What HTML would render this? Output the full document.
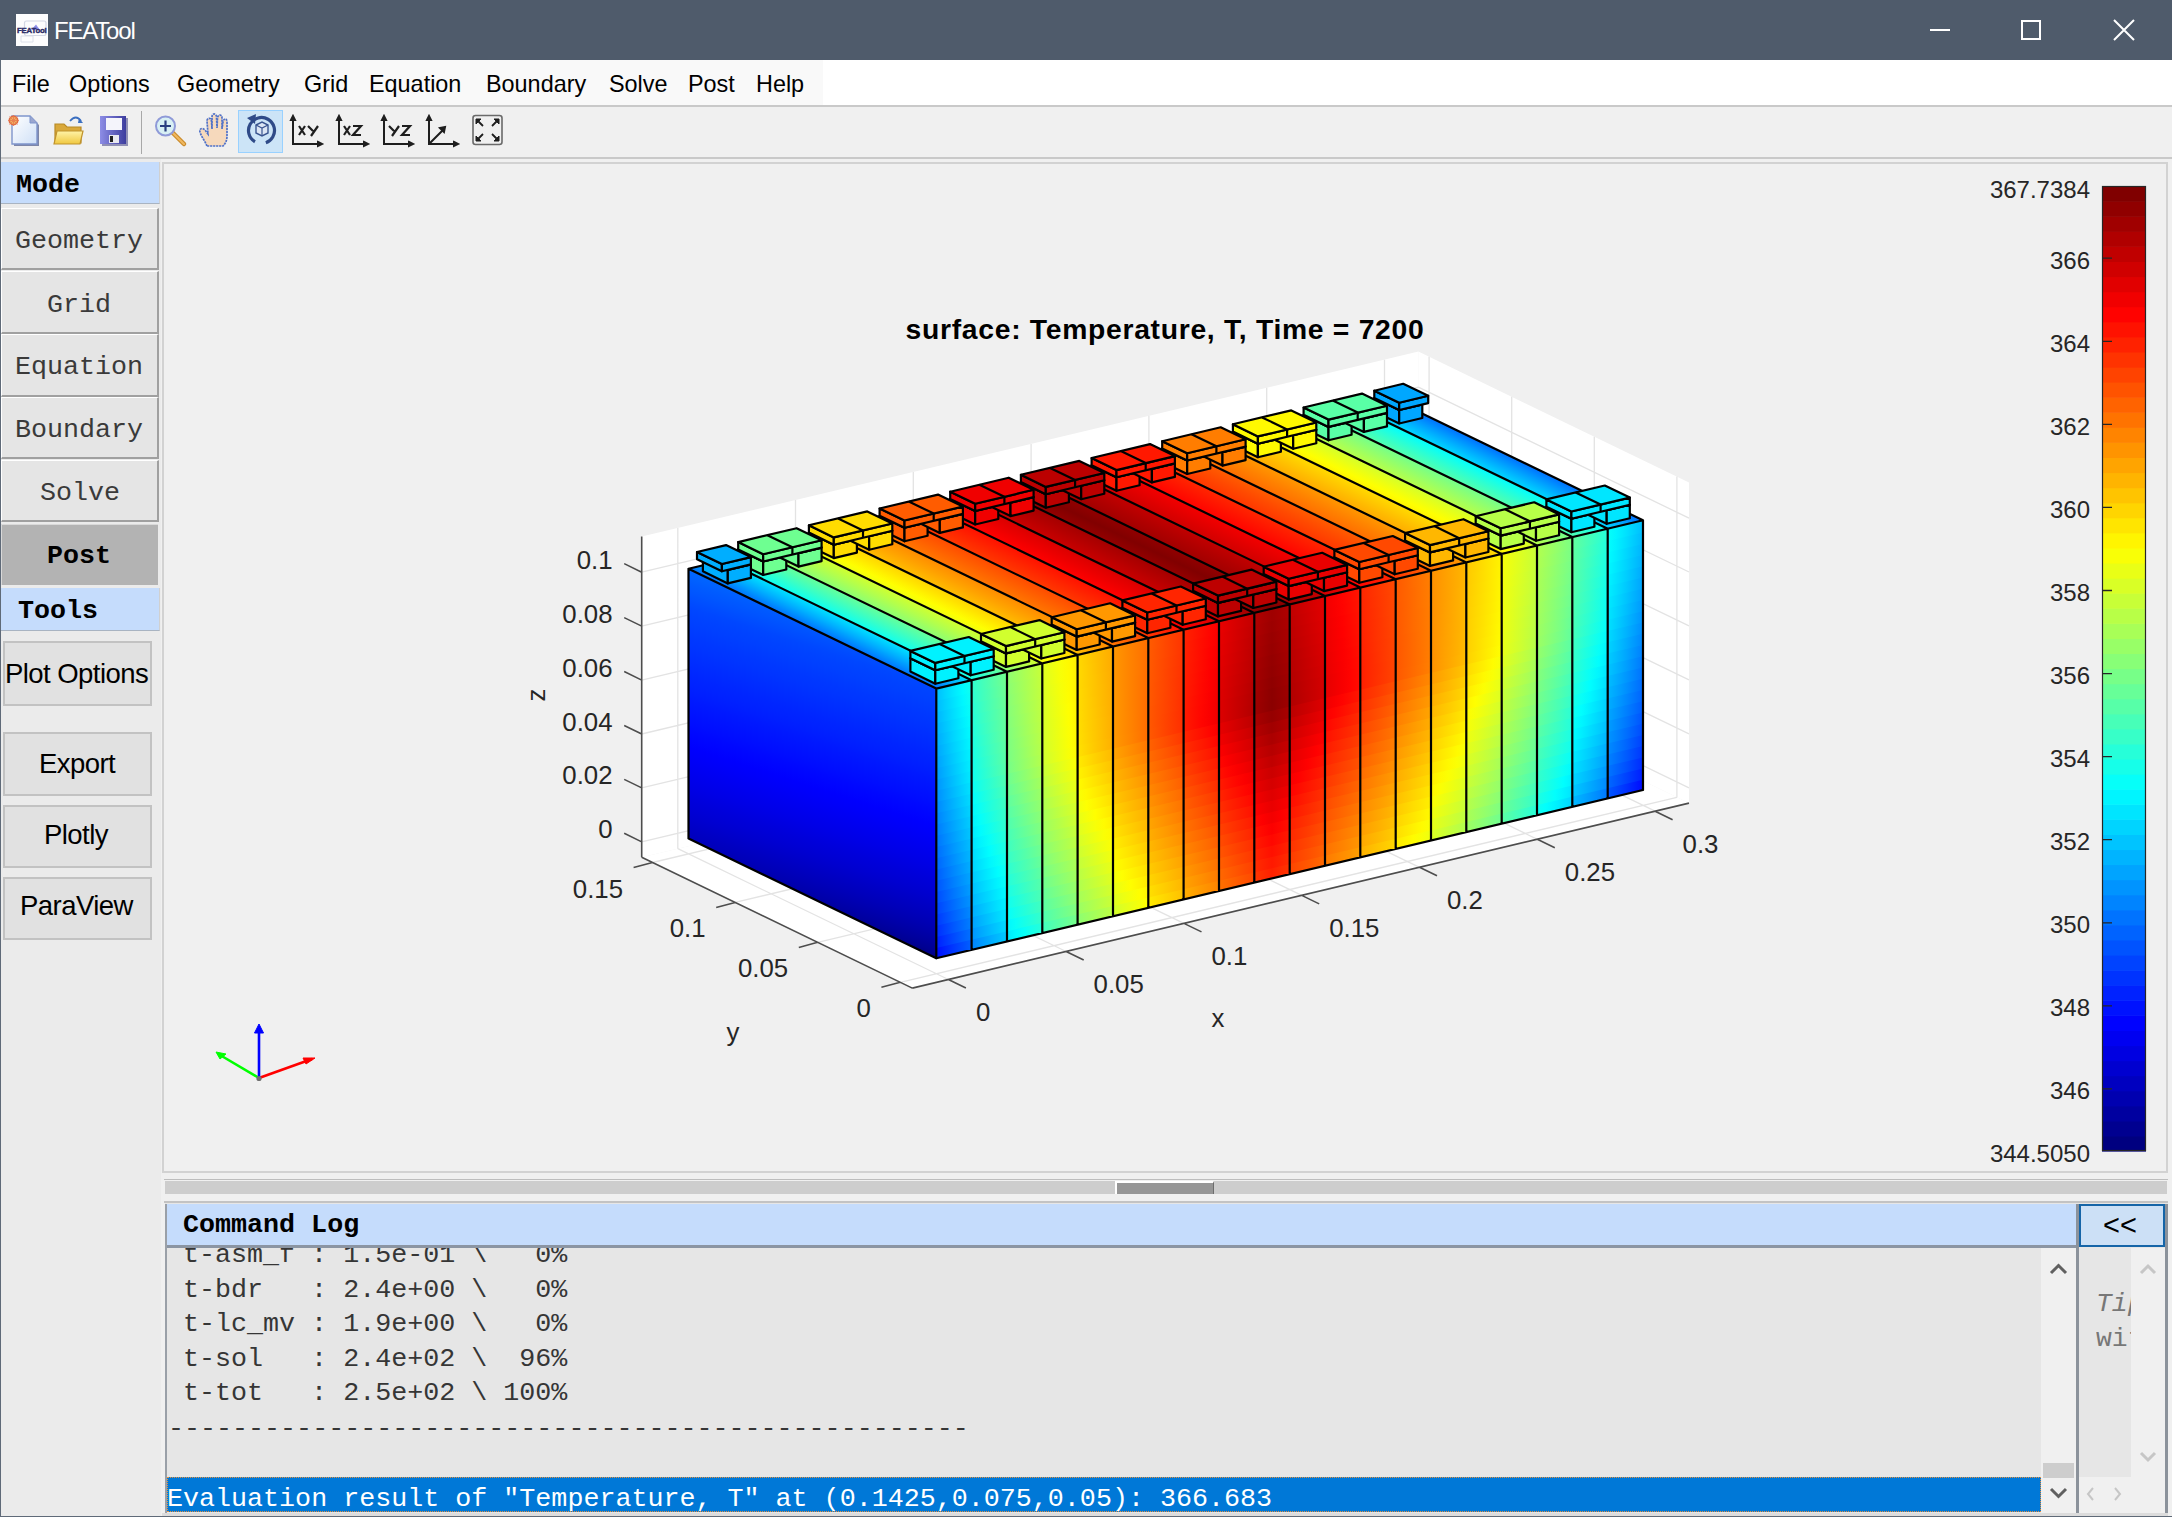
<!DOCTYPE html>
<html><head><meta charset="utf-8">
<style>
html,body{margin:0;padding:0;}
body{width:2172px;height:1517px;overflow:hidden;position:relative;background:#f0f0f0;font-family:"Liberation Sans",sans-serif;}
.a{position:absolute;}
.mono{font-family:"Liberation Mono",monospace;}
.plot{position:absolute;left:0;top:0;}
.tb{left:0;top:0;width:2172px;height:60px;background:#4f5b6b;}
.ttl{left:54px;top:16px;color:#fff;font-size:24px;line-height:30px;letter-spacing:-1.2px;}
.mb{left:0;top:60px;width:2172px;height:45px;background:#fff;}
.mbi{left:0;top:60px;width:823px;height:45px;background:#f9f9f9;}
.mi{top:70px;font-size:23.4px;line-height:28px;color:#000;}
.ln{background:#c9c9c9;}
.lbtn{left:1px;width:158px;background:#e5e5e5;border-top:1px solid #fff;border-left:1px solid #fff;border-right:2px solid #a0a0a0;border-bottom:2px solid #a0a0a0;box-sizing:border-box;}
.ltxt{font-size:26.7px;color:#3a3a3a;line-height:30px;}
.hdr{background:#c5dcfc;}
.fbtn{left:3px;width:149px;background:#e1e1e1;border:2px solid #c2c2c2;box-sizing:border-box;}
.ftxt{font-size:27.5px;letter-spacing:-0.55px;color:#000;line-height:30px;}
.log{font-size:26.7px;line-height:30px;color:#363636;white-space:pre;}
</style></head><body>
<!-- title bar -->
<div class="a tb"></div>
<svg class="a" style="left:16px;top:14px" width="32" height="32" viewBox="16 14 32 32"><rect x="16" y="14" width="32" height="32" fill="#fdfdfd"/>
<rect x="24.5" y="21" width="21.5" height="14.5" rx="2" fill="none" stroke="#d4d8e4" stroke-width="1.2"/>
<path d="M21 36H33V42H21Z" fill="none" stroke="#dde0ea" stroke-width="1"/>
<path d="M31 30L36 24.5L40 30Z" fill="#8f8fe8"/>
<text x="31.8" y="33" text-anchor="middle" font-family="Liberation Sans, sans-serif" font-weight="bold" font-size="7.8" fill="#2c2c66" stroke="#2c2c66" stroke-width="0.4" letter-spacing="-0.2">FEATool</text></svg>
<div class="a ttl">FEATool</div>
<div class="a" style="left:1930px;top:29px;width:20px;height:2px;background:#fff;"></div>
<div class="a" style="left:2021px;top:20px;width:16px;height:16px;border:2px solid #fff;"></div>
<svg class="a" style="left:2110px;top:16px" width="28" height="28"><path d="M4 4L24 24M24 4L4 24" stroke="#fff" stroke-width="2"/></svg>
<!-- menu -->
<div class="a mb"></div>
<div class="a mbi"></div>
<div class="a mi" style="left:12px">File</div>
<div class="a mi" style="left:69px">Options</div>
<div class="a mi" style="left:177px">Geometry</div>
<div class="a mi" style="left:304px">Grid</div>
<div class="a mi" style="left:369px">Equation</div>
<div class="a mi" style="left:486px">Boundary</div>
<div class="a mi" style="left:609px">Solve</div>
<div class="a mi" style="left:688px">Post</div>
<div class="a mi" style="left:756px">Help</div>
<div class="a ln" style="left:0;top:105px;width:2172px;height:2px;"></div>
<!-- toolbar -->
<div class="a ln" style="left:0;top:157px;width:2172px;height:2px;"></div>
<div class="a" style="left:141px;top:111px;width:1px;height:43px;background:#a8a8a8;"></div>
<div class="a" style="left:238px;top:110px;width:45px;height:43px;background:#cce4f7;border:1px solid #99d1ff;box-sizing:border-box;"></div>
<svg class="a" style="left:0;top:0" width="520" height="160" viewBox="0 0 520 160">
<defs>
<linearGradient id="tpg" x1="0" y1="0" x2="1" y2="1"><stop offset="0" stop-color="#ffffff"/><stop offset="1" stop-color="#cfe0f7"/></linearGradient>
<linearGradient id="tfg" x1="0" y1="0" x2="0" y2="1"><stop offset="0" stop-color="#fff3a8"/><stop offset="1" stop-color="#f0c840"/></linearGradient>
<linearGradient id="tsg" x1="0" y1="0" x2="1" y2="0"><stop offset="0" stop-color="#8d8de6"/><stop offset="1" stop-color="#3d3d9e"/></linearGradient>
</defs>
<!-- new doc -->
<path d="M14 118H32L39 125V146H14Z" fill="#7d86a8"/>
<path d="M12 116H30L37 123V144H12Z" fill="url(#tpg)" stroke="#7f95cc" stroke-width="1.4"/>
<path d="M30 116V123H37" fill="#9aa6cf" stroke="#7f95cc" stroke-width="1"/>
<circle cx="13.5" cy="120.5" r="4.2" fill="#f0b060" stroke="#e06a40" stroke-width="1.6"/>
<path d="M8 120.5H19M13.5 115V126M9.5 116.5L17.5 124.5M17.5 116.5L9.5 124.5" stroke="#e87850" stroke-width="1" opacity="0.8"/>
<!-- open folder -->
<path d="M55 124H64L67 127H81V143H55Z" fill="#d9a83a" stroke="#b88a25" stroke-width="1.2"/>
<path d="M57 131H83L80 144H54Z" fill="url(#tfg)" stroke="#c0932c" stroke-width="1.2"/>
<path d="M70 121Q76 114 81 121" stroke="#3b6fc0" stroke-width="1.8" fill="none"/>
<path d="M79 118L83 123L78 123Z" fill="#3b6fc0"/>
<!-- save -->
<path d="M102 118H128V146H102Z" fill="#30307a" opacity="0.5"/>
<path d="M100 116H126V144H100Z" fill="url(#tsg)"/>
<path d="M106 118H122V130H106Z" fill="#f4f4fb"/>
<path d="M109 135H119V143H109Z" fill="#e8e8f0"/>
<path d="M110 136H113V142H110Z" fill="#202020"/>
<!-- separator -->
<!-- zoom -->
<path d="M173 133L184 144" stroke="#c98a2a" stroke-width="4.5" stroke-linecap="round"/>
<path d="M173 133L184 144" stroke="#f0b860" stroke-width="2.2" stroke-linecap="round"/>
<circle cx="165.5" cy="126" r="9.5" fill="#d8f0f4" stroke="#8f9ad8" stroke-width="2"/>
<path d="M160 126H171M165.5 120.5V131.5" stroke="#2a3f80" stroke-width="2.2"/>
<!-- hand -->
<path d="M207 146C205 141 201 136 200 132C199 129 202 127 205 130L208 134L207 121C207 118 211 117 211.5 121L212 129L212 117C212 113 216.5 113 216.5 117L217 128L217.5 118C218 114 222 114 222 118L222 129L223 122C223.5 118 227 118 227 122L227 136C227 141 225 144 223 146Z" fill="#f6d9bc" stroke="#4e70c8" stroke-width="1.7" stroke-dasharray="2.2 0.8"/>
<!-- rotate -->
<circle cx="261.5" cy="130.5" r="13" fill="none" stroke="#2f4a88" stroke-width="3.2" stroke-dasharray="70 12" transform="rotate(120 261.5 130.5)"/>
<path d="M247 118L256 114L255 124Z" fill="#2f4a88"/>
<path d="M256 125L262 122L268 125L268 133L262 136L256 133Z" fill="#dce6f4" stroke="#3a5590" stroke-width="1.4"/>
<path d="M256 125L262 128L268 125M262 128V136" stroke="#3a5590" stroke-width="1.2" fill="none"/>
<g stroke="#1e1e1e" stroke-width="2" fill="none">
<!-- xy -->
<path d="M293 117V144H321"/><path d="M291 120L293 116L295 120Z M318 142L322 144L318 146Z" fill="#1e1e1e"/>
<path d="M299 126L305 135M305 126L299 135M308 126L313 131M318 126L311 136" stroke-width="2.2"/>
<!-- xz -->
<path d="M339 117V144H367"/><path d="M337 120L339 116L341 120Z M364 142L368 144L364 146Z" fill="#1e1e1e"/>
<path d="M344 126L350 135M350 126L344 135M353 126H361L353 135H361" stroke-width="2.2"/>
<!-- yz -->
<path d="M384 117V144H412"/><path d="M382 120L384 116L386 120Z M409 142L413 144L409 146Z" fill="#1e1e1e"/>
<path d="M389 126L394 131M399 126L392 136M402 126H410L402 135H410" stroke-width="2.2"/>
<!-- 3d -->
<path d="M429 117V144H457M429 144L443 130"/><path d="M427 120L429 116L431 120Z M454 142L458 144L454 146Z M440 128L445 127L444 132Z" fill="#1e1e1e"/>
<!-- fit -->
<rect x="473" y="115.5" width="29" height="29" rx="2.5" stroke="#6a6a6a" stroke-width="1.6"/>
<path d="M477 120L483 126M498 120L492 126M477 140L483 134M498 140L492 134" stroke-width="1.8"/>
<path d="M476 119H481L476 124Z M499 119H494L499 124Z M476 141H481L476 136Z M499 141H494L499 136Z" fill="#1e1e1e" stroke-width="1"/>
</g>
</svg>

<!-- left panel -->
<div class="a" style="left:0;top:159px;width:161px;height:1358px;background:#ebebeb;"></div>
<div class="a" style="left:0;top:60px;width:1px;height:1457px;background:#5f6a78;"></div>
<div class="a hdr" style="left:1px;top:162px;width:159px;height:42px;border-bottom:1px solid #a9b4c2;border-right:1px solid #d0d0d0;box-sizing:border-box;"></div>
<div class="a mono ltxt" style="left:16px;top:170px;font-weight:bold;color:#000;">Mode</div>
<div class="a lbtn" style="top:208px;height:62px;"></div>
<div class="a mono ltxt" style="left:15px;top:226px;">Geometry</div>
<div class="a lbtn" style="top:271px;height:63px;"></div>
<div class="a mono ltxt" style="left:47px;top:289.5px;">Grid</div>
<div class="a lbtn" style="top:334px;height:63px;"></div>
<div class="a mono ltxt" style="left:15px;top:351.5px;">Equation</div>
<div class="a lbtn" style="top:397px;height:62px;"></div>
<div class="a mono ltxt" style="left:15px;top:415px;">Boundary</div>
<div class="a lbtn" style="top:460px;height:62px;"></div>
<div class="a mono ltxt" style="left:40px;top:478px;">Solve</div>
<div class="a" style="left:1px;top:524px;width:157px;height:61px;background:#b3b3b3;border-top:1px solid #d9d9d9;border-left:1px solid #d9d9d9;box-sizing:border-box;"></div>
<div class="a mono ltxt" style="left:47px;top:541px;font-weight:bold;color:#000;">Post</div>
<div class="a hdr" style="left:1px;top:588px;width:159px;height:43px;border-bottom:1px solid #a9b4c2;border-right:1px solid #d0d0d0;box-sizing:border-box;"></div>
<div class="a mono ltxt" style="left:18px;top:595.5px;font-weight:bold;color:#000;">Tools</div>
<div class="a fbtn" style="top:641px;height:65px;"></div>
<div class="a ftxt" style="left:5px;top:659px;">Plot Options</div>
<div class="a fbtn" style="top:732px;height:64px;"></div>
<div class="a ftxt" style="left:39px;top:749px;">Export</div>
<div class="a fbtn" style="top:805px;height:63px;"></div>
<div class="a ftxt" style="left:44px;top:820px;">Plotly</div>
<div class="a fbtn" style="top:877px;height:63px;"></div>
<div class="a ftxt" style="left:20px;top:891px;">ParaView</div>
<!-- plot panel -->
<div class="a" style="left:162px;top:162px;width:2006px;height:1011px;background:#f0f0f0;border:2px solid #d2d2d2;box-sizing:border-box;"></div>
<svg class="plot" width="2172" height="1517" viewBox="0 0 2172 1517"><defs><linearGradient id="gL" gradientUnits="userSpaceOnUse" x1="936.3" y1="958.3" x2="1026.4" y2="677"><stop offset="0.000" stop-color="#000080"/><stop offset="0.025" stop-color="#000093"/><stop offset="0.050" stop-color="#00009f"/><stop offset="0.075" stop-color="#0000a9"/><stop offset="0.100" stop-color="#0000b2"/><stop offset="0.125" stop-color="#0000ba"/><stop offset="0.150" stop-color="#0000c1"/><stop offset="0.175" stop-color="#0000c8"/><stop offset="0.200" stop-color="#0000cf"/><stop offset="0.225" stop-color="#0000d5"/><stop offset="0.250" stop-color="#0000da"/><stop offset="0.275" stop-color="#0000e0"/><stop offset="0.300" stop-color="#0000e6"/><stop offset="0.325" stop-color="#0000eb"/><stop offset="0.350" stop-color="#0000f0"/><stop offset="0.375" stop-color="#0000f5"/><stop offset="0.400" stop-color="#0000fa"/><stop offset="0.425" stop-color="#0000fe"/><stop offset="0.450" stop-color="#0004ff"/><stop offset="0.475" stop-color="#0008ff"/><stop offset="0.500" stop-color="#000dff"/><stop offset="0.525" stop-color="#0011ff"/><stop offset="0.550" stop-color="#0015ff"/><stop offset="0.575" stop-color="#0019ff"/><stop offset="0.600" stop-color="#001eff"/><stop offset="0.625" stop-color="#0022ff"/><stop offset="0.650" stop-color="#0025ff"/><stop offset="0.675" stop-color="#0029ff"/><stop offset="0.700" stop-color="#002dff"/><stop offset="0.725" stop-color="#0031ff"/><stop offset="0.750" stop-color="#0035ff"/><stop offset="0.775" stop-color="#0038ff"/><stop offset="0.800" stop-color="#003cff"/><stop offset="0.825" stop-color="#0040ff"/><stop offset="0.850" stop-color="#0043ff"/><stop offset="0.875" stop-color="#0047ff"/><stop offset="0.900" stop-color="#004eff"/><stop offset="0.925" stop-color="#0055ff"/><stop offset="0.950" stop-color="#005bff"/><stop offset="0.975" stop-color="#0062ff"/><stop offset="1.000" stop-color="#0069ff"/></linearGradient><linearGradient id="gF0" gradientUnits="userSpaceOnUse" x1="936.3" y1="0" x2="1643" y2="0"><stop offset="0.0000" stop-color="#000cff"/><stop offset="0.0125" stop-color="#0023ff"/><stop offset="0.0250" stop-color="#0039ff"/><stop offset="0.0375" stop-color="#004dff"/><stop offset="0.0500" stop-color="#0061ff"/><stop offset="0.0500" stop-color="#0083ff"/><stop offset="0.0625" stop-color="#0096ff"/><stop offset="0.0750" stop-color="#00a9ff"/><stop offset="0.0875" stop-color="#00baff"/><stop offset="0.1000" stop-color="#00cbff"/><stop offset="0.1000" stop-color="#00e8ff"/><stop offset="0.1125" stop-color="#00f9ff"/><stop offset="0.1250" stop-color="#09fff6"/><stop offset="0.1375" stop-color="#19ffe6"/><stop offset="0.1500" stop-color="#27ffd8"/><stop offset="0.1500" stop-color="#40ffbf"/><stop offset="0.1625" stop-color="#4fffb0"/><stop offset="0.1750" stop-color="#5cffa3"/><stop offset="0.1875" stop-color="#6aff95"/><stop offset="0.2000" stop-color="#77ff88"/><stop offset="0.2000" stop-color="#8dff72"/><stop offset="0.2125" stop-color="#9aff65"/><stop offset="0.2250" stop-color="#a6ff59"/><stop offset="0.2375" stop-color="#b2ff4d"/><stop offset="0.2500" stop-color="#beff41"/><stop offset="0.2500" stop-color="#d2ff2d"/><stop offset="0.2625" stop-color="#deff21"/><stop offset="0.2750" stop-color="#eaff15"/><stop offset="0.2875" stop-color="#f5ff0a"/><stop offset="0.3000" stop-color="#fffe00"/><stop offset="0.3000" stop-color="#ffeb00"/><stop offset="0.3125" stop-color="#ffe000"/><stop offset="0.3250" stop-color="#ffd500"/><stop offset="0.3375" stop-color="#ffca00"/><stop offset="0.3500" stop-color="#ffc000"/><stop offset="0.3500" stop-color="#ffae00"/><stop offset="0.3625" stop-color="#ffa300"/><stop offset="0.3750" stop-color="#ff9800"/><stop offset="0.3875" stop-color="#ff8e00"/><stop offset="0.4000" stop-color="#ff8300"/><stop offset="0.4000" stop-color="#ff7100"/><stop offset="0.4125" stop-color="#ff6700"/><stop offset="0.4250" stop-color="#ff5d00"/><stop offset="0.4375" stop-color="#ff5200"/><stop offset="0.4500" stop-color="#ff4800"/><stop offset="0.4500" stop-color="#ff3600"/><stop offset="0.4625" stop-color="#ff2c00"/><stop offset="0.4750" stop-color="#ff2100"/><stop offset="0.4875" stop-color="#ff2b00"/><stop offset="0.5000" stop-color="#ff3400"/><stop offset="0.5000" stop-color="#ff4400"/><stop offset="0.5125" stop-color="#ff4e00"/><stop offset="0.5250" stop-color="#ff5700"/><stop offset="0.5375" stop-color="#ff6000"/><stop offset="0.5500" stop-color="#ff6a00"/><stop offset="0.5500" stop-color="#ff7a00"/><stop offset="0.5625" stop-color="#ff8300"/><stop offset="0.5750" stop-color="#ff8d00"/><stop offset="0.5875" stop-color="#ff9600"/><stop offset="0.6000" stop-color="#ffa000"/><stop offset="0.6000" stop-color="#ffb000"/><stop offset="0.6125" stop-color="#ffba00"/><stop offset="0.6250" stop-color="#ffc400"/><stop offset="0.6375" stop-color="#ffcd00"/><stop offset="0.6500" stop-color="#ffd700"/><stop offset="0.6500" stop-color="#ffe800"/><stop offset="0.6625" stop-color="#fff200"/><stop offset="0.6750" stop-color="#fffc00"/><stop offset="0.6875" stop-color="#f8ff07"/><stop offset="0.7000" stop-color="#eeff11"/><stop offset="0.7000" stop-color="#dcff23"/><stop offset="0.7125" stop-color="#d2ff2d"/><stop offset="0.7250" stop-color="#c7ff38"/><stop offset="0.7375" stop-color="#bcff43"/><stop offset="0.7500" stop-color="#b1ff4e"/><stop offset="0.7500" stop-color="#9eff61"/><stop offset="0.7625" stop-color="#93ff6c"/><stop offset="0.7750" stop-color="#88ff77"/><stop offset="0.7875" stop-color="#7cff83"/><stop offset="0.8000" stop-color="#70ff8f"/><stop offset="0.8000" stop-color="#5bffa4"/><stop offset="0.8125" stop-color="#4fffb0"/><stop offset="0.8250" stop-color="#42ffbd"/><stop offset="0.8375" stop-color="#35ffca"/><stop offset="0.8500" stop-color="#27ffd8"/><stop offset="0.8500" stop-color="#10ffef"/><stop offset="0.8625" stop-color="#02fffd"/><stop offset="0.8750" stop-color="#00f3ff"/><stop offset="0.8875" stop-color="#00e4ff"/><stop offset="0.9000" stop-color="#00d5ff"/><stop offset="0.9000" stop-color="#00baff"/><stop offset="0.9125" stop-color="#00aaff"/><stop offset="0.9250" stop-color="#009aff"/><stop offset="0.9375" stop-color="#0089ff"/><stop offset="0.9500" stop-color="#0077ff"/><stop offset="0.9500" stop-color="#0058ff"/><stop offset="0.9625" stop-color="#0046ff"/><stop offset="0.9750" stop-color="#0033ff"/><stop offset="0.9875" stop-color="#001fff"/><stop offset="1.0000" stop-color="#000aff"/></linearGradient><linearGradient id="gF1" gradientUnits="userSpaceOnUse" x1="936.3" y1="0" x2="1643" y2="0"><stop offset="0.0000" stop-color="#001eff"/><stop offset="0.0125" stop-color="#0035ff"/><stop offset="0.0250" stop-color="#004aff"/><stop offset="0.0375" stop-color="#005fff"/><stop offset="0.0500" stop-color="#0072ff"/><stop offset="0.0500" stop-color="#0094ff"/><stop offset="0.0625" stop-color="#00a7ff"/><stop offset="0.0750" stop-color="#00b9ff"/><stop offset="0.0875" stop-color="#00caff"/><stop offset="0.1000" stop-color="#00dbff"/><stop offset="0.1000" stop-color="#00f7ff"/><stop offset="0.1125" stop-color="#08fff7"/><stop offset="0.1250" stop-color="#18ffe7"/><stop offset="0.1375" stop-color="#27ffd8"/><stop offset="0.1500" stop-color="#36ffc9"/><stop offset="0.1500" stop-color="#4effb1"/><stop offset="0.1625" stop-color="#5cffa3"/><stop offset="0.1750" stop-color="#6aff95"/><stop offset="0.1875" stop-color="#77ff88"/><stop offset="0.2000" stop-color="#84ff7b"/><stop offset="0.2000" stop-color="#9aff65"/><stop offset="0.2125" stop-color="#a7ff58"/><stop offset="0.2250" stop-color="#b3ff4c"/><stop offset="0.2375" stop-color="#bfff40"/><stop offset="0.2500" stop-color="#caff35"/><stop offset="0.2500" stop-color="#deff21"/><stop offset="0.2625" stop-color="#eaff15"/><stop offset="0.2750" stop-color="#f5ff0a"/><stop offset="0.2875" stop-color="#fffe00"/><stop offset="0.3000" stop-color="#fff300"/><stop offset="0.3000" stop-color="#ffe000"/><stop offset="0.3125" stop-color="#ffd500"/><stop offset="0.3250" stop-color="#ffcb00"/><stop offset="0.3375" stop-color="#ffc000"/><stop offset="0.3500" stop-color="#ffb500"/><stop offset="0.3500" stop-color="#ffa300"/><stop offset="0.3625" stop-color="#ff9900"/><stop offset="0.3750" stop-color="#ff8f00"/><stop offset="0.3875" stop-color="#ff8400"/><stop offset="0.4000" stop-color="#ff7a00"/><stop offset="0.4000" stop-color="#ff6800"/><stop offset="0.4125" stop-color="#ff5e00"/><stop offset="0.4250" stop-color="#ff5400"/><stop offset="0.4375" stop-color="#ff4900"/><stop offset="0.4500" stop-color="#ff3f00"/><stop offset="0.4500" stop-color="#ff2d00"/><stop offset="0.4625" stop-color="#ff2300"/><stop offset="0.4750" stop-color="#ff1900"/><stop offset="0.4875" stop-color="#ff2200"/><stop offset="0.5000" stop-color="#ff2c00"/><stop offset="0.5000" stop-color="#ff3b00"/><stop offset="0.5125" stop-color="#ff4500"/><stop offset="0.5250" stop-color="#ff4e00"/><stop offset="0.5375" stop-color="#ff5700"/><stop offset="0.5500" stop-color="#ff6100"/><stop offset="0.5500" stop-color="#ff7100"/><stop offset="0.5625" stop-color="#ff7a00"/><stop offset="0.5750" stop-color="#ff8300"/><stop offset="0.5875" stop-color="#ff8d00"/><stop offset="0.6000" stop-color="#ff9600"/><stop offset="0.6000" stop-color="#ffa600"/><stop offset="0.6125" stop-color="#ffb000"/><stop offset="0.6250" stop-color="#ffb900"/><stop offset="0.6375" stop-color="#ffc300"/><stop offset="0.6500" stop-color="#ffcc00"/><stop offset="0.6500" stop-color="#ffdd00"/><stop offset="0.6625" stop-color="#ffe700"/><stop offset="0.6750" stop-color="#fff100"/><stop offset="0.6875" stop-color="#fffb00"/><stop offset="0.7000" stop-color="#f9ff06"/><stop offset="0.7000" stop-color="#e8ff17"/><stop offset="0.7125" stop-color="#ddff22"/><stop offset="0.7250" stop-color="#d3ff2c"/><stop offset="0.7375" stop-color="#c8ff37"/><stop offset="0.7500" stop-color="#beff41"/><stop offset="0.7500" stop-color="#abff54"/><stop offset="0.7625" stop-color="#a0ff5f"/><stop offset="0.7750" stop-color="#95ff6a"/><stop offset="0.7875" stop-color="#89ff76"/><stop offset="0.8000" stop-color="#7dff82"/><stop offset="0.8000" stop-color="#69ff96"/><stop offset="0.8125" stop-color="#5cffa3"/><stop offset="0.8250" stop-color="#50ffaf"/><stop offset="0.8375" stop-color="#43ffbc"/><stop offset="0.8500" stop-color="#36ffc9"/><stop offset="0.8500" stop-color="#1fffe0"/><stop offset="0.8625" stop-color="#11ffee"/><stop offset="0.8750" stop-color="#03fffc"/><stop offset="0.8875" stop-color="#00f3ff"/><stop offset="0.9000" stop-color="#00e4ff"/><stop offset="0.9000" stop-color="#00caff"/><stop offset="0.9125" stop-color="#00baff"/><stop offset="0.9250" stop-color="#00aaff"/><stop offset="0.9375" stop-color="#0099ff"/><stop offset="0.9500" stop-color="#0088ff"/><stop offset="0.9500" stop-color="#0069ff"/><stop offset="0.9625" stop-color="#0057ff"/><stop offset="0.9750" stop-color="#0044ff"/><stop offset="0.9875" stop-color="#0031ff"/><stop offset="1.0000" stop-color="#001dff"/></linearGradient><linearGradient id="gF2" gradientUnits="userSpaceOnUse" x1="936.3" y1="0" x2="1643" y2="0"><stop offset="0.0000" stop-color="#002cff"/><stop offset="0.0125" stop-color="#0042ff"/><stop offset="0.0250" stop-color="#0058ff"/><stop offset="0.0375" stop-color="#006cff"/><stop offset="0.0500" stop-color="#0080ff"/><stop offset="0.0500" stop-color="#00a0ff"/><stop offset="0.0625" stop-color="#00b3ff"/><stop offset="0.0750" stop-color="#00c5ff"/><stop offset="0.0875" stop-color="#00d7ff"/><stop offset="0.1000" stop-color="#00e7ff"/><stop offset="0.1000" stop-color="#04fffb"/><stop offset="0.1125" stop-color="#15ffea"/><stop offset="0.1250" stop-color="#24ffdb"/><stop offset="0.1375" stop-color="#33ffcc"/><stop offset="0.1500" stop-color="#41ffbe"/><stop offset="0.1500" stop-color="#5affa5"/><stop offset="0.1625" stop-color="#68ff97"/><stop offset="0.1750" stop-color="#75ff8a"/><stop offset="0.1875" stop-color="#83ff7c"/><stop offset="0.2000" stop-color="#8fff70"/><stop offset="0.2000" stop-color="#a5ff5a"/><stop offset="0.2125" stop-color="#b1ff4e"/><stop offset="0.2250" stop-color="#beff41"/><stop offset="0.2375" stop-color="#caff35"/><stop offset="0.2500" stop-color="#d5ff2a"/><stop offset="0.2500" stop-color="#e9ff16"/><stop offset="0.2625" stop-color="#f4ff0b"/><stop offset="0.2750" stop-color="#fffe00"/><stop offset="0.2875" stop-color="#fff300"/><stop offset="0.3000" stop-color="#ffe800"/><stop offset="0.3000" stop-color="#ffd600"/><stop offset="0.3125" stop-color="#ffcb00"/><stop offset="0.3250" stop-color="#ffc100"/><stop offset="0.3375" stop-color="#ffb600"/><stop offset="0.3500" stop-color="#ffac00"/><stop offset="0.3500" stop-color="#ff9a00"/><stop offset="0.3625" stop-color="#ff8f00"/><stop offset="0.3750" stop-color="#ff8500"/><stop offset="0.3875" stop-color="#ff7b00"/><stop offset="0.4000" stop-color="#ff7000"/><stop offset="0.4000" stop-color="#ff5f00"/><stop offset="0.4125" stop-color="#ff5500"/><stop offset="0.4250" stop-color="#ff4a00"/><stop offset="0.4375" stop-color="#ff4000"/><stop offset="0.4500" stop-color="#ff3600"/><stop offset="0.4500" stop-color="#ff2500"/><stop offset="0.4625" stop-color="#ff1a00"/><stop offset="0.4750" stop-color="#ff1000"/><stop offset="0.4875" stop-color="#ff1900"/><stop offset="0.5000" stop-color="#ff2300"/><stop offset="0.5000" stop-color="#ff3200"/><stop offset="0.5125" stop-color="#ff3c00"/><stop offset="0.5250" stop-color="#ff4500"/><stop offset="0.5375" stop-color="#ff4e00"/><stop offset="0.5500" stop-color="#ff5700"/><stop offset="0.5500" stop-color="#ff6700"/><stop offset="0.5625" stop-color="#ff7000"/><stop offset="0.5750" stop-color="#ff7a00"/><stop offset="0.5875" stop-color="#ff8300"/><stop offset="0.6000" stop-color="#ff8c00"/><stop offset="0.6000" stop-color="#ff9c00"/><stop offset="0.6125" stop-color="#ffa600"/><stop offset="0.6250" stop-color="#ffaf00"/><stop offset="0.6375" stop-color="#ffb900"/><stop offset="0.6500" stop-color="#ffc200"/><stop offset="0.6500" stop-color="#ffd300"/><stop offset="0.6625" stop-color="#ffdd00"/><stop offset="0.6750" stop-color="#ffe600"/><stop offset="0.6875" stop-color="#fff000"/><stop offset="0.7000" stop-color="#fffa00"/><stop offset="0.7000" stop-color="#f2ff0d"/><stop offset="0.7125" stop-color="#e8ff17"/><stop offset="0.7250" stop-color="#deff21"/><stop offset="0.7375" stop-color="#d3ff2c"/><stop offset="0.7500" stop-color="#c8ff37"/><stop offset="0.7500" stop-color="#b6ff49"/><stop offset="0.7625" stop-color="#abff54"/><stop offset="0.7750" stop-color="#a0ff5f"/><stop offset="0.7875" stop-color="#94ff6b"/><stop offset="0.8000" stop-color="#88ff77"/><stop offset="0.8000" stop-color="#74ff8b"/><stop offset="0.8125" stop-color="#68ff97"/><stop offset="0.8250" stop-color="#5bffa4"/><stop offset="0.8375" stop-color="#4fffb0"/><stop offset="0.8500" stop-color="#41ffbe"/><stop offset="0.8500" stop-color="#2bffd4"/><stop offset="0.8625" stop-color="#1dffe2"/><stop offset="0.8750" stop-color="#0ffff0"/><stop offset="0.8875" stop-color="#00ffff"/><stop offset="0.9000" stop-color="#00f0ff"/><stop offset="0.9000" stop-color="#00d6ff"/><stop offset="0.9125" stop-color="#00c7ff"/><stop offset="0.9250" stop-color="#00b7ff"/><stop offset="0.9375" stop-color="#00a6ff"/><stop offset="0.9500" stop-color="#0095ff"/><stop offset="0.9500" stop-color="#0076ff"/><stop offset="0.9625" stop-color="#0064ff"/><stop offset="0.9750" stop-color="#0052ff"/><stop offset="0.9875" stop-color="#003eff"/><stop offset="1.0000" stop-color="#002aff"/></linearGradient><linearGradient id="gF3" gradientUnits="userSpaceOnUse" x1="936.3" y1="0" x2="1643" y2="0"><stop offset="0.0000" stop-color="#0037ff"/><stop offset="0.0125" stop-color="#004eff"/><stop offset="0.0250" stop-color="#0063ff"/><stop offset="0.0375" stop-color="#0077ff"/><stop offset="0.0500" stop-color="#008bff"/><stop offset="0.0500" stop-color="#00acff"/><stop offset="0.0625" stop-color="#00beff"/><stop offset="0.0750" stop-color="#00d0ff"/><stop offset="0.0875" stop-color="#00e2ff"/><stop offset="0.1000" stop-color="#00f2ff"/><stop offset="0.1000" stop-color="#0ffff0"/><stop offset="0.1125" stop-color="#1fffe0"/><stop offset="0.1250" stop-color="#2fffd0"/><stop offset="0.1375" stop-color="#3effc1"/><stop offset="0.1500" stop-color="#4cffb3"/><stop offset="0.1500" stop-color="#64ff9b"/><stop offset="0.1625" stop-color="#72ff8d"/><stop offset="0.1750" stop-color="#80ff7f"/><stop offset="0.1875" stop-color="#8dff72"/><stop offset="0.2000" stop-color="#9aff65"/><stop offset="0.2000" stop-color="#afff50"/><stop offset="0.2125" stop-color="#bcff43"/><stop offset="0.2250" stop-color="#c8ff37"/><stop offset="0.2375" stop-color="#d4ff2b"/><stop offset="0.2500" stop-color="#dfff20"/><stop offset="0.2500" stop-color="#f3ff0c"/><stop offset="0.2625" stop-color="#feff01"/><stop offset="0.2750" stop-color="#fff400"/><stop offset="0.2875" stop-color="#ffe900"/><stop offset="0.3000" stop-color="#ffdf00"/><stop offset="0.3000" stop-color="#ffcc00"/><stop offset="0.3125" stop-color="#ffc100"/><stop offset="0.3250" stop-color="#ffb700"/><stop offset="0.3375" stop-color="#ffac00"/><stop offset="0.3500" stop-color="#ffa200"/><stop offset="0.3500" stop-color="#ff9000"/><stop offset="0.3625" stop-color="#ff8600"/><stop offset="0.3750" stop-color="#ff7b00"/><stop offset="0.3875" stop-color="#ff7100"/><stop offset="0.4000" stop-color="#ff6700"/><stop offset="0.4000" stop-color="#ff5500"/><stop offset="0.4125" stop-color="#ff4b00"/><stop offset="0.4250" stop-color="#ff4100"/><stop offset="0.4375" stop-color="#ff3700"/><stop offset="0.4500" stop-color="#ff2d00"/><stop offset="0.4500" stop-color="#ff1b00"/><stop offset="0.4625" stop-color="#ff1100"/><stop offset="0.4750" stop-color="#ff0700"/><stop offset="0.4875" stop-color="#ff1000"/><stop offset="0.5000" stop-color="#ff1900"/><stop offset="0.5000" stop-color="#ff2900"/><stop offset="0.5125" stop-color="#ff3200"/><stop offset="0.5250" stop-color="#ff3b00"/><stop offset="0.5375" stop-color="#ff4500"/><stop offset="0.5500" stop-color="#ff4e00"/><stop offset="0.5500" stop-color="#ff5e00"/><stop offset="0.5625" stop-color="#ff6700"/><stop offset="0.5750" stop-color="#ff7000"/><stop offset="0.5875" stop-color="#ff7900"/><stop offset="0.6000" stop-color="#ff8300"/><stop offset="0.6000" stop-color="#ff9300"/><stop offset="0.6125" stop-color="#ff9c00"/><stop offset="0.6250" stop-color="#ffa600"/><stop offset="0.6375" stop-color="#ffaf00"/><stop offset="0.6500" stop-color="#ffb900"/><stop offset="0.6500" stop-color="#ffc900"/><stop offset="0.6625" stop-color="#ffd300"/><stop offset="0.6750" stop-color="#ffdd00"/><stop offset="0.6875" stop-color="#ffe600"/><stop offset="0.7000" stop-color="#fff000"/><stop offset="0.7000" stop-color="#fcff03"/><stop offset="0.7125" stop-color="#f2ff0d"/><stop offset="0.7250" stop-color="#e8ff17"/><stop offset="0.7375" stop-color="#ddff22"/><stop offset="0.7500" stop-color="#d3ff2c"/><stop offset="0.7500" stop-color="#c0ff3f"/><stop offset="0.7625" stop-color="#b5ff4a"/><stop offset="0.7750" stop-color="#aaff55"/><stop offset="0.7875" stop-color="#9eff61"/><stop offset="0.8000" stop-color="#93ff6c"/><stop offset="0.8000" stop-color="#7eff81"/><stop offset="0.8125" stop-color="#72ff8d"/><stop offset="0.8250" stop-color="#66ff99"/><stop offset="0.8375" stop-color="#59ffa6"/><stop offset="0.8500" stop-color="#4cffb3"/><stop offset="0.8500" stop-color="#35ffca"/><stop offset="0.8625" stop-color="#28ffd7"/><stop offset="0.8750" stop-color="#1affe5"/><stop offset="0.8875" stop-color="#0bfff4"/><stop offset="0.9000" stop-color="#00fbff"/><stop offset="0.9000" stop-color="#00e1ff"/><stop offset="0.9125" stop-color="#00d2ff"/><stop offset="0.9250" stop-color="#00c2ff"/><stop offset="0.9375" stop-color="#00b1ff"/><stop offset="0.9500" stop-color="#00a0ff"/><stop offset="0.9500" stop-color="#0082ff"/><stop offset="0.9625" stop-color="#0070ff"/><stop offset="0.9750" stop-color="#005dff"/><stop offset="0.9875" stop-color="#004aff"/><stop offset="1.0000" stop-color="#0036ff"/></linearGradient><linearGradient id="gF4" gradientUnits="userSpaceOnUse" x1="936.3" y1="0" x2="1643" y2="0"><stop offset="0.0000" stop-color="#0042ff"/><stop offset="0.0125" stop-color="#0058ff"/><stop offset="0.0250" stop-color="#006dff"/><stop offset="0.0375" stop-color="#0082ff"/><stop offset="0.0500" stop-color="#0095ff"/><stop offset="0.0500" stop-color="#00b6ff"/><stop offset="0.0625" stop-color="#00c9ff"/><stop offset="0.0750" stop-color="#00daff"/><stop offset="0.0875" stop-color="#00ecff"/><stop offset="0.1000" stop-color="#00fcff"/><stop offset="0.1000" stop-color="#19ffe6"/><stop offset="0.1125" stop-color="#29ffd6"/><stop offset="0.1250" stop-color="#39ffc6"/><stop offset="0.1375" stop-color="#48ffb7"/><stop offset="0.1500" stop-color="#56ffa9"/><stop offset="0.1500" stop-color="#6eff91"/><stop offset="0.1625" stop-color="#7cff83"/><stop offset="0.1750" stop-color="#8aff75"/><stop offset="0.1875" stop-color="#97ff68"/><stop offset="0.2000" stop-color="#a4ff5b"/><stop offset="0.2000" stop-color="#b9ff46"/><stop offset="0.2125" stop-color="#c6ff39"/><stop offset="0.2250" stop-color="#d2ff2d"/><stop offset="0.2375" stop-color="#deff21"/><stop offset="0.2500" stop-color="#e9ff16"/><stop offset="0.2500" stop-color="#fdff02"/><stop offset="0.2625" stop-color="#fff600"/><stop offset="0.2750" stop-color="#ffeb00"/><stop offset="0.2875" stop-color="#ffe000"/><stop offset="0.3000" stop-color="#ffd500"/><stop offset="0.3000" stop-color="#ffc200"/><stop offset="0.3125" stop-color="#ffb800"/><stop offset="0.3250" stop-color="#ffad00"/><stop offset="0.3375" stop-color="#ffa300"/><stop offset="0.3500" stop-color="#ff9800"/><stop offset="0.3500" stop-color="#ff8600"/><stop offset="0.3625" stop-color="#ff7c00"/><stop offset="0.3750" stop-color="#ff7200"/><stop offset="0.3875" stop-color="#ff6800"/><stop offset="0.4000" stop-color="#ff5d00"/><stop offset="0.4000" stop-color="#ff4c00"/><stop offset="0.4125" stop-color="#ff4200"/><stop offset="0.4250" stop-color="#ff3700"/><stop offset="0.4375" stop-color="#ff2d00"/><stop offset="0.4500" stop-color="#ff2300"/><stop offset="0.4500" stop-color="#ff1200"/><stop offset="0.4625" stop-color="#ff0800"/><stop offset="0.4750" stop-color="#fc0000"/><stop offset="0.4875" stop-color="#ff0700"/><stop offset="0.5000" stop-color="#ff1000"/><stop offset="0.5000" stop-color="#ff2000"/><stop offset="0.5125" stop-color="#ff2900"/><stop offset="0.5250" stop-color="#ff3200"/><stop offset="0.5375" stop-color="#ff3b00"/><stop offset="0.5500" stop-color="#ff4400"/><stop offset="0.5500" stop-color="#ff5400"/><stop offset="0.5625" stop-color="#ff5d00"/><stop offset="0.5750" stop-color="#ff6700"/><stop offset="0.5875" stop-color="#ff7000"/><stop offset="0.6000" stop-color="#ff7900"/><stop offset="0.6000" stop-color="#ff8900"/><stop offset="0.6125" stop-color="#ff9300"/><stop offset="0.6250" stop-color="#ff9c00"/><stop offset="0.6375" stop-color="#ffa500"/><stop offset="0.6500" stop-color="#ffaf00"/><stop offset="0.6500" stop-color="#ffbf00"/><stop offset="0.6625" stop-color="#ffc900"/><stop offset="0.6750" stop-color="#ffd300"/><stop offset="0.6875" stop-color="#ffdd00"/><stop offset="0.7000" stop-color="#ffe700"/><stop offset="0.7000" stop-color="#fff800"/><stop offset="0.7125" stop-color="#fcff03"/><stop offset="0.7250" stop-color="#f2ff0d"/><stop offset="0.7375" stop-color="#e7ff18"/><stop offset="0.7500" stop-color="#dcff23"/><stop offset="0.7500" stop-color="#caff35"/><stop offset="0.7625" stop-color="#bfff40"/><stop offset="0.7750" stop-color="#b4ff4b"/><stop offset="0.7875" stop-color="#a8ff57"/><stop offset="0.8000" stop-color="#9dff62"/><stop offset="0.8000" stop-color="#88ff77"/><stop offset="0.8125" stop-color="#7cff83"/><stop offset="0.8250" stop-color="#70ff8f"/><stop offset="0.8375" stop-color="#63ff9c"/><stop offset="0.8500" stop-color="#56ffa9"/><stop offset="0.8500" stop-color="#3fffc0"/><stop offset="0.8625" stop-color="#32ffcd"/><stop offset="0.8750" stop-color="#24ffdb"/><stop offset="0.8875" stop-color="#15ffea"/><stop offset="0.9000" stop-color="#06fff9"/><stop offset="0.9000" stop-color="#00ebff"/><stop offset="0.9125" stop-color="#00dcff"/><stop offset="0.9250" stop-color="#00ccff"/><stop offset="0.9375" stop-color="#00bbff"/><stop offset="0.9500" stop-color="#00aaff"/><stop offset="0.9500" stop-color="#008cff"/><stop offset="0.9625" stop-color="#007aff"/><stop offset="0.9750" stop-color="#0068ff"/><stop offset="0.9875" stop-color="#0054ff"/><stop offset="1.0000" stop-color="#0040ff"/></linearGradient><linearGradient id="gF5" gradientUnits="userSpaceOnUse" x1="936.3" y1="0" x2="1643" y2="0"><stop offset="0.0000" stop-color="#004bff"/><stop offset="0.0125" stop-color="#0061ff"/><stop offset="0.0250" stop-color="#0077ff"/><stop offset="0.0375" stop-color="#008bff"/><stop offset="0.0500" stop-color="#009fff"/><stop offset="0.0500" stop-color="#00bfff"/><stop offset="0.0625" stop-color="#00d2ff"/><stop offset="0.0750" stop-color="#00e4ff"/><stop offset="0.0875" stop-color="#00f5ff"/><stop offset="0.1000" stop-color="#07fff8"/><stop offset="0.1000" stop-color="#23ffdc"/><stop offset="0.1125" stop-color="#33ffcc"/><stop offset="0.1250" stop-color="#42ffbd"/><stop offset="0.1375" stop-color="#51ffae"/><stop offset="0.1500" stop-color="#60ff9f"/><stop offset="0.1500" stop-color="#78ff87"/><stop offset="0.1625" stop-color="#86ff79"/><stop offset="0.1750" stop-color="#93ff6c"/><stop offset="0.1875" stop-color="#a0ff5f"/><stop offset="0.2000" stop-color="#adff52"/><stop offset="0.2000" stop-color="#c3ff3c"/><stop offset="0.2125" stop-color="#cfff30"/><stop offset="0.2250" stop-color="#dbff24"/><stop offset="0.2375" stop-color="#e7ff18"/><stop offset="0.2500" stop-color="#f3ff0c"/><stop offset="0.2500" stop-color="#fff800"/><stop offset="0.2625" stop-color="#ffec00"/><stop offset="0.2750" stop-color="#ffe100"/><stop offset="0.2875" stop-color="#ffd600"/><stop offset="0.3000" stop-color="#ffcb00"/><stop offset="0.3000" stop-color="#ffb900"/><stop offset="0.3125" stop-color="#ffae00"/><stop offset="0.3250" stop-color="#ffa300"/><stop offset="0.3375" stop-color="#ff9900"/><stop offset="0.3500" stop-color="#ff8f00"/><stop offset="0.3500" stop-color="#ff7d00"/><stop offset="0.3625" stop-color="#ff7200"/><stop offset="0.3750" stop-color="#ff6800"/><stop offset="0.3875" stop-color="#ff5e00"/><stop offset="0.4000" stop-color="#ff5400"/><stop offset="0.4000" stop-color="#ff4200"/><stop offset="0.4125" stop-color="#ff3800"/><stop offset="0.4250" stop-color="#ff2e00"/><stop offset="0.4375" stop-color="#ff2400"/><stop offset="0.4500" stop-color="#ff1a00"/><stop offset="0.4500" stop-color="#ff0800"/><stop offset="0.4625" stop-color="#fd0000"/><stop offset="0.4750" stop-color="#f30000"/><stop offset="0.4875" stop-color="#fc0000"/><stop offset="0.5000" stop-color="#ff0600"/><stop offset="0.5000" stop-color="#ff1600"/><stop offset="0.5125" stop-color="#ff1f00"/><stop offset="0.5250" stop-color="#ff2800"/><stop offset="0.5375" stop-color="#ff3100"/><stop offset="0.5500" stop-color="#ff3b00"/><stop offset="0.5500" stop-color="#ff4a00"/><stop offset="0.5625" stop-color="#ff5400"/><stop offset="0.5750" stop-color="#ff5d00"/><stop offset="0.5875" stop-color="#ff6600"/><stop offset="0.6000" stop-color="#ff7000"/><stop offset="0.6000" stop-color="#ff8000"/><stop offset="0.6125" stop-color="#ff8900"/><stop offset="0.6250" stop-color="#ff9200"/><stop offset="0.6375" stop-color="#ff9c00"/><stop offset="0.6500" stop-color="#ffa500"/><stop offset="0.6500" stop-color="#ffb600"/><stop offset="0.6625" stop-color="#ffbf00"/><stop offset="0.6750" stop-color="#ffc900"/><stop offset="0.6875" stop-color="#ffd300"/><stop offset="0.7000" stop-color="#ffdd00"/><stop offset="0.7000" stop-color="#ffee00"/><stop offset="0.7125" stop-color="#fff900"/><stop offset="0.7250" stop-color="#fbff04"/><stop offset="0.7375" stop-color="#f1ff0e"/><stop offset="0.7500" stop-color="#e6ff19"/><stop offset="0.7500" stop-color="#d3ff2c"/><stop offset="0.7625" stop-color="#c9ff36"/><stop offset="0.7750" stop-color="#bdff42"/><stop offset="0.7875" stop-color="#b2ff4d"/><stop offset="0.8000" stop-color="#a6ff59"/><stop offset="0.8000" stop-color="#92ff6d"/><stop offset="0.8125" stop-color="#86ff79"/><stop offset="0.8250" stop-color="#79ff86"/><stop offset="0.8375" stop-color="#6dff92"/><stop offset="0.8500" stop-color="#60ff9f"/><stop offset="0.8500" stop-color="#49ffb6"/><stop offset="0.8625" stop-color="#3bffc4"/><stop offset="0.8750" stop-color="#2dffd2"/><stop offset="0.8875" stop-color="#1fffe0"/><stop offset="0.9000" stop-color="#10ffef"/><stop offset="0.9000" stop-color="#00f5ff"/><stop offset="0.9125" stop-color="#00e5ff"/><stop offset="0.9250" stop-color="#00d5ff"/><stop offset="0.9375" stop-color="#00c5ff"/><stop offset="0.9500" stop-color="#00b4ff"/><stop offset="0.9500" stop-color="#0095ff"/><stop offset="0.9625" stop-color="#0084ff"/><stop offset="0.9750" stop-color="#0071ff"/><stop offset="0.9875" stop-color="#005eff"/><stop offset="1.0000" stop-color="#004aff"/></linearGradient><linearGradient id="gF6" gradientUnits="userSpaceOnUse" x1="936.3" y1="0" x2="1643" y2="0"><stop offset="0.0000" stop-color="#0054ff"/><stop offset="0.0125" stop-color="#006aff"/><stop offset="0.0250" stop-color="#0080ff"/><stop offset="0.0375" stop-color="#0094ff"/><stop offset="0.0500" stop-color="#00a7ff"/><stop offset="0.0500" stop-color="#00c8ff"/><stop offset="0.0625" stop-color="#00dbff"/><stop offset="0.0750" stop-color="#00edff"/><stop offset="0.0875" stop-color="#00feff"/><stop offset="0.1000" stop-color="#10ffef"/><stop offset="0.1000" stop-color="#2cffd3"/><stop offset="0.1125" stop-color="#3cffc3"/><stop offset="0.1250" stop-color="#4bffb4"/><stop offset="0.1375" stop-color="#5affa5"/><stop offset="0.1500" stop-color="#69ff96"/><stop offset="0.1500" stop-color="#81ff7e"/><stop offset="0.1625" stop-color="#8fff70"/><stop offset="0.1750" stop-color="#9dff62"/><stop offset="0.1875" stop-color="#aaff55"/><stop offset="0.2000" stop-color="#b6ff49"/><stop offset="0.2000" stop-color="#ccff33"/><stop offset="0.2125" stop-color="#d9ff26"/><stop offset="0.2250" stop-color="#e5ff1a"/><stop offset="0.2375" stop-color="#f1ff0e"/><stop offset="0.2500" stop-color="#fcff03"/><stop offset="0.2500" stop-color="#ffee00"/><stop offset="0.2625" stop-color="#ffe300"/><stop offset="0.2750" stop-color="#ffd800"/><stop offset="0.2875" stop-color="#ffcd00"/><stop offset="0.3000" stop-color="#ffc200"/><stop offset="0.3000" stop-color="#ffaf00"/><stop offset="0.3125" stop-color="#ffa400"/><stop offset="0.3250" stop-color="#ff9a00"/><stop offset="0.3375" stop-color="#ff8f00"/><stop offset="0.3500" stop-color="#ff8500"/><stop offset="0.3500" stop-color="#ff7300"/><stop offset="0.3625" stop-color="#ff6900"/><stop offset="0.3750" stop-color="#ff5e00"/><stop offset="0.3875" stop-color="#ff5400"/><stop offset="0.4000" stop-color="#ff4a00"/><stop offset="0.4000" stop-color="#ff3800"/><stop offset="0.4125" stop-color="#ff2e00"/><stop offset="0.4250" stop-color="#ff2400"/><stop offset="0.4375" stop-color="#ff1a00"/><stop offset="0.4500" stop-color="#ff1000"/><stop offset="0.4500" stop-color="#fd0000"/><stop offset="0.4625" stop-color="#f30000"/><stop offset="0.4750" stop-color="#e90000"/><stop offset="0.4875" stop-color="#f20000"/><stop offset="0.5000" stop-color="#fb0000"/><stop offset="0.5000" stop-color="#ff0c00"/><stop offset="0.5125" stop-color="#ff1500"/><stop offset="0.5250" stop-color="#ff1f00"/><stop offset="0.5375" stop-color="#ff2800"/><stop offset="0.5500" stop-color="#ff3100"/><stop offset="0.5500" stop-color="#ff4100"/><stop offset="0.5625" stop-color="#ff4a00"/><stop offset="0.5750" stop-color="#ff5300"/><stop offset="0.5875" stop-color="#ff5d00"/><stop offset="0.6000" stop-color="#ff6600"/><stop offset="0.6000" stop-color="#ff7600"/><stop offset="0.6125" stop-color="#ff7f00"/><stop offset="0.6250" stop-color="#ff8900"/><stop offset="0.6375" stop-color="#ff9200"/><stop offset="0.6500" stop-color="#ff9c00"/><stop offset="0.6500" stop-color="#ffac00"/><stop offset="0.6625" stop-color="#ffb600"/><stop offset="0.6750" stop-color="#ffc000"/><stop offset="0.6875" stop-color="#ffca00"/><stop offset="0.7000" stop-color="#ffd400"/><stop offset="0.7000" stop-color="#ffe500"/><stop offset="0.7125" stop-color="#ffef00"/><stop offset="0.7250" stop-color="#fff900"/><stop offset="0.7375" stop-color="#faff05"/><stop offset="0.7500" stop-color="#efff10"/><stop offset="0.7500" stop-color="#ddff22"/><stop offset="0.7625" stop-color="#d2ff2d"/><stop offset="0.7750" stop-color="#c7ff38"/><stop offset="0.7875" stop-color="#bbff44"/><stop offset="0.8000" stop-color="#b0ff4f"/><stop offset="0.8000" stop-color="#9bff64"/><stop offset="0.8125" stop-color="#8fff70"/><stop offset="0.8250" stop-color="#83ff7c"/><stop offset="0.8375" stop-color="#76ff89"/><stop offset="0.8500" stop-color="#69ff96"/><stop offset="0.8500" stop-color="#52ffad"/><stop offset="0.8625" stop-color="#44ffbb"/><stop offset="0.8750" stop-color="#36ffc9"/><stop offset="0.8875" stop-color="#28ffd7"/><stop offset="0.9000" stop-color="#19ffe6"/><stop offset="0.9000" stop-color="#00feff"/><stop offset="0.9125" stop-color="#00efff"/><stop offset="0.9250" stop-color="#00deff"/><stop offset="0.9375" stop-color="#00ceff"/><stop offset="0.9500" stop-color="#00bdff"/><stop offset="0.9500" stop-color="#009eff"/><stop offset="0.9625" stop-color="#008cff"/><stop offset="0.9750" stop-color="#007aff"/><stop offset="0.9875" stop-color="#0067ff"/><stop offset="1.0000" stop-color="#0052ff"/></linearGradient><linearGradient id="gF7" gradientUnits="userSpaceOnUse" x1="936.3" y1="0" x2="1643" y2="0"><stop offset="0.0000" stop-color="#005cff"/><stop offset="0.0125" stop-color="#0073ff"/><stop offset="0.0250" stop-color="#0088ff"/><stop offset="0.0375" stop-color="#009cff"/><stop offset="0.0500" stop-color="#00b0ff"/><stop offset="0.0500" stop-color="#00d1ff"/><stop offset="0.0625" stop-color="#00e4ff"/><stop offset="0.0750" stop-color="#00f6ff"/><stop offset="0.0875" stop-color="#08fff7"/><stop offset="0.1000" stop-color="#19ffe6"/><stop offset="0.1000" stop-color="#35ffca"/><stop offset="0.1125" stop-color="#45ffba"/><stop offset="0.1250" stop-color="#54ffab"/><stop offset="0.1375" stop-color="#63ff9c"/><stop offset="0.1500" stop-color="#72ff8d"/><stop offset="0.1500" stop-color="#8aff75"/><stop offset="0.1625" stop-color="#98ff67"/><stop offset="0.1750" stop-color="#a6ff59"/><stop offset="0.1875" stop-color="#b3ff4c"/><stop offset="0.2000" stop-color="#c0ff3f"/><stop offset="0.2000" stop-color="#d5ff2a"/><stop offset="0.2125" stop-color="#e2ff1d"/><stop offset="0.2250" stop-color="#eeff11"/><stop offset="0.2375" stop-color="#faff05"/><stop offset="0.2500" stop-color="#fff900"/><stop offset="0.2500" stop-color="#ffe500"/><stop offset="0.2625" stop-color="#ffd900"/><stop offset="0.2750" stop-color="#ffce00"/><stop offset="0.2875" stop-color="#ffc300"/><stop offset="0.3000" stop-color="#ffb800"/><stop offset="0.3000" stop-color="#ffa600"/><stop offset="0.3125" stop-color="#ff9b00"/><stop offset="0.3250" stop-color="#ff9000"/><stop offset="0.3375" stop-color="#ff8600"/><stop offset="0.3500" stop-color="#ff7b00"/><stop offset="0.3500" stop-color="#ff6900"/><stop offset="0.3625" stop-color="#ff5f00"/><stop offset="0.3750" stop-color="#ff5500"/><stop offset="0.3875" stop-color="#ff4a00"/><stop offset="0.4000" stop-color="#ff4000"/><stop offset="0.4000" stop-color="#ff2f00"/><stop offset="0.4125" stop-color="#ff2400"/><stop offset="0.4250" stop-color="#ff1a00"/><stop offset="0.4375" stop-color="#ff1000"/><stop offset="0.4500" stop-color="#ff0600"/><stop offset="0.4500" stop-color="#f30000"/><stop offset="0.4625" stop-color="#e90000"/><stop offset="0.4750" stop-color="#df0000"/><stop offset="0.4875" stop-color="#e80000"/><stop offset="0.5000" stop-color="#f10000"/><stop offset="0.5000" stop-color="#ff0200"/><stop offset="0.5125" stop-color="#ff0b00"/><stop offset="0.5250" stop-color="#ff1500"/><stop offset="0.5375" stop-color="#ff1e00"/><stop offset="0.5500" stop-color="#ff2700"/><stop offset="0.5500" stop-color="#ff3700"/><stop offset="0.5625" stop-color="#ff4000"/><stop offset="0.5750" stop-color="#ff4a00"/><stop offset="0.5875" stop-color="#ff5300"/><stop offset="0.6000" stop-color="#ff5c00"/><stop offset="0.6000" stop-color="#ff6c00"/><stop offset="0.6125" stop-color="#ff7600"/><stop offset="0.6250" stop-color="#ff7f00"/><stop offset="0.6375" stop-color="#ff8900"/><stop offset="0.6500" stop-color="#ff9200"/><stop offset="0.6500" stop-color="#ffa300"/><stop offset="0.6625" stop-color="#ffac00"/><stop offset="0.6750" stop-color="#ffb600"/><stop offset="0.6875" stop-color="#ffc000"/><stop offset="0.7000" stop-color="#ffca00"/><stop offset="0.7000" stop-color="#ffdb00"/><stop offset="0.7125" stop-color="#ffe600"/><stop offset="0.7250" stop-color="#fff000"/><stop offset="0.7375" stop-color="#fffb00"/><stop offset="0.7500" stop-color="#f9ff06"/><stop offset="0.7500" stop-color="#e6ff19"/><stop offset="0.7625" stop-color="#dbff24"/><stop offset="0.7750" stop-color="#d0ff2f"/><stop offset="0.7875" stop-color="#c4ff3b"/><stop offset="0.8000" stop-color="#b9ff46"/><stop offset="0.8000" stop-color="#a4ff5b"/><stop offset="0.8125" stop-color="#98ff67"/><stop offset="0.8250" stop-color="#8cff73"/><stop offset="0.8375" stop-color="#7fff80"/><stop offset="0.8500" stop-color="#72ff8d"/><stop offset="0.8500" stop-color="#5bffa4"/><stop offset="0.8625" stop-color="#4dffb2"/><stop offset="0.8750" stop-color="#3fffc0"/><stop offset="0.8875" stop-color="#31ffce"/><stop offset="0.9000" stop-color="#22ffdd"/><stop offset="0.9000" stop-color="#08fff7"/><stop offset="0.9125" stop-color="#00f7ff"/><stop offset="0.9250" stop-color="#00e7ff"/><stop offset="0.9375" stop-color="#00d6ff"/><stop offset="0.9500" stop-color="#00c5ff"/><stop offset="0.9500" stop-color="#00a7ff"/><stop offset="0.9625" stop-color="#0095ff"/><stop offset="0.9750" stop-color="#0082ff"/><stop offset="0.9875" stop-color="#006fff"/><stop offset="1.0000" stop-color="#005bff"/></linearGradient><linearGradient id="gF8" gradientUnits="userSpaceOnUse" x1="936.3" y1="0" x2="1643" y2="0"><stop offset="0.0000" stop-color="#0064ff"/><stop offset="0.0125" stop-color="#007bff"/><stop offset="0.0250" stop-color="#0090ff"/><stop offset="0.0375" stop-color="#00a5ff"/><stop offset="0.0500" stop-color="#00b8ff"/><stop offset="0.0500" stop-color="#00d9ff"/><stop offset="0.0625" stop-color="#00ecff"/><stop offset="0.0750" stop-color="#00feff"/><stop offset="0.0875" stop-color="#11ffee"/><stop offset="0.1000" stop-color="#21ffde"/><stop offset="0.1000" stop-color="#3dffc2"/><stop offset="0.1125" stop-color="#4effb1"/><stop offset="0.1250" stop-color="#5dffa2"/><stop offset="0.1375" stop-color="#6cff93"/><stop offset="0.1500" stop-color="#7bff84"/><stop offset="0.1500" stop-color="#93ff6c"/><stop offset="0.1625" stop-color="#a1ff5e"/><stop offset="0.1750" stop-color="#afff50"/><stop offset="0.1875" stop-color="#bcff43"/><stop offset="0.2000" stop-color="#c9ff36"/><stop offset="0.2000" stop-color="#deff21"/><stop offset="0.2125" stop-color="#ebff14"/><stop offset="0.2250" stop-color="#f7ff08"/><stop offset="0.2375" stop-color="#fffb00"/><stop offset="0.2500" stop-color="#ffef00"/><stop offset="0.2500" stop-color="#ffdb00"/><stop offset="0.2625" stop-color="#ffd000"/><stop offset="0.2750" stop-color="#ffc500"/><stop offset="0.2875" stop-color="#ffba00"/><stop offset="0.3000" stop-color="#ffaf00"/><stop offset="0.3000" stop-color="#ff9c00"/><stop offset="0.3125" stop-color="#ff9100"/><stop offset="0.3250" stop-color="#ff8700"/><stop offset="0.3375" stop-color="#ff7c00"/><stop offset="0.3500" stop-color="#ff7200"/><stop offset="0.3500" stop-color="#ff6000"/><stop offset="0.3625" stop-color="#ff5500"/><stop offset="0.3750" stop-color="#ff4b00"/><stop offset="0.3875" stop-color="#ff4100"/><stop offset="0.4000" stop-color="#ff3600"/><stop offset="0.4000" stop-color="#ff2500"/><stop offset="0.4125" stop-color="#ff1a00"/><stop offset="0.4250" stop-color="#ff1000"/><stop offset="0.4375" stop-color="#ff0600"/><stop offset="0.4500" stop-color="#fb0000"/><stop offset="0.4500" stop-color="#e90000"/><stop offset="0.4625" stop-color="#df0000"/><stop offset="0.4750" stop-color="#d50000"/><stop offset="0.4875" stop-color="#de0000"/><stop offset="0.5000" stop-color="#e70000"/><stop offset="0.5000" stop-color="#f70000"/><stop offset="0.5125" stop-color="#ff0100"/><stop offset="0.5250" stop-color="#ff0b00"/><stop offset="0.5375" stop-color="#ff1400"/><stop offset="0.5500" stop-color="#ff1d00"/><stop offset="0.5500" stop-color="#ff2d00"/><stop offset="0.5625" stop-color="#ff3600"/><stop offset="0.5750" stop-color="#ff4000"/><stop offset="0.5875" stop-color="#ff4900"/><stop offset="0.6000" stop-color="#ff5200"/><stop offset="0.6000" stop-color="#ff6300"/><stop offset="0.6125" stop-color="#ff6c00"/><stop offset="0.6250" stop-color="#ff7500"/><stop offset="0.6375" stop-color="#ff7f00"/><stop offset="0.6500" stop-color="#ff8900"/><stop offset="0.6500" stop-color="#ff9900"/><stop offset="0.6625" stop-color="#ffa300"/><stop offset="0.6750" stop-color="#ffad00"/><stop offset="0.6875" stop-color="#ffb700"/><stop offset="0.7000" stop-color="#ffc100"/><stop offset="0.7000" stop-color="#ffd200"/><stop offset="0.7125" stop-color="#ffdc00"/><stop offset="0.7250" stop-color="#ffe700"/><stop offset="0.7375" stop-color="#fff100"/><stop offset="0.7500" stop-color="#fffc00"/><stop offset="0.7500" stop-color="#efff10"/><stop offset="0.7625" stop-color="#e4ff1b"/><stop offset="0.7750" stop-color="#d9ff26"/><stop offset="0.7875" stop-color="#cdff32"/><stop offset="0.8000" stop-color="#c2ff3d"/><stop offset="0.8000" stop-color="#adff52"/><stop offset="0.8125" stop-color="#a1ff5e"/><stop offset="0.8250" stop-color="#95ff6a"/><stop offset="0.8375" stop-color="#88ff77"/><stop offset="0.8500" stop-color="#7bff84"/><stop offset="0.8500" stop-color="#64ff9b"/><stop offset="0.8625" stop-color="#56ffa9"/><stop offset="0.8750" stop-color="#48ffb7"/><stop offset="0.8875" stop-color="#39ffc6"/><stop offset="0.9000" stop-color="#2affd5"/><stop offset="0.9000" stop-color="#10ffef"/><stop offset="0.9125" stop-color="#01fffe"/><stop offset="0.9250" stop-color="#00efff"/><stop offset="0.9375" stop-color="#00dfff"/><stop offset="0.9500" stop-color="#00cdff"/><stop offset="0.9500" stop-color="#00afff"/><stop offset="0.9625" stop-color="#009dff"/><stop offset="0.9750" stop-color="#008aff"/><stop offset="0.9875" stop-color="#0077ff"/><stop offset="1.0000" stop-color="#0063ff"/></linearGradient><linearGradient id="gF9" gradientUnits="userSpaceOnUse" x1="936.3" y1="0" x2="1643" y2="0"><stop offset="0.0000" stop-color="#006cff"/><stop offset="0.0125" stop-color="#0082ff"/><stop offset="0.0250" stop-color="#0098ff"/><stop offset="0.0375" stop-color="#00acff"/><stop offset="0.0500" stop-color="#00c0ff"/><stop offset="0.0500" stop-color="#00e1ff"/><stop offset="0.0625" stop-color="#00f4ff"/><stop offset="0.0750" stop-color="#07fff8"/><stop offset="0.0875" stop-color="#19ffe6"/><stop offset="0.1000" stop-color="#2affd5"/><stop offset="0.1000" stop-color="#46ffb9"/><stop offset="0.1125" stop-color="#56ffa9"/><stop offset="0.1250" stop-color="#66ff99"/><stop offset="0.1375" stop-color="#75ff8a"/><stop offset="0.1500" stop-color="#83ff7c"/><stop offset="0.1500" stop-color="#9cff63"/><stop offset="0.1625" stop-color="#aaff55"/><stop offset="0.1750" stop-color="#b7ff48"/><stop offset="0.1875" stop-color="#c5ff3a"/><stop offset="0.2000" stop-color="#d2ff2d"/><stop offset="0.2000" stop-color="#e7ff18"/><stop offset="0.2125" stop-color="#f4ff0b"/><stop offset="0.2250" stop-color="#fffe00"/><stop offset="0.2375" stop-color="#fff200"/><stop offset="0.2500" stop-color="#ffe600"/><stop offset="0.2500" stop-color="#ffd200"/><stop offset="0.2625" stop-color="#ffc700"/><stop offset="0.2750" stop-color="#ffbb00"/><stop offset="0.2875" stop-color="#ffb000"/><stop offset="0.3000" stop-color="#ffa500"/><stop offset="0.3000" stop-color="#ff9300"/><stop offset="0.3125" stop-color="#ff8800"/><stop offset="0.3250" stop-color="#ff7d00"/><stop offset="0.3375" stop-color="#ff7300"/><stop offset="0.3500" stop-color="#ff6800"/><stop offset="0.3500" stop-color="#ff5600"/><stop offset="0.3625" stop-color="#ff4c00"/><stop offset="0.3750" stop-color="#ff4100"/><stop offset="0.3875" stop-color="#ff3700"/><stop offset="0.4000" stop-color="#ff2c00"/><stop offset="0.4000" stop-color="#ff1b00"/><stop offset="0.4125" stop-color="#ff1000"/><stop offset="0.4250" stop-color="#ff0600"/><stop offset="0.4375" stop-color="#fb0000"/><stop offset="0.4500" stop-color="#f10000"/><stop offset="0.4500" stop-color="#df0000"/><stop offset="0.4625" stop-color="#d50000"/><stop offset="0.4750" stop-color="#cb0000"/><stop offset="0.4875" stop-color="#d40000"/><stop offset="0.5000" stop-color="#dd0000"/><stop offset="0.5000" stop-color="#ed0000"/><stop offset="0.5125" stop-color="#f60000"/><stop offset="0.5250" stop-color="#ff0100"/><stop offset="0.5375" stop-color="#ff0a00"/><stop offset="0.5500" stop-color="#ff1300"/><stop offset="0.5500" stop-color="#ff2300"/><stop offset="0.5625" stop-color="#ff2d00"/><stop offset="0.5750" stop-color="#ff3600"/><stop offset="0.5875" stop-color="#ff3f00"/><stop offset="0.6000" stop-color="#ff4900"/><stop offset="0.6000" stop-color="#ff5900"/><stop offset="0.6125" stop-color="#ff6200"/><stop offset="0.6250" stop-color="#ff6c00"/><stop offset="0.6375" stop-color="#ff7500"/><stop offset="0.6500" stop-color="#ff7f00"/><stop offset="0.6500" stop-color="#ff9000"/><stop offset="0.6625" stop-color="#ff9900"/><stop offset="0.6750" stop-color="#ffa300"/><stop offset="0.6875" stop-color="#ffad00"/><stop offset="0.7000" stop-color="#ffb700"/><stop offset="0.7000" stop-color="#ffc900"/><stop offset="0.7125" stop-color="#ffd300"/><stop offset="0.7250" stop-color="#ffde00"/><stop offset="0.7375" stop-color="#ffe800"/><stop offset="0.7500" stop-color="#fff300"/><stop offset="0.7500" stop-color="#f8ff07"/><stop offset="0.7625" stop-color="#edff12"/><stop offset="0.7750" stop-color="#e2ff1d"/><stop offset="0.7875" stop-color="#d6ff29"/><stop offset="0.8000" stop-color="#cbff34"/><stop offset="0.8000" stop-color="#b6ff49"/><stop offset="0.8125" stop-color="#aaff55"/><stop offset="0.8250" stop-color="#9dff62"/><stop offset="0.8375" stop-color="#90ff6f"/><stop offset="0.8500" stop-color="#83ff7c"/><stop offset="0.8500" stop-color="#6cff93"/><stop offset="0.8625" stop-color="#5effa1"/><stop offset="0.8750" stop-color="#50ffaf"/><stop offset="0.8875" stop-color="#42ffbd"/><stop offset="0.9000" stop-color="#33ffcc"/><stop offset="0.9000" stop-color="#18ffe7"/><stop offset="0.9125" stop-color="#09fff6"/><stop offset="0.9250" stop-color="#00f8ff"/><stop offset="0.9375" stop-color="#00e7ff"/><stop offset="0.9500" stop-color="#00d5ff"/><stop offset="0.9500" stop-color="#00b7ff"/><stop offset="0.9625" stop-color="#00a5ff"/><stop offset="0.9750" stop-color="#0092ff"/><stop offset="0.9875" stop-color="#007eff"/><stop offset="1.0000" stop-color="#006aff"/></linearGradient><linearGradient id="gF10" gradientUnits="userSpaceOnUse" x1="936.3" y1="0" x2="1643" y2="0"><stop offset="0.0000" stop-color="#0073ff"/><stop offset="0.0125" stop-color="#008aff"/><stop offset="0.0250" stop-color="#009fff"/><stop offset="0.0375" stop-color="#00b4ff"/><stop offset="0.0500" stop-color="#00c8ff"/><stop offset="0.0500" stop-color="#00e9ff"/><stop offset="0.0625" stop-color="#00fcff"/><stop offset="0.0750" stop-color="#0ffff0"/><stop offset="0.0875" stop-color="#21ffde"/><stop offset="0.1000" stop-color="#32ffcd"/><stop offset="0.1000" stop-color="#4effb1"/><stop offset="0.1125" stop-color="#5effa1"/><stop offset="0.1250" stop-color="#6eff91"/><stop offset="0.1375" stop-color="#7dff82"/><stop offset="0.1500" stop-color="#8cff73"/><stop offset="0.1500" stop-color="#a4ff5b"/><stop offset="0.1625" stop-color="#b2ff4d"/><stop offset="0.1750" stop-color="#c0ff3f"/><stop offset="0.1875" stop-color="#cdff32"/><stop offset="0.2000" stop-color="#daff25"/><stop offset="0.2000" stop-color="#f0ff0f"/><stop offset="0.2125" stop-color="#fdff02"/><stop offset="0.2250" stop-color="#fff500"/><stop offset="0.2375" stop-color="#ffe900"/><stop offset="0.2500" stop-color="#ffdd00"/><stop offset="0.2500" stop-color="#ffc900"/><stop offset="0.2625" stop-color="#ffbd00"/><stop offset="0.2750" stop-color="#ffb200"/><stop offset="0.2875" stop-color="#ffa700"/><stop offset="0.3000" stop-color="#ff9c00"/><stop offset="0.3000" stop-color="#ff8900"/><stop offset="0.3125" stop-color="#ff7e00"/><stop offset="0.3250" stop-color="#ff7400"/><stop offset="0.3375" stop-color="#ff6900"/><stop offset="0.3500" stop-color="#ff5e00"/><stop offset="0.3500" stop-color="#ff4c00"/><stop offset="0.3625" stop-color="#ff4200"/><stop offset="0.3750" stop-color="#ff3700"/><stop offset="0.3875" stop-color="#ff2d00"/><stop offset="0.4000" stop-color="#ff2300"/><stop offset="0.4000" stop-color="#ff1100"/><stop offset="0.4125" stop-color="#ff0600"/><stop offset="0.4250" stop-color="#fb0000"/><stop offset="0.4375" stop-color="#f10000"/><stop offset="0.4500" stop-color="#e60000"/><stop offset="0.4500" stop-color="#d50000"/><stop offset="0.4625" stop-color="#cb0000"/><stop offset="0.4750" stop-color="#c00000"/><stop offset="0.4875" stop-color="#ca0000"/><stop offset="0.5000" stop-color="#d30000"/><stop offset="0.5000" stop-color="#e30000"/><stop offset="0.5125" stop-color="#ec0000"/><stop offset="0.5250" stop-color="#f50000"/><stop offset="0.5375" stop-color="#ff0000"/><stop offset="0.5500" stop-color="#ff0900"/><stop offset="0.5500" stop-color="#ff1900"/><stop offset="0.5625" stop-color="#ff2300"/><stop offset="0.5750" stop-color="#ff2c00"/><stop offset="0.5875" stop-color="#ff3500"/><stop offset="0.6000" stop-color="#ff3f00"/><stop offset="0.6000" stop-color="#ff4f00"/><stop offset="0.6125" stop-color="#ff5900"/><stop offset="0.6250" stop-color="#ff6200"/><stop offset="0.6375" stop-color="#ff6c00"/><stop offset="0.6500" stop-color="#ff7500"/><stop offset="0.6500" stop-color="#ff8600"/><stop offset="0.6625" stop-color="#ff9000"/><stop offset="0.6750" stop-color="#ff9a00"/><stop offset="0.6875" stop-color="#ffa400"/><stop offset="0.7000" stop-color="#ffae00"/><stop offset="0.7000" stop-color="#ffc000"/><stop offset="0.7125" stop-color="#ffca00"/><stop offset="0.7250" stop-color="#ffd400"/><stop offset="0.7375" stop-color="#ffdf00"/><stop offset="0.7500" stop-color="#ffea00"/><stop offset="0.7500" stop-color="#fffd00"/><stop offset="0.7625" stop-color="#f6ff09"/><stop offset="0.7750" stop-color="#ebff14"/><stop offset="0.7875" stop-color="#dfff20"/><stop offset="0.8000" stop-color="#d3ff2c"/><stop offset="0.8000" stop-color="#bfff40"/><stop offset="0.8125" stop-color="#b2ff4d"/><stop offset="0.8250" stop-color="#a6ff59"/><stop offset="0.8375" stop-color="#99ff66"/><stop offset="0.8500" stop-color="#8cff73"/><stop offset="0.8500" stop-color="#75ff8a"/><stop offset="0.8625" stop-color="#67ff98"/><stop offset="0.8750" stop-color="#59ffa6"/><stop offset="0.8875" stop-color="#4affb5"/><stop offset="0.9000" stop-color="#3bffc4"/><stop offset="0.9000" stop-color="#20ffdf"/><stop offset="0.9125" stop-color="#11ffee"/><stop offset="0.9250" stop-color="#00ffff"/><stop offset="0.9375" stop-color="#00efff"/><stop offset="0.9500" stop-color="#00ddff"/><stop offset="0.9500" stop-color="#00beff"/><stop offset="0.9625" stop-color="#00acff"/><stop offset="0.9750" stop-color="#0099ff"/><stop offset="0.9875" stop-color="#0086ff"/><stop offset="1.0000" stop-color="#0071ff"/></linearGradient><linearGradient id="gF11" gradientUnits="userSpaceOnUse" x1="936.3" y1="0" x2="1643" y2="0"><stop offset="0.0000" stop-color="#007aff"/><stop offset="0.0125" stop-color="#0091ff"/><stop offset="0.0250" stop-color="#00a6ff"/><stop offset="0.0375" stop-color="#00bbff"/><stop offset="0.0500" stop-color="#00cfff"/><stop offset="0.0500" stop-color="#00f1ff"/><stop offset="0.0625" stop-color="#05fffa"/><stop offset="0.0750" stop-color="#17ffe8"/><stop offset="0.0875" stop-color="#29ffd6"/><stop offset="0.1000" stop-color="#3affc5"/><stop offset="0.1000" stop-color="#56ffa9"/><stop offset="0.1125" stop-color="#66ff99"/><stop offset="0.1250" stop-color="#76ff89"/><stop offset="0.1375" stop-color="#85ff7a"/><stop offset="0.1500" stop-color="#94ff6b"/><stop offset="0.1500" stop-color="#adff52"/><stop offset="0.1625" stop-color="#bbff44"/><stop offset="0.1750" stop-color="#c9ff36"/><stop offset="0.1875" stop-color="#d6ff29"/><stop offset="0.2000" stop-color="#e3ff1c"/><stop offset="0.2000" stop-color="#f9ff06"/><stop offset="0.2125" stop-color="#fff800"/><stop offset="0.2250" stop-color="#ffec00"/><stop offset="0.2375" stop-color="#ffe000"/><stop offset="0.2500" stop-color="#ffd400"/><stop offset="0.2500" stop-color="#ffc000"/><stop offset="0.2625" stop-color="#ffb400"/><stop offset="0.2750" stop-color="#ffa900"/><stop offset="0.2875" stop-color="#ff9e00"/><stop offset="0.3000" stop-color="#ff9300"/><stop offset="0.3000" stop-color="#ff8000"/><stop offset="0.3125" stop-color="#ff7500"/><stop offset="0.3250" stop-color="#ff6a00"/><stop offset="0.3375" stop-color="#ff5f00"/><stop offset="0.3500" stop-color="#ff5500"/><stop offset="0.3500" stop-color="#ff4200"/><stop offset="0.3625" stop-color="#ff3800"/><stop offset="0.3750" stop-color="#ff2d00"/><stop offset="0.3875" stop-color="#ff2300"/><stop offset="0.4000" stop-color="#ff1900"/><stop offset="0.4000" stop-color="#ff0700"/><stop offset="0.4125" stop-color="#fb0000"/><stop offset="0.4250" stop-color="#f10000"/><stop offset="0.4375" stop-color="#e70000"/><stop offset="0.4500" stop-color="#dc0000"/><stop offset="0.4500" stop-color="#ca0000"/><stop offset="0.4625" stop-color="#c00000"/><stop offset="0.4750" stop-color="#b60000"/><stop offset="0.4875" stop-color="#bf0000"/><stop offset="0.5000" stop-color="#c80000"/><stop offset="0.5000" stop-color="#d90000"/><stop offset="0.5125" stop-color="#e20000"/><stop offset="0.5250" stop-color="#eb0000"/><stop offset="0.5375" stop-color="#f50000"/><stop offset="0.5500" stop-color="#fe0000"/><stop offset="0.5500" stop-color="#ff0f00"/><stop offset="0.5625" stop-color="#ff1900"/><stop offset="0.5750" stop-color="#ff2200"/><stop offset="0.5875" stop-color="#ff2b00"/><stop offset="0.6000" stop-color="#ff3500"/><stop offset="0.6000" stop-color="#ff4500"/><stop offset="0.6125" stop-color="#ff4f00"/><stop offset="0.6250" stop-color="#ff5800"/><stop offset="0.6375" stop-color="#ff6200"/><stop offset="0.6500" stop-color="#ff6c00"/><stop offset="0.6500" stop-color="#ff7d00"/><stop offset="0.6625" stop-color="#ff8700"/><stop offset="0.6750" stop-color="#ff9000"/><stop offset="0.6875" stop-color="#ff9b00"/><stop offset="0.7000" stop-color="#ffa500"/><stop offset="0.7000" stop-color="#ffb600"/><stop offset="0.7125" stop-color="#ffc100"/><stop offset="0.7250" stop-color="#ffcb00"/><stop offset="0.7375" stop-color="#ffd600"/><stop offset="0.7500" stop-color="#ffe100"/><stop offset="0.7500" stop-color="#fff400"/><stop offset="0.7625" stop-color="#ffff00"/><stop offset="0.7750" stop-color="#f4ff0b"/><stop offset="0.7875" stop-color="#e8ff17"/><stop offset="0.8000" stop-color="#dcff23"/><stop offset="0.8000" stop-color="#c7ff38"/><stop offset="0.8125" stop-color="#bbff44"/><stop offset="0.8250" stop-color="#aeff51"/><stop offset="0.8375" stop-color="#a1ff5e"/><stop offset="0.8500" stop-color="#94ff6b"/><stop offset="0.8500" stop-color="#7dff82"/><stop offset="0.8625" stop-color="#6fff90"/><stop offset="0.8750" stop-color="#61ff9e"/><stop offset="0.8875" stop-color="#52ffad"/><stop offset="0.9000" stop-color="#43ffbc"/><stop offset="0.9000" stop-color="#28ffd7"/><stop offset="0.9125" stop-color="#18ffe7"/><stop offset="0.9250" stop-color="#08fff7"/><stop offset="0.9375" stop-color="#00f6ff"/><stop offset="0.9500" stop-color="#00e5ff"/><stop offset="0.9500" stop-color="#00c6ff"/><stop offset="0.9625" stop-color="#00b4ff"/><stop offset="0.9750" stop-color="#00a1ff"/><stop offset="0.9875" stop-color="#008dff"/><stop offset="1.0000" stop-color="#0078ff"/></linearGradient><linearGradient id="gF12" gradientUnits="userSpaceOnUse" x1="936.3" y1="0" x2="1643" y2="0"><stop offset="0.0000" stop-color="#0081ff"/><stop offset="0.0125" stop-color="#0098ff"/><stop offset="0.0250" stop-color="#00adff"/><stop offset="0.0375" stop-color="#00c2ff"/><stop offset="0.0500" stop-color="#00d6ff"/><stop offset="0.0500" stop-color="#00f8ff"/><stop offset="0.0625" stop-color="#0cfff3"/><stop offset="0.0750" stop-color="#1fffe0"/><stop offset="0.0875" stop-color="#30ffcf"/><stop offset="0.1000" stop-color="#41ffbe"/><stop offset="0.1000" stop-color="#5effa1"/><stop offset="0.1125" stop-color="#6eff91"/><stop offset="0.1250" stop-color="#7eff81"/><stop offset="0.1375" stop-color="#8dff72"/><stop offset="0.1500" stop-color="#9cff63"/><stop offset="0.1500" stop-color="#b5ff4a"/><stop offset="0.1625" stop-color="#c3ff3c"/><stop offset="0.1750" stop-color="#d1ff2e"/><stop offset="0.1875" stop-color="#dfff20"/><stop offset="0.2000" stop-color="#ecff13"/><stop offset="0.2000" stop-color="#fffc00"/><stop offset="0.2125" stop-color="#ffef00"/><stop offset="0.2250" stop-color="#ffe300"/><stop offset="0.2375" stop-color="#ffd700"/><stop offset="0.2500" stop-color="#ffcb00"/><stop offset="0.2500" stop-color="#ffb700"/><stop offset="0.2625" stop-color="#ffab00"/><stop offset="0.2750" stop-color="#ffa000"/><stop offset="0.2875" stop-color="#ff9400"/><stop offset="0.3000" stop-color="#ff8900"/><stop offset="0.3000" stop-color="#ff7600"/><stop offset="0.3125" stop-color="#ff6b00"/><stop offset="0.3250" stop-color="#ff6000"/><stop offset="0.3375" stop-color="#ff5600"/><stop offset="0.3500" stop-color="#ff4b00"/><stop offset="0.3500" stop-color="#ff3900"/><stop offset="0.3625" stop-color="#ff2e00"/><stop offset="0.3750" stop-color="#ff2300"/><stop offset="0.3875" stop-color="#ff1900"/><stop offset="0.4000" stop-color="#ff0f00"/><stop offset="0.4000" stop-color="#fc0000"/><stop offset="0.4125" stop-color="#f10000"/><stop offset="0.4250" stop-color="#e70000"/><stop offset="0.4375" stop-color="#dc0000"/><stop offset="0.4500" stop-color="#d20000"/><stop offset="0.4500" stop-color="#c00000"/><stop offset="0.4625" stop-color="#b60000"/><stop offset="0.4750" stop-color="#ab0000"/><stop offset="0.4875" stop-color="#b50000"/><stop offset="0.5000" stop-color="#be0000"/><stop offset="0.5000" stop-color="#ce0000"/><stop offset="0.5125" stop-color="#d80000"/><stop offset="0.5250" stop-color="#e10000"/><stop offset="0.5375" stop-color="#ea0000"/><stop offset="0.5500" stop-color="#f40000"/><stop offset="0.5500" stop-color="#ff0500"/><stop offset="0.5625" stop-color="#ff0f00"/><stop offset="0.5750" stop-color="#ff1800"/><stop offset="0.5875" stop-color="#ff2200"/><stop offset="0.6000" stop-color="#ff2b00"/><stop offset="0.6000" stop-color="#ff3c00"/><stop offset="0.6125" stop-color="#ff4500"/><stop offset="0.6250" stop-color="#ff4f00"/><stop offset="0.6375" stop-color="#ff5900"/><stop offset="0.6500" stop-color="#ff6200"/><stop offset="0.6500" stop-color="#ff7300"/><stop offset="0.6625" stop-color="#ff7d00"/><stop offset="0.6750" stop-color="#ff8700"/><stop offset="0.6875" stop-color="#ff9100"/><stop offset="0.7000" stop-color="#ff9b00"/><stop offset="0.7000" stop-color="#ffad00"/><stop offset="0.7125" stop-color="#ffb800"/><stop offset="0.7250" stop-color="#ffc200"/><stop offset="0.7375" stop-color="#ffcd00"/><stop offset="0.7500" stop-color="#ffd800"/><stop offset="0.7500" stop-color="#ffeb00"/><stop offset="0.7625" stop-color="#fff600"/><stop offset="0.7750" stop-color="#fcff03"/><stop offset="0.7875" stop-color="#f1ff0e"/><stop offset="0.8000" stop-color="#e5ff1a"/><stop offset="0.8000" stop-color="#d0ff2f"/><stop offset="0.8125" stop-color="#c3ff3c"/><stop offset="0.8250" stop-color="#b7ff48"/><stop offset="0.8375" stop-color="#aaff55"/><stop offset="0.8500" stop-color="#9cff63"/><stop offset="0.8500" stop-color="#85ff7a"/><stop offset="0.8625" stop-color="#77ff88"/><stop offset="0.8750" stop-color="#69ff96"/><stop offset="0.8875" stop-color="#5affa5"/><stop offset="0.9000" stop-color="#4bffb4"/><stop offset="0.9000" stop-color="#30ffcf"/><stop offset="0.9125" stop-color="#20ffdf"/><stop offset="0.9250" stop-color="#10ffef"/><stop offset="0.9375" stop-color="#00feff"/><stop offset="0.9500" stop-color="#00ecff"/><stop offset="0.9500" stop-color="#00cdff"/><stop offset="0.9625" stop-color="#00bbff"/><stop offset="0.9750" stop-color="#00a8ff"/><stop offset="0.9875" stop-color="#0094ff"/><stop offset="1.0000" stop-color="#007fff"/></linearGradient><linearGradient id="gF13" gradientUnits="userSpaceOnUse" x1="936.3" y1="0" x2="1643" y2="0"><stop offset="0.0000" stop-color="#0087ff"/><stop offset="0.0125" stop-color="#009eff"/><stop offset="0.0250" stop-color="#00b4ff"/><stop offset="0.0375" stop-color="#00c9ff"/><stop offset="0.0500" stop-color="#00ddff"/><stop offset="0.0500" stop-color="#00ffff"/><stop offset="0.0625" stop-color="#13ffec"/><stop offset="0.0750" stop-color="#26ffd9"/><stop offset="0.0875" stop-color="#38ffc7"/><stop offset="0.1000" stop-color="#49ffb6"/><stop offset="0.1000" stop-color="#66ff99"/><stop offset="0.1125" stop-color="#76ff89"/><stop offset="0.1250" stop-color="#86ff79"/><stop offset="0.1375" stop-color="#96ff69"/><stop offset="0.1500" stop-color="#a4ff5b"/><stop offset="0.1500" stop-color="#bdff42"/><stop offset="0.1625" stop-color="#ccff33"/><stop offset="0.1750" stop-color="#daff25"/><stop offset="0.1875" stop-color="#e7ff18"/><stop offset="0.2000" stop-color="#f4ff0b"/><stop offset="0.2000" stop-color="#fff300"/><stop offset="0.2125" stop-color="#ffe700"/><stop offset="0.2250" stop-color="#ffda00"/><stop offset="0.2375" stop-color="#ffce00"/><stop offset="0.2500" stop-color="#ffc200"/><stop offset="0.2500" stop-color="#ffae00"/><stop offset="0.2625" stop-color="#ffa200"/><stop offset="0.2750" stop-color="#ff9600"/><stop offset="0.2875" stop-color="#ff8b00"/><stop offset="0.3000" stop-color="#ff8000"/><stop offset="0.3000" stop-color="#ff6d00"/><stop offset="0.3125" stop-color="#ff6200"/><stop offset="0.3250" stop-color="#ff5700"/><stop offset="0.3375" stop-color="#ff4c00"/><stop offset="0.3500" stop-color="#ff4100"/><stop offset="0.3500" stop-color="#ff2f00"/><stop offset="0.3625" stop-color="#ff2400"/><stop offset="0.3750" stop-color="#ff1a00"/><stop offset="0.3875" stop-color="#ff0f00"/><stop offset="0.4000" stop-color="#ff0400"/><stop offset="0.4000" stop-color="#f10000"/><stop offset="0.4125" stop-color="#e70000"/><stop offset="0.4250" stop-color="#dc0000"/><stop offset="0.4375" stop-color="#d20000"/><stop offset="0.4500" stop-color="#c70000"/><stop offset="0.4500" stop-color="#b50000"/><stop offset="0.4625" stop-color="#ab0000"/><stop offset="0.4750" stop-color="#a10000"/><stop offset="0.4875" stop-color="#aa0000"/><stop offset="0.5000" stop-color="#b30000"/><stop offset="0.5000" stop-color="#c40000"/><stop offset="0.5125" stop-color="#cd0000"/><stop offset="0.5250" stop-color="#d70000"/><stop offset="0.5375" stop-color="#e00000"/><stop offset="0.5500" stop-color="#ea0000"/><stop offset="0.5500" stop-color="#fa0000"/><stop offset="0.5625" stop-color="#ff0400"/><stop offset="0.5750" stop-color="#ff0e00"/><stop offset="0.5875" stop-color="#ff1800"/><stop offset="0.6000" stop-color="#ff2100"/><stop offset="0.6000" stop-color="#ff3200"/><stop offset="0.6125" stop-color="#ff3b00"/><stop offset="0.6250" stop-color="#ff4500"/><stop offset="0.6375" stop-color="#ff4f00"/><stop offset="0.6500" stop-color="#ff5900"/><stop offset="0.6500" stop-color="#ff6a00"/><stop offset="0.6625" stop-color="#ff7400"/><stop offset="0.6750" stop-color="#ff7e00"/><stop offset="0.6875" stop-color="#ff8800"/><stop offset="0.7000" stop-color="#ff9200"/><stop offset="0.7000" stop-color="#ffa400"/><stop offset="0.7125" stop-color="#ffae00"/><stop offset="0.7250" stop-color="#ffb900"/><stop offset="0.7375" stop-color="#ffc400"/><stop offset="0.7500" stop-color="#ffcf00"/><stop offset="0.7500" stop-color="#ffe200"/><stop offset="0.7625" stop-color="#ffed00"/><stop offset="0.7750" stop-color="#fff900"/><stop offset="0.7875" stop-color="#f9ff06"/><stop offset="0.8000" stop-color="#edff12"/><stop offset="0.8000" stop-color="#d8ff27"/><stop offset="0.8125" stop-color="#ccff33"/><stop offset="0.8250" stop-color="#bfff40"/><stop offset="0.8375" stop-color="#b2ff4d"/><stop offset="0.8500" stop-color="#a4ff5b"/><stop offset="0.8500" stop-color="#8dff72"/><stop offset="0.8625" stop-color="#7fff80"/><stop offset="0.8750" stop-color="#71ff8e"/><stop offset="0.8875" stop-color="#62ff9d"/><stop offset="0.9000" stop-color="#52ffad"/><stop offset="0.9000" stop-color="#37ffc8"/><stop offset="0.9125" stop-color="#27ffd8"/><stop offset="0.9250" stop-color="#17ffe8"/><stop offset="0.9375" stop-color="#06fff9"/><stop offset="0.9500" stop-color="#00f3ff"/><stop offset="0.9500" stop-color="#00d4ff"/><stop offset="0.9625" stop-color="#00c2ff"/><stop offset="0.9750" stop-color="#00aeff"/><stop offset="0.9875" stop-color="#009aff"/><stop offset="1.0000" stop-color="#0086ff"/></linearGradient><linearGradient id="gF14" gradientUnits="userSpaceOnUse" x1="936.3" y1="0" x2="1643" y2="0"><stop offset="0.0000" stop-color="#008eff"/><stop offset="0.0125" stop-color="#00a5ff"/><stop offset="0.0250" stop-color="#00bbff"/><stop offset="0.0375" stop-color="#00d0ff"/><stop offset="0.0500" stop-color="#00e4ff"/><stop offset="0.0500" stop-color="#07fff8"/><stop offset="0.0625" stop-color="#1bffe4"/><stop offset="0.0750" stop-color="#2dffd2"/><stop offset="0.0875" stop-color="#3fffc0"/><stop offset="0.1000" stop-color="#50ffaf"/><stop offset="0.1000" stop-color="#6dff92"/><stop offset="0.1125" stop-color="#7eff81"/><stop offset="0.1250" stop-color="#8eff71"/><stop offset="0.1375" stop-color="#9eff61"/><stop offset="0.1500" stop-color="#acff53"/><stop offset="0.1500" stop-color="#c6ff39"/><stop offset="0.1625" stop-color="#d4ff2b"/><stop offset="0.1750" stop-color="#e2ff1d"/><stop offset="0.1875" stop-color="#f0ff0f"/><stop offset="0.2000" stop-color="#fdff02"/><stop offset="0.2000" stop-color="#ffeb00"/><stop offset="0.2125" stop-color="#ffde00"/><stop offset="0.2250" stop-color="#ffd100"/><stop offset="0.2375" stop-color="#ffc500"/><stop offset="0.2500" stop-color="#ffb900"/><stop offset="0.2500" stop-color="#ffa400"/><stop offset="0.2625" stop-color="#ff9900"/><stop offset="0.2750" stop-color="#ff8d00"/><stop offset="0.2875" stop-color="#ff8200"/><stop offset="0.3000" stop-color="#ff7600"/><stop offset="0.3000" stop-color="#ff6300"/><stop offset="0.3125" stop-color="#ff5800"/><stop offset="0.3250" stop-color="#ff4d00"/><stop offset="0.3375" stop-color="#ff4200"/><stop offset="0.3500" stop-color="#ff3700"/><stop offset="0.3500" stop-color="#ff2500"/><stop offset="0.3625" stop-color="#ff1a00"/><stop offset="0.3750" stop-color="#ff1000"/><stop offset="0.3875" stop-color="#ff0500"/><stop offset="0.4000" stop-color="#f90000"/><stop offset="0.4000" stop-color="#e70000"/><stop offset="0.4125" stop-color="#dd0000"/><stop offset="0.4250" stop-color="#d20000"/><stop offset="0.4375" stop-color="#c70000"/><stop offset="0.4500" stop-color="#bd0000"/><stop offset="0.4500" stop-color="#ab0000"/><stop offset="0.4625" stop-color="#a00000"/><stop offset="0.4750" stop-color="#960000"/><stop offset="0.4875" stop-color="#9f0000"/><stop offset="0.5000" stop-color="#a90000"/><stop offset="0.5000" stop-color="#b90000"/><stop offset="0.5125" stop-color="#c30000"/><stop offset="0.5250" stop-color="#cc0000"/><stop offset="0.5375" stop-color="#d60000"/><stop offset="0.5500" stop-color="#df0000"/><stop offset="0.5500" stop-color="#f00000"/><stop offset="0.5625" stop-color="#f90000"/><stop offset="0.5750" stop-color="#ff0400"/><stop offset="0.5875" stop-color="#ff0e00"/><stop offset="0.6000" stop-color="#ff1700"/><stop offset="0.6000" stop-color="#ff2800"/><stop offset="0.6125" stop-color="#ff3200"/><stop offset="0.6250" stop-color="#ff3b00"/><stop offset="0.6375" stop-color="#ff4500"/><stop offset="0.6500" stop-color="#ff4f00"/><stop offset="0.6500" stop-color="#ff6000"/><stop offset="0.6625" stop-color="#ff6a00"/><stop offset="0.6750" stop-color="#ff7400"/><stop offset="0.6875" stop-color="#ff7f00"/><stop offset="0.7000" stop-color="#ff8900"/><stop offset="0.7000" stop-color="#ff9b00"/><stop offset="0.7125" stop-color="#ffa500"/><stop offset="0.7250" stop-color="#ffb000"/><stop offset="0.7375" stop-color="#ffbb00"/><stop offset="0.7500" stop-color="#ffc600"/><stop offset="0.7500" stop-color="#ffd900"/><stop offset="0.7625" stop-color="#ffe500"/><stop offset="0.7750" stop-color="#fff000"/><stop offset="0.7875" stop-color="#fffc00"/><stop offset="0.8000" stop-color="#f6ff09"/><stop offset="0.8000" stop-color="#e1ff1e"/><stop offset="0.8125" stop-color="#d4ff2b"/><stop offset="0.8250" stop-color="#c7ff38"/><stop offset="0.8375" stop-color="#baff45"/><stop offset="0.8500" stop-color="#adff52"/><stop offset="0.8500" stop-color="#95ff6a"/><stop offset="0.8625" stop-color="#87ff78"/><stop offset="0.8750" stop-color="#78ff87"/><stop offset="0.8875" stop-color="#69ff96"/><stop offset="0.9000" stop-color="#5affa5"/><stop offset="0.9000" stop-color="#3fffc0"/><stop offset="0.9125" stop-color="#2fffd0"/><stop offset="0.9250" stop-color="#1effe1"/><stop offset="0.9375" stop-color="#0dfff2"/><stop offset="0.9500" stop-color="#00faff"/><stop offset="0.9500" stop-color="#00dbff"/><stop offset="0.9625" stop-color="#00c8ff"/><stop offset="0.9750" stop-color="#00b5ff"/><stop offset="0.9875" stop-color="#00a1ff"/><stop offset="1.0000" stop-color="#008cff"/></linearGradient><linearGradient id="gF15" gradientUnits="userSpaceOnUse" x1="936.3" y1="0" x2="1643" y2="0"><stop offset="0.0000" stop-color="#0094ff"/><stop offset="0.0125" stop-color="#00abff"/><stop offset="0.0250" stop-color="#00c1ff"/><stop offset="0.0375" stop-color="#00d7ff"/><stop offset="0.0500" stop-color="#00ebff"/><stop offset="0.0500" stop-color="#0efff1"/><stop offset="0.0625" stop-color="#22ffdd"/><stop offset="0.0750" stop-color="#35ffca"/><stop offset="0.0875" stop-color="#47ffb8"/><stop offset="0.1000" stop-color="#58ffa7"/><stop offset="0.1000" stop-color="#75ff8a"/><stop offset="0.1125" stop-color="#86ff79"/><stop offset="0.1250" stop-color="#96ff69"/><stop offset="0.1375" stop-color="#a5ff5a"/><stop offset="0.1500" stop-color="#b4ff4b"/><stop offset="0.1500" stop-color="#ceff31"/><stop offset="0.1625" stop-color="#dcff23"/><stop offset="0.1750" stop-color="#eaff15"/><stop offset="0.1875" stop-color="#f8ff07"/><stop offset="0.2000" stop-color="#fff900"/><stop offset="0.2000" stop-color="#ffe200"/><stop offset="0.2125" stop-color="#ffd500"/><stop offset="0.2250" stop-color="#ffc800"/><stop offset="0.2375" stop-color="#ffbc00"/><stop offset="0.2500" stop-color="#ffb000"/><stop offset="0.2500" stop-color="#ff9b00"/><stop offset="0.2625" stop-color="#ff8f00"/><stop offset="0.2750" stop-color="#ff8400"/><stop offset="0.2875" stop-color="#ff7800"/><stop offset="0.3000" stop-color="#ff6d00"/><stop offset="0.3000" stop-color="#ff5a00"/><stop offset="0.3125" stop-color="#ff4f00"/><stop offset="0.3250" stop-color="#ff4300"/><stop offset="0.3375" stop-color="#ff3800"/><stop offset="0.3500" stop-color="#ff2e00"/><stop offset="0.3500" stop-color="#ff1b00"/><stop offset="0.3625" stop-color="#ff1000"/><stop offset="0.3750" stop-color="#ff0500"/><stop offset="0.3875" stop-color="#fa0000"/><stop offset="0.4000" stop-color="#ef0000"/><stop offset="0.4000" stop-color="#dd0000"/><stop offset="0.4125" stop-color="#d20000"/><stop offset="0.4250" stop-color="#c80000"/><stop offset="0.4375" stop-color="#bd0000"/><stop offset="0.4500" stop-color="#b20000"/><stop offset="0.4500" stop-color="#a00000"/><stop offset="0.4625" stop-color="#960000"/><stop offset="0.4750" stop-color="#8b0000"/><stop offset="0.4875" stop-color="#950000"/><stop offset="0.5000" stop-color="#9e0000"/><stop offset="0.5000" stop-color="#af0000"/><stop offset="0.5125" stop-color="#b80000"/><stop offset="0.5250" stop-color="#c20000"/><stop offset="0.5375" stop-color="#cb0000"/><stop offset="0.5500" stop-color="#d50000"/><stop offset="0.5500" stop-color="#e60000"/><stop offset="0.5625" stop-color="#ef0000"/><stop offset="0.5750" stop-color="#f90000"/><stop offset="0.5875" stop-color="#ff0400"/><stop offset="0.6000" stop-color="#ff0d00"/><stop offset="0.6000" stop-color="#ff1e00"/><stop offset="0.6125" stop-color="#ff2800"/><stop offset="0.6250" stop-color="#ff3200"/><stop offset="0.6375" stop-color="#ff3b00"/><stop offset="0.6500" stop-color="#ff4500"/><stop offset="0.6500" stop-color="#ff5700"/><stop offset="0.6625" stop-color="#ff6100"/><stop offset="0.6750" stop-color="#ff6b00"/><stop offset="0.6875" stop-color="#ff7500"/><stop offset="0.7000" stop-color="#ff8000"/><stop offset="0.7000" stop-color="#ff9200"/><stop offset="0.7125" stop-color="#ff9c00"/><stop offset="0.7250" stop-color="#ffa700"/><stop offset="0.7375" stop-color="#ffb200"/><stop offset="0.7500" stop-color="#ffbd00"/><stop offset="0.7500" stop-color="#ffd100"/><stop offset="0.7625" stop-color="#ffdc00"/><stop offset="0.7750" stop-color="#ffe800"/><stop offset="0.7875" stop-color="#fff400"/><stop offset="0.8000" stop-color="#feff01"/><stop offset="0.8000" stop-color="#e9ff16"/><stop offset="0.8125" stop-color="#dcff23"/><stop offset="0.8250" stop-color="#d0ff2f"/><stop offset="0.8375" stop-color="#c2ff3d"/><stop offset="0.8500" stop-color="#b5ff4a"/><stop offset="0.8500" stop-color="#9dff62"/><stop offset="0.8625" stop-color="#8fff70"/><stop offset="0.8750" stop-color="#80ff7f"/><stop offset="0.8875" stop-color="#71ff8e"/><stop offset="0.9000" stop-color="#61ff9e"/><stop offset="0.9000" stop-color="#46ffb9"/><stop offset="0.9125" stop-color="#36ffc9"/><stop offset="0.9250" stop-color="#25ffda"/><stop offset="0.9375" stop-color="#14ffeb"/><stop offset="0.9500" stop-color="#02fffd"/><stop offset="0.9500" stop-color="#00e2ff"/><stop offset="0.9625" stop-color="#00cfff"/><stop offset="0.9750" stop-color="#00bbff"/><stop offset="0.9875" stop-color="#00a7ff"/><stop offset="1.0000" stop-color="#0092ff"/></linearGradient><linearGradient id="gF16" gradientUnits="userSpaceOnUse" x1="936.3" y1="0" x2="1643" y2="0"><stop offset="0.0000" stop-color="#009aff"/><stop offset="0.0125" stop-color="#00b1ff"/><stop offset="0.0250" stop-color="#00c7ff"/><stop offset="0.0375" stop-color="#00dcff"/><stop offset="0.0500" stop-color="#00f0ff"/><stop offset="0.0500" stop-color="#13ffec"/><stop offset="0.0625" stop-color="#26ffd9"/><stop offset="0.0750" stop-color="#39ffc6"/><stop offset="0.0875" stop-color="#4bffb4"/><stop offset="0.1000" stop-color="#5cffa3"/><stop offset="0.1000" stop-color="#79ff86"/><stop offset="0.1125" stop-color="#89ff76"/><stop offset="0.1250" stop-color="#99ff66"/><stop offset="0.1375" stop-color="#a9ff56"/><stop offset="0.1500" stop-color="#b7ff48"/><stop offset="0.1500" stop-color="#d1ff2e"/><stop offset="0.1625" stop-color="#dfff20"/><stop offset="0.1750" stop-color="#edff12"/><stop offset="0.1875" stop-color="#fbff04"/><stop offset="0.2000" stop-color="#fff600"/><stop offset="0.2000" stop-color="#ffe000"/><stop offset="0.2125" stop-color="#ffd300"/><stop offset="0.2250" stop-color="#ffc700"/><stop offset="0.2375" stop-color="#ffba00"/><stop offset="0.2500" stop-color="#ffae00"/><stop offset="0.2500" stop-color="#ff9a00"/><stop offset="0.2625" stop-color="#ff8e00"/><stop offset="0.2750" stop-color="#ff8300"/><stop offset="0.2875" stop-color="#ff7700"/><stop offset="0.3000" stop-color="#ff6c00"/><stop offset="0.3000" stop-color="#ff5900"/><stop offset="0.3125" stop-color="#ff4e00"/><stop offset="0.3250" stop-color="#ff4300"/><stop offset="0.3375" stop-color="#ff3800"/><stop offset="0.3500" stop-color="#ff2d00"/><stop offset="0.3500" stop-color="#ff1b00"/><stop offset="0.3625" stop-color="#ff1000"/><stop offset="0.3750" stop-color="#ff0600"/><stop offset="0.3875" stop-color="#fa0000"/><stop offset="0.4000" stop-color="#ef0000"/><stop offset="0.4000" stop-color="#dd0000"/><stop offset="0.4125" stop-color="#d30000"/><stop offset="0.4250" stop-color="#c80000"/><stop offset="0.4375" stop-color="#be0000"/><stop offset="0.4500" stop-color="#b30000"/><stop offset="0.4500" stop-color="#a10000"/><stop offset="0.4625" stop-color="#970000"/><stop offset="0.4750" stop-color="#8c0000"/><stop offset="0.4875" stop-color="#960000"/><stop offset="0.5000" stop-color="#9f0000"/><stop offset="0.5000" stop-color="#b00000"/><stop offset="0.5125" stop-color="#b90000"/><stop offset="0.5250" stop-color="#c30000"/><stop offset="0.5375" stop-color="#cc0000"/><stop offset="0.5500" stop-color="#d60000"/><stop offset="0.5500" stop-color="#e60000"/><stop offset="0.5625" stop-color="#ef0000"/><stop offset="0.5750" stop-color="#f90000"/><stop offset="0.5875" stop-color="#ff0400"/><stop offset="0.6000" stop-color="#ff0d00"/><stop offset="0.6000" stop-color="#ff1e00"/><stop offset="0.6125" stop-color="#ff2800"/><stop offset="0.6250" stop-color="#ff3100"/><stop offset="0.6375" stop-color="#ff3b00"/><stop offset="0.6500" stop-color="#ff4500"/><stop offset="0.6500" stop-color="#ff5600"/><stop offset="0.6625" stop-color="#ff6000"/><stop offset="0.6750" stop-color="#ff6a00"/><stop offset="0.6875" stop-color="#ff7400"/><stop offset="0.7000" stop-color="#ff7f00"/><stop offset="0.7000" stop-color="#ff9000"/><stop offset="0.7125" stop-color="#ff9b00"/><stop offset="0.7250" stop-color="#ffa600"/><stop offset="0.7375" stop-color="#ffb000"/><stop offset="0.7500" stop-color="#ffbc00"/><stop offset="0.7500" stop-color="#ffcf00"/><stop offset="0.7625" stop-color="#ffda00"/><stop offset="0.7750" stop-color="#ffe600"/><stop offset="0.7875" stop-color="#fff100"/><stop offset="0.8000" stop-color="#fffd00"/><stop offset="0.8000" stop-color="#ebff14"/><stop offset="0.8125" stop-color="#dfff20"/><stop offset="0.8250" stop-color="#d2ff2d"/><stop offset="0.8375" stop-color="#c5ff3a"/><stop offset="0.8500" stop-color="#b8ff47"/><stop offset="0.8500" stop-color="#a0ff5f"/><stop offset="0.8625" stop-color="#92ff6d"/><stop offset="0.8750" stop-color="#84ff7b"/><stop offset="0.8875" stop-color="#75ff8a"/><stop offset="0.9000" stop-color="#65ff9a"/><stop offset="0.9000" stop-color="#4affb5"/><stop offset="0.9125" stop-color="#3affc5"/><stop offset="0.9250" stop-color="#2affd5"/><stop offset="0.9375" stop-color="#19ffe6"/><stop offset="0.9500" stop-color="#07fff8"/><stop offset="0.9500" stop-color="#00e7ff"/><stop offset="0.9625" stop-color="#00d4ff"/><stop offset="0.9750" stop-color="#00c1ff"/><stop offset="0.9875" stop-color="#00adff"/><stop offset="1.0000" stop-color="#0098ff"/></linearGradient><linearGradient id="gF17" gradientUnits="userSpaceOnUse" x1="936.3" y1="0" x2="1643" y2="0"><stop offset="0.0000" stop-color="#009fff"/><stop offset="0.0125" stop-color="#00b6ff"/><stop offset="0.0250" stop-color="#00ccff"/><stop offset="0.0375" stop-color="#00e1ff"/><stop offset="0.0500" stop-color="#00f4ff"/><stop offset="0.0500" stop-color="#17ffe8"/><stop offset="0.0625" stop-color="#2affd5"/><stop offset="0.0750" stop-color="#3dffc2"/><stop offset="0.0875" stop-color="#4effb1"/><stop offset="0.1000" stop-color="#5fffa0"/><stop offset="0.1000" stop-color="#7cff83"/><stop offset="0.1125" stop-color="#8cff73"/><stop offset="0.1250" stop-color="#9cff63"/><stop offset="0.1375" stop-color="#abff54"/><stop offset="0.1500" stop-color="#baff45"/><stop offset="0.1500" stop-color="#d3ff2c"/><stop offset="0.1625" stop-color="#e1ff1e"/><stop offset="0.1750" stop-color="#efff10"/><stop offset="0.1875" stop-color="#fcff03"/><stop offset="0.2000" stop-color="#fff500"/><stop offset="0.2000" stop-color="#ffdf00"/><stop offset="0.2125" stop-color="#ffd200"/><stop offset="0.2250" stop-color="#ffc600"/><stop offset="0.2375" stop-color="#ffba00"/><stop offset="0.2500" stop-color="#ffae00"/><stop offset="0.2500" stop-color="#ff9a00"/><stop offset="0.2625" stop-color="#ff8e00"/><stop offset="0.2750" stop-color="#ff8300"/><stop offset="0.2875" stop-color="#ff7700"/><stop offset="0.3000" stop-color="#ff6c00"/><stop offset="0.3000" stop-color="#ff5900"/><stop offset="0.3125" stop-color="#ff4e00"/><stop offset="0.3250" stop-color="#ff4400"/><stop offset="0.3375" stop-color="#ff3900"/><stop offset="0.3500" stop-color="#ff2e00"/><stop offset="0.3500" stop-color="#ff1c00"/><stop offset="0.3625" stop-color="#ff1100"/><stop offset="0.3750" stop-color="#ff0700"/><stop offset="0.3875" stop-color="#fb0000"/><stop offset="0.4000" stop-color="#f10000"/><stop offset="0.4000" stop-color="#df0000"/><stop offset="0.4125" stop-color="#d50000"/><stop offset="0.4250" stop-color="#ca0000"/><stop offset="0.4375" stop-color="#c00000"/><stop offset="0.4500" stop-color="#b50000"/><stop offset="0.4500" stop-color="#a40000"/><stop offset="0.4625" stop-color="#990000"/><stop offset="0.4750" stop-color="#8f0000"/><stop offset="0.4875" stop-color="#980000"/><stop offset="0.5000" stop-color="#a20000"/><stop offset="0.5000" stop-color="#b20000"/><stop offset="0.5125" stop-color="#bb0000"/><stop offset="0.5250" stop-color="#c50000"/><stop offset="0.5375" stop-color="#ce0000"/><stop offset="0.5500" stop-color="#d70000"/><stop offset="0.5500" stop-color="#e80000"/><stop offset="0.5625" stop-color="#f10000"/><stop offset="0.5750" stop-color="#fa0000"/><stop offset="0.5875" stop-color="#ff0500"/><stop offset="0.6000" stop-color="#ff0e00"/><stop offset="0.6000" stop-color="#ff1f00"/><stop offset="0.6125" stop-color="#ff2800"/><stop offset="0.6250" stop-color="#ff3200"/><stop offset="0.6375" stop-color="#ff3c00"/><stop offset="0.6500" stop-color="#ff4500"/><stop offset="0.6500" stop-color="#ff5600"/><stop offset="0.6625" stop-color="#ff6000"/><stop offset="0.6750" stop-color="#ff6a00"/><stop offset="0.6875" stop-color="#ff7400"/><stop offset="0.7000" stop-color="#ff7e00"/><stop offset="0.7000" stop-color="#ff9000"/><stop offset="0.7125" stop-color="#ff9b00"/><stop offset="0.7250" stop-color="#ffa500"/><stop offset="0.7375" stop-color="#ffb000"/><stop offset="0.7500" stop-color="#ffbb00"/><stop offset="0.7500" stop-color="#ffce00"/><stop offset="0.7625" stop-color="#ffd900"/><stop offset="0.7750" stop-color="#ffe400"/><stop offset="0.7875" stop-color="#fff000"/><stop offset="0.8000" stop-color="#fffc00"/><stop offset="0.8000" stop-color="#edff12"/><stop offset="0.8125" stop-color="#e1ff1e"/><stop offset="0.8250" stop-color="#d4ff2b"/><stop offset="0.8375" stop-color="#c7ff38"/><stop offset="0.8500" stop-color="#baff45"/><stop offset="0.8500" stop-color="#a3ff5c"/><stop offset="0.8625" stop-color="#95ff6a"/><stop offset="0.8750" stop-color="#86ff79"/><stop offset="0.8875" stop-color="#78ff87"/><stop offset="0.9000" stop-color="#68ff97"/><stop offset="0.9000" stop-color="#4effb1"/><stop offset="0.9125" stop-color="#3effc1"/><stop offset="0.9250" stop-color="#2effd1"/><stop offset="0.9375" stop-color="#1dffe2"/><stop offset="0.9500" stop-color="#0bfff4"/><stop offset="0.9500" stop-color="#00ebff"/><stop offset="0.9625" stop-color="#00d9ff"/><stop offset="0.9750" stop-color="#00c6ff"/><stop offset="0.9875" stop-color="#00b2ff"/><stop offset="1.0000" stop-color="#009eff"/></linearGradient><linearGradient id="gF18" gradientUnits="userSpaceOnUse" x1="936.3" y1="0" x2="1643" y2="0"><stop offset="0.0000" stop-color="#00a5ff"/><stop offset="0.0125" stop-color="#00bbff"/><stop offset="0.0250" stop-color="#00d1ff"/><stop offset="0.0375" stop-color="#00e5ff"/><stop offset="0.0500" stop-color="#00f9ff"/><stop offset="0.0500" stop-color="#1bffe4"/><stop offset="0.0625" stop-color="#2effd1"/><stop offset="0.0750" stop-color="#40ffbf"/><stop offset="0.0875" stop-color="#52ffad"/><stop offset="0.1000" stop-color="#62ff9d"/><stop offset="0.1000" stop-color="#7fff80"/><stop offset="0.1125" stop-color="#8fff70"/><stop offset="0.1250" stop-color="#9fff60"/><stop offset="0.1375" stop-color="#aeff51"/><stop offset="0.1500" stop-color="#bcff43"/><stop offset="0.1500" stop-color="#d5ff2a"/><stop offset="0.1625" stop-color="#e3ff1c"/><stop offset="0.1750" stop-color="#f0ff0f"/><stop offset="0.1875" stop-color="#feff01"/><stop offset="0.2000" stop-color="#fff300"/><stop offset="0.2000" stop-color="#ffde00"/><stop offset="0.2125" stop-color="#ffd100"/><stop offset="0.2250" stop-color="#ffc500"/><stop offset="0.2375" stop-color="#ffb900"/><stop offset="0.2500" stop-color="#ffad00"/><stop offset="0.2500" stop-color="#ff9900"/><stop offset="0.2625" stop-color="#ff8e00"/><stop offset="0.2750" stop-color="#ff8200"/><stop offset="0.2875" stop-color="#ff7700"/><stop offset="0.3000" stop-color="#ff6c00"/><stop offset="0.3000" stop-color="#ff5a00"/><stop offset="0.3125" stop-color="#ff4f00"/><stop offset="0.3250" stop-color="#ff4400"/><stop offset="0.3375" stop-color="#ff3a00"/><stop offset="0.3500" stop-color="#ff2f00"/><stop offset="0.3500" stop-color="#ff1d00"/><stop offset="0.3625" stop-color="#ff1300"/><stop offset="0.3750" stop-color="#ff0800"/><stop offset="0.3875" stop-color="#fd0000"/><stop offset="0.4000" stop-color="#f20000"/><stop offset="0.4000" stop-color="#e10000"/><stop offset="0.4125" stop-color="#d60000"/><stop offset="0.4250" stop-color="#cc0000"/><stop offset="0.4375" stop-color="#c20000"/><stop offset="0.4500" stop-color="#b80000"/><stop offset="0.4500" stop-color="#a60000"/><stop offset="0.4625" stop-color="#9c0000"/><stop offset="0.4750" stop-color="#920000"/><stop offset="0.4875" stop-color="#9b0000"/><stop offset="0.5000" stop-color="#a40000"/><stop offset="0.5000" stop-color="#b40000"/><stop offset="0.5125" stop-color="#bd0000"/><stop offset="0.5250" stop-color="#c70000"/><stop offset="0.5375" stop-color="#d00000"/><stop offset="0.5500" stop-color="#d90000"/><stop offset="0.5500" stop-color="#e90000"/><stop offset="0.5625" stop-color="#f20000"/><stop offset="0.5750" stop-color="#fc0000"/><stop offset="0.5875" stop-color="#ff0600"/><stop offset="0.6000" stop-color="#ff1000"/><stop offset="0.6000" stop-color="#ff2000"/><stop offset="0.6125" stop-color="#ff2900"/><stop offset="0.6250" stop-color="#ff3300"/><stop offset="0.6375" stop-color="#ff3c00"/><stop offset="0.6500" stop-color="#ff4600"/><stop offset="0.6500" stop-color="#ff5700"/><stop offset="0.6625" stop-color="#ff6000"/><stop offset="0.6750" stop-color="#ff6a00"/><stop offset="0.6875" stop-color="#ff7400"/><stop offset="0.7000" stop-color="#ff7e00"/><stop offset="0.7000" stop-color="#ff9000"/><stop offset="0.7125" stop-color="#ff9a00"/><stop offset="0.7250" stop-color="#ffa500"/><stop offset="0.7375" stop-color="#ffaf00"/><stop offset="0.7500" stop-color="#ffba00"/><stop offset="0.7500" stop-color="#ffcd00"/><stop offset="0.7625" stop-color="#ffd800"/><stop offset="0.7750" stop-color="#ffe300"/><stop offset="0.7875" stop-color="#ffef00"/><stop offset="0.8000" stop-color="#fffa00"/><stop offset="0.8000" stop-color="#efff10"/><stop offset="0.8125" stop-color="#e3ff1c"/><stop offset="0.8250" stop-color="#d6ff29"/><stop offset="0.8375" stop-color="#c9ff36"/><stop offset="0.8500" stop-color="#bcff43"/><stop offset="0.8500" stop-color="#a5ff5a"/><stop offset="0.8625" stop-color="#97ff68"/><stop offset="0.8750" stop-color="#89ff76"/><stop offset="0.8875" stop-color="#7bff84"/><stop offset="0.9000" stop-color="#6cff93"/><stop offset="0.9000" stop-color="#51ffae"/><stop offset="0.9125" stop-color="#42ffbd"/><stop offset="0.9250" stop-color="#32ffcd"/><stop offset="0.9375" stop-color="#21ffde"/><stop offset="0.9500" stop-color="#0ffff0"/><stop offset="0.9500" stop-color="#00f0ff"/><stop offset="0.9625" stop-color="#00deff"/><stop offset="0.9750" stop-color="#00cbff"/><stop offset="0.9875" stop-color="#00b7ff"/><stop offset="1.0000" stop-color="#00a3ff"/></linearGradient><linearGradient id="gF19" gradientUnits="userSpaceOnUse" x1="936.3" y1="0" x2="1643" y2="0"><stop offset="0.0000" stop-color="#00aaff"/><stop offset="0.0125" stop-color="#00c0ff"/><stop offset="0.0250" stop-color="#00d6ff"/><stop offset="0.0375" stop-color="#00eaff"/><stop offset="0.0500" stop-color="#00fdff"/><stop offset="0.0500" stop-color="#1fffe0"/><stop offset="0.0625" stop-color="#32ffcd"/><stop offset="0.0750" stop-color="#44ffbb"/><stop offset="0.0875" stop-color="#55ffaa"/><stop offset="0.1000" stop-color="#66ff99"/><stop offset="0.1000" stop-color="#82ff7d"/><stop offset="0.1125" stop-color="#92ff6d"/><stop offset="0.1250" stop-color="#a1ff5e"/><stop offset="0.1375" stop-color="#b0ff4f"/><stop offset="0.1500" stop-color="#beff41"/><stop offset="0.1500" stop-color="#d7ff28"/><stop offset="0.1625" stop-color="#e5ff1a"/><stop offset="0.1750" stop-color="#f2ff0d"/><stop offset="0.1875" stop-color="#ffff00"/><stop offset="0.2000" stop-color="#fff200"/><stop offset="0.2000" stop-color="#ffdd00"/><stop offset="0.2125" stop-color="#ffd000"/><stop offset="0.2250" stop-color="#ffc400"/><stop offset="0.2375" stop-color="#ffb800"/><stop offset="0.2500" stop-color="#ffad00"/><stop offset="0.2500" stop-color="#ff9900"/><stop offset="0.2625" stop-color="#ff8e00"/><stop offset="0.2750" stop-color="#ff8200"/><stop offset="0.2875" stop-color="#ff7700"/><stop offset="0.3000" stop-color="#ff6d00"/><stop offset="0.3000" stop-color="#ff5a00"/><stop offset="0.3125" stop-color="#ff4f00"/><stop offset="0.3250" stop-color="#ff4500"/><stop offset="0.3375" stop-color="#ff3a00"/><stop offset="0.3500" stop-color="#ff3000"/><stop offset="0.3500" stop-color="#ff1e00"/><stop offset="0.3625" stop-color="#ff1400"/><stop offset="0.3750" stop-color="#ff0900"/><stop offset="0.3875" stop-color="#fe0000"/><stop offset="0.4000" stop-color="#f40000"/><stop offset="0.4000" stop-color="#e20000"/><stop offset="0.4125" stop-color="#d80000"/><stop offset="0.4250" stop-color="#ce0000"/><stop offset="0.4375" stop-color="#c40000"/><stop offset="0.4500" stop-color="#ba0000"/><stop offset="0.4500" stop-color="#a80000"/><stop offset="0.4625" stop-color="#9e0000"/><stop offset="0.4750" stop-color="#940000"/><stop offset="0.4875" stop-color="#9d0000"/><stop offset="0.5000" stop-color="#a70000"/><stop offset="0.5000" stop-color="#b60000"/><stop offset="0.5125" stop-color="#bf0000"/><stop offset="0.5250" stop-color="#c90000"/><stop offset="0.5375" stop-color="#d20000"/><stop offset="0.5500" stop-color="#db0000"/><stop offset="0.5500" stop-color="#eb0000"/><stop offset="0.5625" stop-color="#f40000"/><stop offset="0.5750" stop-color="#fd0000"/><stop offset="0.5875" stop-color="#ff0800"/><stop offset="0.6000" stop-color="#ff1100"/><stop offset="0.6000" stop-color="#ff2100"/><stop offset="0.6125" stop-color="#ff2a00"/><stop offset="0.6250" stop-color="#ff3400"/><stop offset="0.6375" stop-color="#ff3d00"/><stop offset="0.6500" stop-color="#ff4700"/><stop offset="0.6500" stop-color="#ff5700"/><stop offset="0.6625" stop-color="#ff6100"/><stop offset="0.6750" stop-color="#ff6b00"/><stop offset="0.6875" stop-color="#ff7400"/><stop offset="0.7000" stop-color="#ff7e00"/><stop offset="0.7000" stop-color="#ff9000"/><stop offset="0.7125" stop-color="#ff9a00"/><stop offset="0.7250" stop-color="#ffa400"/><stop offset="0.7375" stop-color="#ffaf00"/><stop offset="0.7500" stop-color="#ffb900"/><stop offset="0.7500" stop-color="#ffcc00"/><stop offset="0.7625" stop-color="#ffd700"/><stop offset="0.7750" stop-color="#ffe200"/><stop offset="0.7875" stop-color="#ffed00"/><stop offset="0.8000" stop-color="#fff900"/><stop offset="0.8000" stop-color="#f1ff0e"/><stop offset="0.8125" stop-color="#e5ff1a"/><stop offset="0.8250" stop-color="#d8ff27"/><stop offset="0.8375" stop-color="#ccff33"/><stop offset="0.8500" stop-color="#beff41"/><stop offset="0.8500" stop-color="#a8ff57"/><stop offset="0.8625" stop-color="#9aff65"/><stop offset="0.8750" stop-color="#8cff73"/><stop offset="0.8875" stop-color="#7eff81"/><stop offset="0.9000" stop-color="#6fff90"/><stop offset="0.9000" stop-color="#55ffaa"/><stop offset="0.9125" stop-color="#45ffba"/><stop offset="0.9250" stop-color="#35ffca"/><stop offset="0.9375" stop-color="#25ffda"/><stop offset="0.9500" stop-color="#13ffec"/><stop offset="0.9500" stop-color="#00f4ff"/><stop offset="0.9625" stop-color="#00e2ff"/><stop offset="0.9750" stop-color="#00d0ff"/><stop offset="0.9875" stop-color="#00bdff"/><stop offset="1.0000" stop-color="#00a8ff"/></linearGradient><linearGradient id="gF20" gradientUnits="userSpaceOnUse" x1="936.3" y1="0" x2="1643" y2="0"><stop offset="0.0000" stop-color="#00afff"/><stop offset="0.0125" stop-color="#00c5ff"/><stop offset="0.0250" stop-color="#00daff"/><stop offset="0.0375" stop-color="#00eeff"/><stop offset="0.0500" stop-color="#03fffc"/><stop offset="0.0500" stop-color="#23ffdc"/><stop offset="0.0625" stop-color="#36ffc9"/><stop offset="0.0750" stop-color="#47ffb8"/><stop offset="0.0875" stop-color="#58ffa7"/><stop offset="0.1000" stop-color="#69ff96"/><stop offset="0.1000" stop-color="#85ff7a"/><stop offset="0.1125" stop-color="#94ff6b"/><stop offset="0.1250" stop-color="#a4ff5b"/><stop offset="0.1375" stop-color="#b2ff4d"/><stop offset="0.1500" stop-color="#c1ff3e"/><stop offset="0.1500" stop-color="#d9ff26"/><stop offset="0.1625" stop-color="#e6ff19"/><stop offset="0.1750" stop-color="#f4ff0b"/><stop offset="0.1875" stop-color="#fffd00"/><stop offset="0.2000" stop-color="#fff100"/><stop offset="0.2000" stop-color="#ffdb00"/><stop offset="0.2125" stop-color="#ffcf00"/><stop offset="0.2250" stop-color="#ffc300"/><stop offset="0.2375" stop-color="#ffb800"/><stop offset="0.2500" stop-color="#ffac00"/><stop offset="0.2500" stop-color="#ff9900"/><stop offset="0.2625" stop-color="#ff8d00"/><stop offset="0.2750" stop-color="#ff8200"/><stop offset="0.2875" stop-color="#ff7700"/><stop offset="0.3000" stop-color="#ff6d00"/><stop offset="0.3000" stop-color="#ff5a00"/><stop offset="0.3125" stop-color="#ff5000"/><stop offset="0.3250" stop-color="#ff4500"/><stop offset="0.3375" stop-color="#ff3b00"/><stop offset="0.3500" stop-color="#ff3100"/><stop offset="0.3500" stop-color="#ff1f00"/><stop offset="0.3625" stop-color="#ff1500"/><stop offset="0.3750" stop-color="#ff0b00"/><stop offset="0.3875" stop-color="#ff0100"/><stop offset="0.4000" stop-color="#f60000"/><stop offset="0.4000" stop-color="#e40000"/><stop offset="0.4125" stop-color="#da0000"/><stop offset="0.4250" stop-color="#d00000"/><stop offset="0.4375" stop-color="#c60000"/><stop offset="0.4500" stop-color="#bc0000"/><stop offset="0.4500" stop-color="#ab0000"/><stop offset="0.4625" stop-color="#a10000"/><stop offset="0.4750" stop-color="#970000"/><stop offset="0.4875" stop-color="#a00000"/><stop offset="0.5000" stop-color="#a90000"/><stop offset="0.5000" stop-color="#b80000"/><stop offset="0.5125" stop-color="#c20000"/><stop offset="0.5250" stop-color="#cb0000"/><stop offset="0.5375" stop-color="#d40000"/><stop offset="0.5500" stop-color="#dd0000"/><stop offset="0.5500" stop-color="#ec0000"/><stop offset="0.5625" stop-color="#f60000"/><stop offset="0.5750" stop-color="#ff0000"/><stop offset="0.5875" stop-color="#ff0900"/><stop offset="0.6000" stop-color="#ff1200"/><stop offset="0.6000" stop-color="#ff2200"/><stop offset="0.6125" stop-color="#ff2b00"/><stop offset="0.6250" stop-color="#ff3400"/><stop offset="0.6375" stop-color="#ff3e00"/><stop offset="0.6500" stop-color="#ff4700"/><stop offset="0.6500" stop-color="#ff5800"/><stop offset="0.6625" stop-color="#ff6100"/><stop offset="0.6750" stop-color="#ff6b00"/><stop offset="0.6875" stop-color="#ff7400"/><stop offset="0.7000" stop-color="#ff7e00"/><stop offset="0.7000" stop-color="#ff8f00"/><stop offset="0.7125" stop-color="#ff9900"/><stop offset="0.7250" stop-color="#ffa400"/><stop offset="0.7375" stop-color="#ffae00"/><stop offset="0.7500" stop-color="#ffb900"/><stop offset="0.7500" stop-color="#ffcb00"/><stop offset="0.7625" stop-color="#ffd600"/><stop offset="0.7750" stop-color="#ffe100"/><stop offset="0.7875" stop-color="#ffec00"/><stop offset="0.8000" stop-color="#fff800"/><stop offset="0.8000" stop-color="#f2ff0d"/><stop offset="0.8125" stop-color="#e6ff19"/><stop offset="0.8250" stop-color="#daff25"/><stop offset="0.8375" stop-color="#ceff31"/><stop offset="0.8500" stop-color="#c1ff3e"/><stop offset="0.8500" stop-color="#aaff55"/><stop offset="0.8625" stop-color="#9dff62"/><stop offset="0.8750" stop-color="#8fff70"/><stop offset="0.8875" stop-color="#81ff7e"/><stop offset="0.9000" stop-color="#72ff8d"/><stop offset="0.9000" stop-color="#58ffa7"/><stop offset="0.9125" stop-color="#49ffb6"/><stop offset="0.9250" stop-color="#39ffc6"/><stop offset="0.9375" stop-color="#29ffd6"/><stop offset="0.9500" stop-color="#18ffe7"/><stop offset="0.9500" stop-color="#00f9ff"/><stop offset="0.9625" stop-color="#00e7ff"/><stop offset="0.9750" stop-color="#00d5ff"/><stop offset="0.9875" stop-color="#00c2ff"/><stop offset="1.0000" stop-color="#00aeff"/></linearGradient><linearGradient id="gF21" gradientUnits="userSpaceOnUse" x1="936.3" y1="0" x2="1643" y2="0"><stop offset="0.0000" stop-color="#00b4ff"/><stop offset="0.0125" stop-color="#00caff"/><stop offset="0.0250" stop-color="#00dfff"/><stop offset="0.0375" stop-color="#00f3ff"/><stop offset="0.0500" stop-color="#07fff8"/><stop offset="0.0500" stop-color="#27ffd8"/><stop offset="0.0625" stop-color="#39ffc6"/><stop offset="0.0750" stop-color="#4bffb4"/><stop offset="0.0875" stop-color="#5cffa3"/><stop offset="0.1000" stop-color="#6cff93"/><stop offset="0.1000" stop-color="#87ff78"/><stop offset="0.1125" stop-color="#97ff68"/><stop offset="0.1250" stop-color="#a6ff59"/><stop offset="0.1375" stop-color="#b5ff4a"/><stop offset="0.1500" stop-color="#c3ff3c"/><stop offset="0.1500" stop-color="#daff25"/><stop offset="0.1625" stop-color="#e8ff17"/><stop offset="0.1750" stop-color="#f5ff0a"/><stop offset="0.1875" stop-color="#fffc00"/><stop offset="0.2000" stop-color="#fff000"/><stop offset="0.2000" stop-color="#ffda00"/><stop offset="0.2125" stop-color="#ffce00"/><stop offset="0.2250" stop-color="#ffc300"/><stop offset="0.2375" stop-color="#ffb700"/><stop offset="0.2500" stop-color="#ffac00"/><stop offset="0.2500" stop-color="#ff9800"/><stop offset="0.2625" stop-color="#ff8d00"/><stop offset="0.2750" stop-color="#ff8200"/><stop offset="0.2875" stop-color="#ff7800"/><stop offset="0.3000" stop-color="#ff6d00"/><stop offset="0.3000" stop-color="#ff5b00"/><stop offset="0.3125" stop-color="#ff5000"/><stop offset="0.3250" stop-color="#ff4600"/><stop offset="0.3375" stop-color="#ff3c00"/><stop offset="0.3500" stop-color="#ff3200"/><stop offset="0.3500" stop-color="#ff2000"/><stop offset="0.3625" stop-color="#ff1600"/><stop offset="0.3750" stop-color="#ff0c00"/><stop offset="0.3875" stop-color="#ff0200"/><stop offset="0.4000" stop-color="#f70000"/><stop offset="0.4000" stop-color="#e60000"/><stop offset="0.4125" stop-color="#dc0000"/><stop offset="0.4250" stop-color="#d20000"/><stop offset="0.4375" stop-color="#c80000"/><stop offset="0.4500" stop-color="#be0000"/><stop offset="0.4500" stop-color="#ad0000"/><stop offset="0.4625" stop-color="#a30000"/><stop offset="0.4750" stop-color="#990000"/><stop offset="0.4875" stop-color="#a20000"/><stop offset="0.5000" stop-color="#ab0000"/><stop offset="0.5000" stop-color="#bb0000"/><stop offset="0.5125" stop-color="#c40000"/><stop offset="0.5250" stop-color="#cd0000"/><stop offset="0.5375" stop-color="#d60000"/><stop offset="0.5500" stop-color="#df0000"/><stop offset="0.5500" stop-color="#ee0000"/><stop offset="0.5625" stop-color="#f70000"/><stop offset="0.5750" stop-color="#ff0100"/><stop offset="0.5875" stop-color="#ff0a00"/><stop offset="0.6000" stop-color="#ff1300"/><stop offset="0.6000" stop-color="#ff2300"/><stop offset="0.6125" stop-color="#ff2c00"/><stop offset="0.6250" stop-color="#ff3500"/><stop offset="0.6375" stop-color="#ff3f00"/><stop offset="0.6500" stop-color="#ff4800"/><stop offset="0.6500" stop-color="#ff5800"/><stop offset="0.6625" stop-color="#ff6100"/><stop offset="0.6750" stop-color="#ff6b00"/><stop offset="0.6875" stop-color="#ff7500"/><stop offset="0.7000" stop-color="#ff7e00"/><stop offset="0.7000" stop-color="#ff8f00"/><stop offset="0.7125" stop-color="#ff9900"/><stop offset="0.7250" stop-color="#ffa300"/><stop offset="0.7375" stop-color="#ffae00"/><stop offset="0.7500" stop-color="#ffb800"/><stop offset="0.7500" stop-color="#ffca00"/><stop offset="0.7625" stop-color="#ffd500"/><stop offset="0.7750" stop-color="#ffe000"/><stop offset="0.7875" stop-color="#ffeb00"/><stop offset="0.8000" stop-color="#fff600"/><stop offset="0.8000" stop-color="#f4ff0b"/><stop offset="0.8125" stop-color="#e8ff17"/><stop offset="0.8250" stop-color="#dcff23"/><stop offset="0.8375" stop-color="#cfff30"/><stop offset="0.8500" stop-color="#c3ff3c"/><stop offset="0.8500" stop-color="#acff53"/><stop offset="0.8625" stop-color="#9fff60"/><stop offset="0.8750" stop-color="#91ff6e"/><stop offset="0.8875" stop-color="#83ff7c"/><stop offset="0.9000" stop-color="#75ff8a"/><stop offset="0.9000" stop-color="#5bffa4"/><stop offset="0.9125" stop-color="#4cffb3"/><stop offset="0.9250" stop-color="#3dffc2"/><stop offset="0.9375" stop-color="#2cffd3"/><stop offset="0.9500" stop-color="#1bffe4"/><stop offset="0.9500" stop-color="#00fdff"/><stop offset="0.9625" stop-color="#00ecff"/><stop offset="0.9750" stop-color="#00d9ff"/><stop offset="0.9875" stop-color="#00c6ff"/><stop offset="1.0000" stop-color="#00b3ff"/></linearGradient><linearGradient id="gF22" gradientUnits="userSpaceOnUse" x1="936.3" y1="0" x2="1643" y2="0"><stop offset="0.0000" stop-color="#00baff"/><stop offset="0.0125" stop-color="#00cfff"/><stop offset="0.0250" stop-color="#00e3ff"/><stop offset="0.0375" stop-color="#00f7ff"/><stop offset="0.0500" stop-color="#0bfff4"/><stop offset="0.0500" stop-color="#2bffd4"/><stop offset="0.0625" stop-color="#3dffc2"/><stop offset="0.0750" stop-color="#4effb1"/><stop offset="0.0875" stop-color="#5fffa0"/><stop offset="0.1000" stop-color="#6fff90"/><stop offset="0.1000" stop-color="#8aff75"/><stop offset="0.1125" stop-color="#99ff66"/><stop offset="0.1250" stop-color="#a8ff57"/><stop offset="0.1375" stop-color="#b7ff48"/><stop offset="0.1500" stop-color="#c5ff3a"/><stop offset="0.1500" stop-color="#dcff23"/><stop offset="0.1625" stop-color="#eaff15"/><stop offset="0.1750" stop-color="#f7ff08"/><stop offset="0.1875" stop-color="#fffb00"/><stop offset="0.2000" stop-color="#ffee00"/><stop offset="0.2000" stop-color="#ffda00"/><stop offset="0.2125" stop-color="#ffce00"/><stop offset="0.2250" stop-color="#ffc200"/><stop offset="0.2375" stop-color="#ffb600"/><stop offset="0.2500" stop-color="#ffab00"/><stop offset="0.2500" stop-color="#ff9800"/><stop offset="0.2625" stop-color="#ff8d00"/><stop offset="0.2750" stop-color="#ff8200"/><stop offset="0.2875" stop-color="#ff7800"/><stop offset="0.3000" stop-color="#ff6d00"/><stop offset="0.3000" stop-color="#ff5b00"/><stop offset="0.3125" stop-color="#ff5100"/><stop offset="0.3250" stop-color="#ff4700"/><stop offset="0.3375" stop-color="#ff3d00"/><stop offset="0.3500" stop-color="#ff3300"/><stop offset="0.3500" stop-color="#ff2100"/><stop offset="0.3625" stop-color="#ff1700"/><stop offset="0.3750" stop-color="#ff0d00"/><stop offset="0.3875" stop-color="#ff0400"/><stop offset="0.4000" stop-color="#f90000"/><stop offset="0.4000" stop-color="#e80000"/><stop offset="0.4125" stop-color="#de0000"/><stop offset="0.4250" stop-color="#d40000"/><stop offset="0.4375" stop-color="#ca0000"/><stop offset="0.4500" stop-color="#c00000"/><stop offset="0.4500" stop-color="#b00000"/><stop offset="0.4625" stop-color="#a60000"/><stop offset="0.4750" stop-color="#9c0000"/><stop offset="0.4875" stop-color="#a50000"/><stop offset="0.5000" stop-color="#ae0000"/><stop offset="0.5000" stop-color="#bd0000"/><stop offset="0.5125" stop-color="#c60000"/><stop offset="0.5250" stop-color="#cf0000"/><stop offset="0.5375" stop-color="#d80000"/><stop offset="0.5500" stop-color="#e10000"/><stop offset="0.5500" stop-color="#f00000"/><stop offset="0.5625" stop-color="#f90000"/><stop offset="0.5750" stop-color="#ff0300"/><stop offset="0.5875" stop-color="#ff0c00"/><stop offset="0.6000" stop-color="#ff1500"/><stop offset="0.6000" stop-color="#ff2400"/><stop offset="0.6125" stop-color="#ff2d00"/><stop offset="0.6250" stop-color="#ff3600"/><stop offset="0.6375" stop-color="#ff3f00"/><stop offset="0.6500" stop-color="#ff4900"/><stop offset="0.6500" stop-color="#ff5900"/><stop offset="0.6625" stop-color="#ff6200"/><stop offset="0.6750" stop-color="#ff6b00"/><stop offset="0.6875" stop-color="#ff7500"/><stop offset="0.7000" stop-color="#ff7e00"/><stop offset="0.7000" stop-color="#ff8f00"/><stop offset="0.7125" stop-color="#ff9900"/><stop offset="0.7250" stop-color="#ffa300"/><stop offset="0.7375" stop-color="#ffad00"/><stop offset="0.7500" stop-color="#ffb700"/><stop offset="0.7500" stop-color="#ffc900"/><stop offset="0.7625" stop-color="#ffd400"/><stop offset="0.7750" stop-color="#ffdf00"/><stop offset="0.7875" stop-color="#ffea00"/><stop offset="0.8000" stop-color="#fff500"/><stop offset="0.8000" stop-color="#f5ff0a"/><stop offset="0.8125" stop-color="#eaff15"/><stop offset="0.8250" stop-color="#deff21"/><stop offset="0.8375" stop-color="#d1ff2e"/><stop offset="0.8500" stop-color="#c5ff3a"/><stop offset="0.8500" stop-color="#afff50"/><stop offset="0.8625" stop-color="#a2ff5d"/><stop offset="0.8750" stop-color="#94ff6b"/><stop offset="0.8875" stop-color="#86ff79"/><stop offset="0.9000" stop-color="#78ff87"/><stop offset="0.9000" stop-color="#5effa1"/><stop offset="0.9125" stop-color="#50ffaf"/><stop offset="0.9250" stop-color="#40ffbf"/><stop offset="0.9375" stop-color="#30ffcf"/><stop offset="0.9500" stop-color="#1fffe0"/><stop offset="0.9500" stop-color="#02fffd"/><stop offset="0.9625" stop-color="#00f0ff"/><stop offset="0.9750" stop-color="#00deff"/><stop offset="0.9875" stop-color="#00cbff"/><stop offset="1.0000" stop-color="#00b8ff"/></linearGradient><linearGradient id="gF23" gradientUnits="userSpaceOnUse" x1="936.3" y1="0" x2="1643" y2="0"><stop offset="0.0000" stop-color="#00beff"/><stop offset="0.0125" stop-color="#00d4ff"/><stop offset="0.0250" stop-color="#00e8ff"/><stop offset="0.0375" stop-color="#00fbff"/><stop offset="0.0500" stop-color="#0ffff0"/><stop offset="0.0500" stop-color="#2effd1"/><stop offset="0.0625" stop-color="#40ffbf"/><stop offset="0.0750" stop-color="#51ffae"/><stop offset="0.0875" stop-color="#62ff9d"/><stop offset="0.1000" stop-color="#72ff8d"/><stop offset="0.1000" stop-color="#8dff72"/><stop offset="0.1125" stop-color="#9cff63"/><stop offset="0.1250" stop-color="#abff54"/><stop offset="0.1375" stop-color="#b9ff46"/><stop offset="0.1500" stop-color="#c7ff38"/><stop offset="0.1500" stop-color="#deff21"/><stop offset="0.1625" stop-color="#ebff14"/><stop offset="0.1750" stop-color="#f8ff07"/><stop offset="0.1875" stop-color="#fff900"/><stop offset="0.2000" stop-color="#ffed00"/><stop offset="0.2000" stop-color="#ffd900"/><stop offset="0.2125" stop-color="#ffcd00"/><stop offset="0.2250" stop-color="#ffc100"/><stop offset="0.2375" stop-color="#ffb600"/><stop offset="0.2500" stop-color="#ffab00"/><stop offset="0.2500" stop-color="#ff9800"/><stop offset="0.2625" stop-color="#ff8d00"/><stop offset="0.2750" stop-color="#ff8200"/><stop offset="0.2875" stop-color="#ff7800"/><stop offset="0.3000" stop-color="#ff6e00"/><stop offset="0.3000" stop-color="#ff5c00"/><stop offset="0.3125" stop-color="#ff5200"/><stop offset="0.3250" stop-color="#ff4700"/><stop offset="0.3375" stop-color="#ff3d00"/><stop offset="0.3500" stop-color="#ff3400"/><stop offset="0.3500" stop-color="#ff2200"/><stop offset="0.3625" stop-color="#ff1900"/><stop offset="0.3750" stop-color="#ff0f00"/><stop offset="0.3875" stop-color="#ff0500"/><stop offset="0.4000" stop-color="#fa0000"/><stop offset="0.4000" stop-color="#ea0000"/><stop offset="0.4125" stop-color="#e00000"/><stop offset="0.4250" stop-color="#d60000"/><stop offset="0.4375" stop-color="#cc0000"/><stop offset="0.4500" stop-color="#c30000"/><stop offset="0.4500" stop-color="#b20000"/><stop offset="0.4625" stop-color="#a80000"/><stop offset="0.4750" stop-color="#9f0000"/><stop offset="0.4875" stop-color="#a70000"/><stop offset="0.5000" stop-color="#b00000"/><stop offset="0.5000" stop-color="#bf0000"/><stop offset="0.5125" stop-color="#c80000"/><stop offset="0.5250" stop-color="#d10000"/><stop offset="0.5375" stop-color="#da0000"/><stop offset="0.5500" stop-color="#e20000"/><stop offset="0.5500" stop-color="#f10000"/><stop offset="0.5625" stop-color="#fa0000"/><stop offset="0.5750" stop-color="#ff0400"/><stop offset="0.5875" stop-color="#ff0d00"/><stop offset="0.6000" stop-color="#ff1600"/><stop offset="0.6000" stop-color="#ff2500"/><stop offset="0.6125" stop-color="#ff2e00"/><stop offset="0.6250" stop-color="#ff3700"/><stop offset="0.6375" stop-color="#ff4000"/><stop offset="0.6500" stop-color="#ff4900"/><stop offset="0.6500" stop-color="#ff5900"/><stop offset="0.6625" stop-color="#ff6200"/><stop offset="0.6750" stop-color="#ff6c00"/><stop offset="0.6875" stop-color="#ff7500"/><stop offset="0.7000" stop-color="#ff7f00"/><stop offset="0.7000" stop-color="#ff8f00"/><stop offset="0.7125" stop-color="#ff9900"/><stop offset="0.7250" stop-color="#ffa300"/><stop offset="0.7375" stop-color="#ffad00"/><stop offset="0.7500" stop-color="#ffb700"/><stop offset="0.7500" stop-color="#ffc900"/><stop offset="0.7625" stop-color="#ffd300"/><stop offset="0.7750" stop-color="#ffde00"/><stop offset="0.7875" stop-color="#ffe900"/><stop offset="0.8000" stop-color="#fff400"/><stop offset="0.8000" stop-color="#f7ff08"/><stop offset="0.8125" stop-color="#ebff14"/><stop offset="0.8250" stop-color="#dfff20"/><stop offset="0.8375" stop-color="#d3ff2c"/><stop offset="0.8500" stop-color="#c7ff38"/><stop offset="0.8500" stop-color="#b1ff4e"/><stop offset="0.8625" stop-color="#a4ff5b"/><stop offset="0.8750" stop-color="#97ff68"/><stop offset="0.8875" stop-color="#89ff76"/><stop offset="0.9000" stop-color="#7bff84"/><stop offset="0.9000" stop-color="#62ff9d"/><stop offset="0.9125" stop-color="#53ffac"/><stop offset="0.9250" stop-color="#44ffbb"/><stop offset="0.9375" stop-color="#34ffcb"/><stop offset="0.9500" stop-color="#23ffdc"/><stop offset="0.9500" stop-color="#06fff9"/><stop offset="0.9625" stop-color="#00f4ff"/><stop offset="0.9750" stop-color="#00e3ff"/><stop offset="0.9875" stop-color="#00d0ff"/><stop offset="1.0000" stop-color="#00bdff"/></linearGradient><linearGradient id="gT" gradientUnits="userSpaceOnUse" x1="936.3" y1="688.6" x2="1136.1" y2="275.2"><stop offset="0.0000" stop-color="#0072ff"/><stop offset="0.0125" stop-color="#0090ff"/><stop offset="0.0250" stop-color="#00adff"/><stop offset="0.0375" stop-color="#00c8ff"/><stop offset="0.0500" stop-color="#00e2ff"/><stop offset="0.0500" stop-color="#0efff1"/><stop offset="0.0625" stop-color="#26ffd9"/><stop offset="0.0750" stop-color="#3dffc2"/><stop offset="0.0875" stop-color="#53ffac"/><stop offset="0.1000" stop-color="#67ff98"/><stop offset="0.1000" stop-color="#8aff75"/><stop offset="0.1125" stop-color="#9dff62"/><stop offset="0.1250" stop-color="#b0ff4f"/><stop offset="0.1375" stop-color="#c1ff3e"/><stop offset="0.1500" stop-color="#d2ff2d"/><stop offset="0.1500" stop-color="#eeff11"/><stop offset="0.1625" stop-color="#feff01"/><stop offset="0.1750" stop-color="#fff100"/><stop offset="0.1875" stop-color="#ffe200"/><stop offset="0.2000" stop-color="#ffd500"/><stop offset="0.2000" stop-color="#ffbd00"/><stop offset="0.2125" stop-color="#ffb000"/><stop offset="0.2250" stop-color="#ffa300"/><stop offset="0.2375" stop-color="#ff9700"/><stop offset="0.2500" stop-color="#ff8b00"/><stop offset="0.2500" stop-color="#ff7700"/><stop offset="0.2625" stop-color="#ff6c00"/><stop offset="0.2750" stop-color="#ff6100"/><stop offset="0.2875" stop-color="#ff5600"/><stop offset="0.3000" stop-color="#ff4b00"/><stop offset="0.3000" stop-color="#ff3900"/><stop offset="0.3125" stop-color="#ff2f00"/><stop offset="0.3250" stop-color="#ff2500"/><stop offset="0.3375" stop-color="#ff1b00"/><stop offset="0.3500" stop-color="#ff1100"/><stop offset="0.3500" stop-color="#ff0100"/><stop offset="0.3625" stop-color="#f60000"/><stop offset="0.3750" stop-color="#ec0000"/><stop offset="0.3875" stop-color="#e30000"/><stop offset="0.4000" stop-color="#d90000"/><stop offset="0.4000" stop-color="#c90000"/><stop offset="0.4125" stop-color="#c00000"/><stop offset="0.4250" stop-color="#b60000"/><stop offset="0.4375" stop-color="#ad0000"/><stop offset="0.4500" stop-color="#a40000"/><stop offset="0.4500" stop-color="#940000"/><stop offset="0.4625" stop-color="#8b0000"/><stop offset="0.4750" stop-color="#810000"/><stop offset="0.4875" stop-color="#8a0000"/><stop offset="0.5000" stop-color="#920000"/><stop offset="0.5000" stop-color="#a10000"/><stop offset="0.5125" stop-color="#a90000"/><stop offset="0.5250" stop-color="#b10000"/><stop offset="0.5375" stop-color="#ba0000"/><stop offset="0.5500" stop-color="#c20000"/><stop offset="0.5500" stop-color="#d10000"/><stop offset="0.5625" stop-color="#d90000"/><stop offset="0.5750" stop-color="#e20000"/><stop offset="0.5875" stop-color="#eb0000"/><stop offset="0.6000" stop-color="#f30000"/><stop offset="0.6000" stop-color="#ff0300"/><stop offset="0.6125" stop-color="#ff0c00"/><stop offset="0.6250" stop-color="#ff1500"/><stop offset="0.6375" stop-color="#ff1e00"/><stop offset="0.6500" stop-color="#ff2700"/><stop offset="0.6500" stop-color="#ff3700"/><stop offset="0.6625" stop-color="#ff4000"/><stop offset="0.6750" stop-color="#ff4900"/><stop offset="0.6875" stop-color="#ff5300"/><stop offset="0.7000" stop-color="#ff5d00"/><stop offset="0.7000" stop-color="#ff6e00"/><stop offset="0.7125" stop-color="#ff7800"/><stop offset="0.7250" stop-color="#ff8200"/><stop offset="0.7375" stop-color="#ff8d00"/><stop offset="0.7500" stop-color="#ff9800"/><stop offset="0.7500" stop-color="#ffac00"/><stop offset="0.7625" stop-color="#ffb700"/><stop offset="0.7750" stop-color="#ffc300"/><stop offset="0.7875" stop-color="#ffcf00"/><stop offset="0.8000" stop-color="#ffdc00"/><stop offset="0.8000" stop-color="#fff300"/><stop offset="0.8125" stop-color="#feff01"/><stop offset="0.8250" stop-color="#f0ff0f"/><stop offset="0.8375" stop-color="#e1ff1e"/><stop offset="0.8500" stop-color="#d2ff2d"/><stop offset="0.8500" stop-color="#b7ff48"/><stop offset="0.8625" stop-color="#a7ff58"/><stop offset="0.8750" stop-color="#96ff69"/><stop offset="0.8875" stop-color="#85ff7a"/><stop offset="0.9000" stop-color="#72ff8d"/><stop offset="0.9000" stop-color="#52ffad"/><stop offset="0.9125" stop-color="#3fffc0"/><stop offset="0.9250" stop-color="#2affd5"/><stop offset="0.9375" stop-color="#15ffea"/><stop offset="0.9500" stop-color="#00fdff"/><stop offset="0.9500" stop-color="#00d6ff"/><stop offset="0.9625" stop-color="#00beff"/><stop offset="0.9750" stop-color="#00a5ff"/><stop offset="0.9875" stop-color="#008bff"/><stop offset="1.0000" stop-color="#0070ff"/></linearGradient></defs><polygon points="912.3,988.1 1689,803.1 1418.4,672.3 641.7,857.3" fill="#fff"/><polygon points="641.7,857.3 1418.4,672.3 1418.4,351.6 641.7,536.6" fill="#fff"/><polygon points="1689,803.1 1418.4,672.3 1418.4,351.6 1689,482.5" fill="#fff"/><path d="M948.4 979.5L677.8 848.7M677.8 848.7L677.8 528M1066.1 951.5L795.5 820.6M795.5 820.6L795.5 500M1183.9 923.4L913.3 792.6M913.3 792.6L913.3 471.9M1301.7 895.4L1031.1 764.5M1031.1 764.5L1031.1 443.9M1419.5 867.3L1148.9 736.5M1148.9 736.5L1148.9 415.8M1537.3 839.3L1266.7 708.4M1266.7 708.4L1266.7 387.8M1655.1 811.2L1384.5 680.4M1384.5 680.4L1384.5 359.7M900.3 982.3L1676.9 797.3M1676.9 797.3L1676.9 476.6M817.7 942.3L1594.3 757.4M1594.3 757.4L1594.3 436.7M735.1 902.4L1511.7 717.4M1511.7 717.4L1511.7 396.8M652.5 862.5L1429.1 677.5M1429.1 677.5L1429.1 356.8M641.7 841.9L1418.4 656.9M1689 787.8L1418.4 656.9M641.7 787.9L1418.4 603M1689 733.8L1418.4 603M641.7 734L1418.4 549M1689 679.9L1418.4 549M641.7 680.1L1418.4 495.1M1689 625.9L1418.4 495.1M641.7 626.1L1418.4 441.2M1689 572L1418.4 441.2M641.7 572.2L1418.4 387.2M1689 518.1L1418.4 387.2" stroke="#e3e3e3" stroke-width="1.3" fill="none"/><path d="M912.3 988.1L1689 803.1M912.3 988.1L641.7 857.3M641.7 857.3L641.7 536.6M948.4 979.5L965.9 988M1066.1 951.5L1083.7 960M1183.9 923.4L1201.5 931.9M1301.7 895.4L1319.2 903.9M1419.5 867.3L1437 875.8M1537.3 839.3L1554.8 847.8M1655.1 811.2L1672.6 819.7M900.3 982.3L881.4 987.3M817.7 942.3L798.8 947.4M735.1 902.4L716.2 907.4M652.5 862.5L633.6 867.5M641.7 841.9L624.2 833.3M641.7 787.9L624.2 779.4M641.7 734L624.2 725.5M641.7 680.1L624.2 671.5M641.7 626.1L624.2 617.6M641.7 572.2L624.2 563.6" stroke="#4d4d4d" stroke-width="1.6" fill="none"/><g font-family="Liberation Sans, sans-serif" font-size="25.8" fill="#262626"><text x="975.9" y="1021" text-anchor="start">0</text><text x="1093.6" y="993" text-anchor="start">0.05</text><text x="1211.4" y="964.9" text-anchor="start">0.1</text><text x="1329.2" y="936.9" text-anchor="start">0.15</text><text x="1447" y="908.8" text-anchor="start">0.2</text><text x="1564.8" y="880.8" text-anchor="start">0.25</text><text x="1682.6" y="852.7" text-anchor="start">0.3</text><text x="870.8" y="1017.3" text-anchor="end">0</text><text x="788.2" y="977.3" text-anchor="end">0.05</text><text x="705.6" y="937.4" text-anchor="end">0.1</text><text x="623" y="897.5" text-anchor="end">0.15</text><text x="612.5" y="838.4" text-anchor="end">0</text><text x="612.5" y="784.4" text-anchor="end">0.02</text><text x="612.5" y="730.5" text-anchor="end">0.04</text><text x="612.5" y="676.6" text-anchor="end">0.06</text><text x="612.5" y="622.6" text-anchor="end">0.08</text><text x="612.5" y="568.7" text-anchor="end">0.1</text><text x="1218" y="1027" text-anchor="middle">x</text><text x="733" y="1041" text-anchor="middle">y</text><text x="0" y="0" text-anchor="middle" transform="translate(545,695) rotate(-90)">z</text></g><polygon points="936.3,958.3 688.5,838.5 688.5,568.8 936.3,688.6" fill="url(#gL)"/><polygon points="936.3,958.3 1643,790 1643,777.7 936.3,946" fill="url(#gF0)"/><polygon points="936.3,948.1 1643,779.8 1643,766.4 936.3,934.7" fill="url(#gF1)"/><polygon points="936.3,936.9 1643,768.6 1643,755.2 936.3,923.5" fill="url(#gF2)"/><polygon points="936.3,925.7 1643,757.4 1643,744 936.3,912.3" fill="url(#gF3)"/><polygon points="936.3,914.4 1643,746.1 1643,732.7 936.3,901" fill="url(#gF4)"/><polygon points="936.3,903.2 1643,734.9 1643,721.5 936.3,889.8" fill="url(#gF5)"/><polygon points="936.3,892 1643,723.7 1643,710.3 936.3,878.6" fill="url(#gF6)"/><polygon points="936.3,880.7 1643,712.4 1643,699 936.3,867.3" fill="url(#gF7)"/><polygon points="936.3,869.5 1643,701.2 1643,687.8 936.3,856.1" fill="url(#gF8)"/><polygon points="936.3,858.2 1643,689.9 1643,676.5 936.3,844.8" fill="url(#gF9)"/><polygon points="936.3,847 1643,678.7 1643,665.3 936.3,833.6" fill="url(#gF10)"/><polygon points="936.3,835.8 1643,667.5 1643,654.1 936.3,822.4" fill="url(#gF11)"/><polygon points="936.3,824.5 1643,656.2 1643,642.8 936.3,811.1" fill="url(#gF12)"/><polygon points="936.3,813.3 1643,645 1643,631.6 936.3,799.9" fill="url(#gF13)"/><polygon points="936.3,802.1 1643,633.8 1643,620.4 936.3,788.7" fill="url(#gF14)"/><polygon points="936.3,790.8 1643,622.5 1643,609.1 936.3,777.4" fill="url(#gF15)"/><polygon points="936.3,779.6 1643,611.3 1643,597.9 936.3,766.2" fill="url(#gF16)"/><polygon points="936.3,768.3 1643,600 1643,586.6 936.3,754.9" fill="url(#gF17)"/><polygon points="936.3,757.1 1643,588.8 1643,575.4 936.3,743.7" fill="url(#gF18)"/><polygon points="936.3,745.9 1643,577.6 1643,564.2 936.3,732.5" fill="url(#gF19)"/><polygon points="936.3,734.6 1643,566.3 1643,552.9 936.3,721.2" fill="url(#gF20)"/><polygon points="936.3,723.4 1643,555.1 1643,541.7 936.3,710" fill="url(#gF21)"/><polygon points="936.3,712.2 1643,543.9 1643,530.5 936.3,698.8" fill="url(#gF22)"/><polygon points="936.3,700.9 1643,532.6 1643,520.3 936.3,688.6" fill="url(#gF23)"/><polygon points="936.3,688.6 1643,520.3 1395.2,400.5 688.5,568.8" fill="url(#gT)"/><path d="M936.3 958.3L936.3 688.6L688.5 568.8M971.6 949.9L971.6 680.2L723.8 560.4M1007 941.5L1007 671.8L759.2 552M1042.3 933.1L1042.3 663.4L794.5 543.5M1077.6 924.6L1077.6 654.9L829.8 535.1M1113 916.2L1113 646.5L865.2 526.7M1148.3 907.8L1148.3 638.1L900.5 518.3M1183.6 899.4L1183.6 629.7L935.8 509.9M1219 891L1219 621.3L971.2 501.5M1254.3 882.6L1254.3 612.9L1006.5 493.1M1289.7 874.1L1289.7 604.5L1041.9 484.6M1325 865.7L1325 596L1077.2 476.2M1360.3 857.3L1360.3 587.6L1112.5 467.8M1395.7 848.9L1395.7 579.2L1147.9 459.4M1431 840.5L1431 570.8L1183.2 451M1466.3 832.1L1466.3 562.4L1218.5 442.6M1501.7 823.7L1501.7 554L1253.9 434.2M1537 815.2L1537 545.5L1289.2 425.7M1572.3 806.8L1572.3 537.1L1324.5 417.3M1607.7 798.4L1607.7 528.7L1359.9 408.9M1643 790L1643 520.3L1395.2 400.5M936.3 958.3L1643 790M936.3 958.3L688.5 838.5M688.5 838.5L688.5 568.8M936.3 688.6L1643 520.3M688.5 568.8L1395.2 400.5M936.3 688.6L688.5 568.8" stroke="#000" stroke-width="2.2" fill="none" stroke-linejoin="round" stroke-linecap="round"/><g stroke="#000" stroke-width="2.2" stroke-linejoin="round"><g fill="#00a7ff"><polygon points="1399.2,423.5 1374.3,411.4 1374.3,398 1399.2,410"/><polygon points="1399.2,423.5 1422.3,418 1422.3,404.5 1399.2,410"/><polygon points="1399.2,410 1422.3,404.5 1397.3,392.5 1374.3,398"/><polygon points="1399.2,410 1374.3,398 1374.3,390.7 1399.2,402.7"/><polygon points="1399.2,410 1428.2,403.1 1428.2,395.8 1399.2,402.7"/><polygon points="1399.2,402.7 1428.2,395.8 1403.2,383.8 1374.3,390.7"/></g><g fill="#59ffa6"><polygon points="1328.5,440.3 1303.6,428.3 1303.6,414.8 1328.5,426.9"/><polygon points="1328.5,440.3 1351.6,434.8 1351.6,421.4 1328.5,426.9"/><polygon points="1328.5,426.9 1351.6,421.4 1326.7,409.3 1303.6,414.8"/><polygon points="1363.9,431.9 1338.9,419.9 1338.9,406.4 1363.9,418.4"/><polygon points="1363.9,431.9 1387,426.4 1387,412.9 1363.9,418.4"/><polygon points="1363.9,418.4 1387,412.9 1362,400.9 1338.9,406.4"/><polygon points="1328.5,426.9 1303.6,414.8 1303.6,407.5 1328.5,419.6"/><polygon points="1328.5,426.9 1387,412.9 1387,405.7 1328.5,419.6"/><polygon points="1328.5,419.6 1387,405.7 1362,393.6 1303.6,407.5"/><path d="M1357.7 419.9L1357.7 412.6L1332.8 400.6" fill="none"/></g><g fill="#fff900"><polygon points="1257.9,457.2 1232.9,445.1 1232.9,431.6 1257.9,443.7"/><polygon points="1257.9,457.2 1280.9,451.7 1280.9,438.2 1257.9,443.7"/><polygon points="1257.9,443.7 1280.9,438.2 1256,426.1 1232.9,431.6"/><polygon points="1293.2,448.8 1268.3,436.7 1268.3,423.2 1293.2,435.3"/><polygon points="1293.2,448.8 1316.3,443.3 1316.3,429.8 1293.2,435.3"/><polygon points="1293.2,435.3 1316.3,429.8 1291.3,417.7 1268.3,423.2"/><polygon points="1257.9,443.7 1232.9,431.6 1232.9,424.3 1257.9,436.4"/><polygon points="1257.9,443.7 1316.3,429.8 1316.3,422.5 1257.9,436.4"/><polygon points="1257.9,436.4 1316.3,422.5 1291.3,410.4 1232.9,424.3"/><path d="M1287.1 436.7L1287.1 429.4L1262.1 417.4" fill="none"/></g><g fill="#ff7d00"><polygon points="1187.2,474 1162.2,461.9 1162.2,448.4 1187.2,460.5"/><polygon points="1187.2,474 1210.3,468.5 1210.3,455 1187.2,460.5"/><polygon points="1187.2,460.5 1210.3,455 1185.3,443 1162.2,448.4"/><polygon points="1222.5,465.6 1197.6,453.5 1197.6,440 1222.5,452.1"/><polygon points="1222.5,465.6 1245.6,460.1 1245.6,446.6 1222.5,452.1"/><polygon points="1222.5,452.1 1245.6,446.6 1220.7,434.5 1197.6,440"/><polygon points="1187.2,460.5 1162.2,448.4 1162.2,441.2 1187.2,453.2"/><polygon points="1187.2,460.5 1245.6,446.6 1245.6,439.3 1187.2,453.2"/><polygon points="1187.2,453.2 1245.6,439.3 1220.7,427.3 1162.2,441.2"/><path d="M1216.4 453.6L1216.4 446.3L1191.5 434.2" fill="none"/></g><g fill="#ff1800"><polygon points="1116.5,490.8 1091.6,478.8 1091.6,465.3 1116.5,477.3"/><polygon points="1116.5,490.8 1139.6,485.3 1139.6,471.8 1116.5,477.3"/><polygon points="1116.5,477.3 1139.6,471.8 1114.7,459.8 1091.6,465.3"/><polygon points="1151.9,482.4 1126.9,470.3 1126.9,456.9 1151.9,468.9"/><polygon points="1151.9,482.4 1174.9,476.9 1174.9,463.4 1151.9,468.9"/><polygon points="1151.9,468.9 1174.9,463.4 1150,451.4 1126.9,456.9"/><polygon points="1116.5,477.3 1091.6,465.3 1091.6,458 1116.5,470.1"/><polygon points="1116.5,477.3 1174.9,463.4 1174.9,456.1 1116.5,470.1"/><polygon points="1116.5,470.1 1174.9,456.1 1150,444.1 1091.6,458"/><path d="M1145.7 470.4L1145.7 463.1L1120.8 451" fill="none"/></g><g fill="#bb0000"><polygon points="1045.8,507.7 1020.9,495.6 1020.9,482.1 1045.8,494.2"/><polygon points="1045.8,507.7 1068.9,502.2 1068.9,488.7 1045.8,494.2"/><polygon points="1045.8,494.2 1068.9,488.7 1044,476.6 1020.9,482.1"/><polygon points="1081.2,499.2 1056.2,487.2 1056.2,473.7 1081.2,485.8"/><polygon points="1081.2,499.2 1104.3,493.7 1104.3,480.3 1081.2,485.8"/><polygon points="1081.2,485.8 1104.3,480.3 1079.3,468.2 1056.2,473.7"/><polygon points="1045.8,494.2 1020.9,482.1 1020.9,474.8 1045.8,486.9"/><polygon points="1045.8,494.2 1104.3,480.3 1104.3,473 1045.8,486.9"/><polygon points="1045.8,486.9 1104.3,473 1079.3,460.9 1020.9,474.8"/><path d="M1075.1 487.2L1075.1 479.9L1050.1 467.9" fill="none"/></g><g fill="#f00000"><polygon points="975.2,524.5 950.2,512.4 950.2,498.9 975.2,511"/><polygon points="975.2,524.5 998.3,519 998.3,505.5 975.2,511"/><polygon points="975.2,511 998.3,505.5 973.3,493.4 950.2,498.9"/><polygon points="1010.5,516.1 985.6,504 985.6,490.5 1010.5,502.6"/><polygon points="1010.5,516.1 1033.6,510.6 1033.6,497.1 1010.5,502.6"/><polygon points="1010.5,502.6 1033.6,497.1 1008.7,485 985.6,490.5"/><polygon points="975.2,511 950.2,498.9 950.2,491.7 975.2,503.7"/><polygon points="975.2,511 1033.6,497.1 1033.6,489.8 975.2,503.7"/><polygon points="975.2,503.7 1033.6,489.8 1008.7,477.7 950.2,491.7"/><path d="M1004.4 504L1004.4 496.8L979.4 484.7" fill="none"/></g><g fill="#00e6ff"><polygon points="1571.4,532.2 1546.4,520.2 1546.4,506.7 1571.4,518.8"/><polygon points="1571.4,532.2 1594.4,526.7 1594.4,513.3 1571.4,518.8"/><polygon points="1571.4,518.8 1594.4,513.3 1569.5,501.2 1546.4,506.7"/><polygon points="1606.7,523.8 1581.8,511.8 1581.8,498.3 1606.7,510.3"/><polygon points="1606.7,523.8 1629.8,518.3 1629.8,504.8 1606.7,510.3"/><polygon points="1606.7,510.3 1629.8,504.8 1604.8,492.8 1581.8,498.3"/><polygon points="1571.4,518.8 1546.4,506.7 1546.4,499.4 1571.4,511.5"/><polygon points="1571.4,518.8 1629.8,504.8 1629.8,497.6 1571.4,511.5"/><polygon points="1571.4,511.5 1629.8,497.6 1604.8,485.5 1546.4,499.4"/><path d="M1600.6 511.8L1600.6 504.5L1575.6 492.5" fill="none"/></g><g fill="#ff5c00"><polygon points="904.5,541.3 879.6,529.3 879.6,515.8 904.5,527.8"/><polygon points="904.5,541.3 927.6,535.8 927.6,522.3 904.5,527.8"/><polygon points="904.5,527.8 927.6,522.3 902.6,510.3 879.6,515.8"/><polygon points="939.8,532.9 914.9,520.8 914.9,507.4 939.8,519.4"/><polygon points="939.8,532.9 962.9,527.4 962.9,513.9 939.8,519.4"/><polygon points="939.8,519.4 962.9,513.9 938,501.9 914.9,507.4"/><polygon points="904.5,527.8 879.6,515.8 879.6,508.5 904.5,520.5"/><polygon points="904.5,527.8 962.9,513.9 962.9,506.6 904.5,520.5"/><polygon points="904.5,520.5 962.9,506.6 938,494.6 879.6,508.5"/><path d="M933.7 520.9L933.7 513.6L908.8 501.5" fill="none"/></g><g fill="#b7ff48"><polygon points="1500.7,549.1 1475.7,537 1475.7,523.5 1500.7,535.6"/><polygon points="1500.7,549.1 1523.8,543.6 1523.8,530.1 1500.7,535.6"/><polygon points="1500.7,535.6 1523.8,530.1 1498.8,518 1475.7,523.5"/><polygon points="1536,540.7 1511.1,528.6 1511.1,515.1 1536,527.2"/><polygon points="1536,540.7 1559.1,535.2 1559.1,521.7 1536,527.2"/><polygon points="1536,527.2 1559.1,521.7 1534.2,509.6 1511.1,515.1"/><polygon points="1500.7,535.6 1475.7,523.5 1475.7,516.2 1500.7,528.3"/><polygon points="1500.7,535.6 1559.1,521.7 1559.1,514.4 1500.7,528.3"/><polygon points="1500.7,528.3 1559.1,514.4 1534.2,502.3 1475.7,516.2"/><path d="M1529.9 528.6L1529.9 521.3L1505 509.3" fill="none"/></g><g fill="#ffdc00"><polygon points="833.8,558.1 808.9,546.1 808.9,532.6 833.8,544.7"/><polygon points="833.8,558.1 856.9,552.6 856.9,539.2 833.8,544.7"/><polygon points="833.8,544.7 856.9,539.2 832,527.1 808.9,532.6"/><polygon points="869.2,549.7 844.2,537.7 844.2,524.2 869.2,536.2"/><polygon points="869.2,549.7 892.3,544.2 892.3,530.7 869.2,536.2"/><polygon points="869.2,536.2 892.3,530.7 867.3,518.7 844.2,524.2"/><polygon points="833.8,544.7 808.9,532.6 808.9,525.3 833.8,537.4"/><polygon points="833.8,544.7 892.3,530.7 892.3,523.5 833.8,537.4"/><polygon points="833.8,537.4 892.3,523.5 867.3,511.4 808.9,525.3"/><path d="M863 537.7L863 530.4L838.1 518.4" fill="none"/></g><g fill="#ffb700"><polygon points="1430,565.9 1405.1,553.8 1405.1,540.4 1430,552.4"/><polygon points="1430,565.9 1453.1,560.4 1453.1,546.9 1430,552.4"/><polygon points="1430,552.4 1453.1,546.9 1428.2,534.9 1405.1,540.4"/><polygon points="1465.4,557.5 1440.4,545.4 1440.4,531.9 1465.4,544"/><polygon points="1465.4,557.5 1488.4,552 1488.4,538.5 1465.4,544"/><polygon points="1465.4,544 1488.4,538.5 1463.5,526.4 1440.4,531.9"/><polygon points="1430,552.4 1405.1,540.4 1405.1,533.1 1430,545.1"/><polygon points="1430,552.4 1488.4,538.5 1488.4,531.2 1430,545.1"/><polygon points="1430,545.1 1488.4,531.2 1463.5,519.2 1405.1,533.1"/><path d="M1459.2 545.5L1459.2 538.2L1434.3 526.1" fill="none"/></g><g fill="#6eff91"><polygon points="763.2,575 738.2,562.9 738.2,549.4 763.2,561.5"/><polygon points="763.2,575 786.3,569.5 786.3,556 763.2,561.5"/><polygon points="763.2,561.5 786.3,556 761.3,543.9 738.2,549.4"/><polygon points="798.5,566.6 773.6,554.5 773.6,541 798.5,553.1"/><polygon points="798.5,566.6 821.6,561.1 821.6,547.6 798.5,553.1"/><polygon points="798.5,553.1 821.6,547.6 796.6,535.5 773.6,541"/><polygon points="763.2,561.5 738.2,549.4 738.2,542.1 763.2,554.2"/><polygon points="763.2,561.5 821.6,547.6 821.6,540.3 763.2,554.2"/><polygon points="763.2,554.2 821.6,540.3 796.6,528.2 738.2,542.1"/><path d="M792.4 554.5L792.4 547.3L767.4 535.2" fill="none"/></g><g fill="#ff4900"><polygon points="1359.3,582.7 1334.4,570.7 1334.4,557.2 1359.3,569.2"/><polygon points="1359.3,582.7 1382.4,577.2 1382.4,563.7 1359.3,569.2"/><polygon points="1359.3,569.2 1382.4,563.7 1357.5,551.7 1334.4,557.2"/><polygon points="1394.7,574.3 1369.7,562.3 1369.7,548.8 1394.7,560.8"/><polygon points="1394.7,574.3 1417.8,568.8 1417.8,555.3 1394.7,560.8"/><polygon points="1394.7,560.8 1417.8,555.3 1392.8,543.3 1369.7,548.8"/><polygon points="1359.3,569.2 1334.4,557.2 1334.4,549.9 1359.3,562"/><polygon points="1359.3,569.2 1417.8,555.3 1417.8,548 1359.3,562"/><polygon points="1359.3,562 1417.8,548 1392.8,536 1334.4,549.9"/><path d="M1388.6 562.3L1388.6 555L1363.6 542.9" fill="none"/></g><g fill="#00aeff"><polygon points="727.8,583.4 702.9,571.3 702.9,557.8 727.8,569.9"/><polygon points="727.8,583.4 750.9,577.9 750.9,564.4 727.8,569.9"/><polygon points="727.8,569.9 750.9,564.4 726,552.3 702.9,557.8"/><polygon points="721.9,571.3 697,559.2 697,552 721.9,564"/><polygon points="721.9,571.3 750.9,564.4 750.9,557.1 721.9,564"/><polygon points="721.9,564 750.9,557.1 726,545.1 697,552"/></g><g fill="#e90000"><polygon points="1288.7,599.6 1263.7,587.5 1263.7,574 1288.7,586.1"/><polygon points="1288.7,599.6 1311.8,594.1 1311.8,580.6 1288.7,586.1"/><polygon points="1288.7,586.1 1311.8,580.6 1286.8,568.5 1263.7,574"/><polygon points="1324,591.1 1299.1,579.1 1299.1,565.6 1324,577.7"/><polygon points="1324,591.1 1347.1,585.6 1347.1,572.2 1324,577.7"/><polygon points="1324,577.7 1347.1,572.2 1322.2,560.1 1299.1,565.6"/><polygon points="1288.7,586.1 1263.7,574 1263.7,566.7 1288.7,578.8"/><polygon points="1288.7,586.1 1347.1,572.2 1347.1,564.9 1288.7,578.8"/><polygon points="1288.7,578.8 1347.1,564.9 1322.2,552.8 1263.7,566.7"/><path d="M1317.9 579.1L1317.9 571.8L1292.9 559.8" fill="none"/></g><g fill="#bd0000"><polygon points="1218,616.4 1193.1,604.3 1193.1,590.8 1218,602.9"/><polygon points="1218,616.4 1241.1,610.9 1241.1,597.4 1218,602.9"/><polygon points="1218,602.9 1241.1,597.4 1216.1,585.3 1193.1,590.8"/><polygon points="1253.3,608 1228.4,595.9 1228.4,582.4 1253.3,594.5"/><polygon points="1253.3,608 1276.4,602.5 1276.4,589 1253.3,594.5"/><polygon points="1253.3,594.5 1276.4,589 1251.5,576.9 1228.4,582.4"/><polygon points="1218,602.9 1193.1,590.8 1193.1,583.6 1218,595.6"/><polygon points="1218,602.9 1276.4,589 1276.4,581.7 1218,595.6"/><polygon points="1218,595.6 1276.4,581.7 1251.5,569.6 1193.1,583.6"/><path d="M1247.2 595.9L1247.2 588.7L1222.3 576.6" fill="none"/></g><g fill="#ff2500"><polygon points="1147.3,633.2 1122.4,621.2 1122.4,607.7 1147.3,619.7"/><polygon points="1147.3,633.2 1170.4,627.7 1170.4,614.2 1147.3,619.7"/><polygon points="1147.3,619.7 1170.4,614.2 1145.5,602.2 1122.4,607.7"/><polygon points="1182.7,624.8 1157.7,612.7 1157.7,599.3 1182.7,611.3"/><polygon points="1182.7,624.8 1205.8,619.3 1205.8,605.8 1182.7,611.3"/><polygon points="1182.7,611.3 1205.8,605.8 1180.8,593.8 1157.7,599.3"/><polygon points="1147.3,619.7 1122.4,607.7 1122.4,600.4 1147.3,612.5"/><polygon points="1147.3,619.7 1205.8,605.8 1205.8,598.5 1147.3,612.5"/><polygon points="1147.3,612.5 1205.8,598.5 1180.8,586.5 1122.4,600.4"/><path d="M1176.5 612.8L1176.5 605.5L1151.6 593.4" fill="none"/></g><g fill="#ff9800"><polygon points="1076.7,650 1051.7,638 1051.7,624.5 1076.7,636.6"/><polygon points="1076.7,650 1099.7,644.5 1099.7,631.1 1076.7,636.6"/><polygon points="1076.7,636.6 1099.7,631.1 1074.8,619 1051.7,624.5"/><polygon points="1112,641.6 1087.1,629.6 1087.1,616.1 1112,628.1"/><polygon points="1112,641.6 1135.1,636.1 1135.1,622.6 1112,628.1"/><polygon points="1112,628.1 1135.1,622.6 1110.1,610.6 1087.1,616.1"/><polygon points="1076.7,636.6 1051.7,624.5 1051.7,617.2 1076.7,629.3"/><polygon points="1076.7,636.6 1135.1,622.6 1135.1,615.4 1076.7,629.3"/><polygon points="1076.7,629.3 1135.1,615.4 1110.1,603.3 1051.7,617.2"/><path d="M1105.9 629.6L1105.9 622.3L1080.9 610.3" fill="none"/></g><g fill="#d1ff2e"><polygon points="1006,666.9 981,654.8 981,641.3 1006,653.4"/><polygon points="1006,666.9 1029.1,661.4 1029.1,647.9 1006,653.4"/><polygon points="1006,653.4 1029.1,647.9 1004.1,635.8 981,641.3"/><polygon points="1041.3,658.5 1016.4,646.4 1016.4,632.9 1041.3,645"/><polygon points="1041.3,658.5 1064.4,653 1064.4,639.5 1041.3,645"/><polygon points="1041.3,645 1064.4,639.5 1039.5,627.4 1016.4,632.9"/><polygon points="1006,653.4 981,641.3 981,634 1006,646.1"/><polygon points="1006,653.4 1064.4,639.5 1064.4,632.2 1006,646.1"/><polygon points="1006,646.1 1064.4,632.2 1039.5,620.1 981,634"/><path d="M1035.2 646.4L1035.2 639.2L1010.3 627.1" fill="none"/></g><g fill="#00f2ff"><polygon points="935.3,683.7 910.4,671.6 910.4,658.2 935.3,670.2"/><polygon points="935.3,683.7 958.4,678.2 958.4,664.7 935.3,670.2"/><polygon points="935.3,670.2 958.4,664.7 933.5,652.7 910.4,658.2"/><polygon points="970.7,675.3 945.7,663.2 945.7,649.7 970.7,661.8"/><polygon points="970.7,675.3 993.7,669.8 993.7,656.3 970.7,661.8"/><polygon points="970.7,661.8 993.7,656.3 968.8,644.2 945.7,649.7"/><polygon points="935.3,670.2 910.4,658.2 910.4,650.9 935.3,662.9"/><polygon points="935.3,670.2 993.7,656.3 993.7,649 935.3,662.9"/><polygon points="935.3,662.9 993.7,649 968.8,637 910.4,650.9"/><path d="M964.5 663.3L964.5 656L939.6 643.9" fill="none"/></g></g><text x="1165" y="338.5" text-anchor="middle" font-family="Liberation Sans, sans-serif" font-weight="bold" font-size="28.3" letter-spacing="0.7" fill="#000">surface: Temperature, T, Time = 7200</text><rect x="2102" y="1135.9" width="44" height="15.7" fill="#000080"/><rect x="2102" y="1120.8" width="44" height="15.7" fill="#000090"/><rect x="2102" y="1105.8" width="44" height="15.7" fill="#0000a0"/><rect x="2102" y="1090.7" width="44" height="15.7" fill="#0000b0"/><rect x="2102" y="1075.6" width="44" height="15.7" fill="#0000c0"/><rect x="2102" y="1060.5" width="44" height="15.7" fill="#0000d0"/><rect x="2102" y="1045.5" width="44" height="15.7" fill="#0000e1"/><rect x="2102" y="1030.4" width="44" height="15.7" fill="#0000f1"/><rect x="2102" y="1015.3" width="44" height="15.7" fill="#0002ff"/><rect x="2102" y="1000.2" width="44" height="15.7" fill="#0012ff"/><rect x="2102" y="985.1" width="44" height="15.7" fill="#0022ff"/><rect x="2102" y="970.1" width="44" height="15.7" fill="#0033ff"/><rect x="2102" y="955" width="44" height="15.7" fill="#0043ff"/><rect x="2102" y="939.9" width="44" height="15.7" fill="#0053ff"/><rect x="2102" y="924.8" width="44" height="15.7" fill="#0063ff"/><rect x="2102" y="909.8" width="44" height="15.7" fill="#0073ff"/><rect x="2102" y="894.7" width="44" height="15.7" fill="#0084ff"/><rect x="2102" y="879.6" width="44" height="15.7" fill="#0094ff"/><rect x="2102" y="864.5" width="44" height="15.7" fill="#00a4ff"/><rect x="2102" y="849.4" width="44" height="15.7" fill="#00b4ff"/><rect x="2102" y="834.4" width="44" height="15.7" fill="#00c4ff"/><rect x="2102" y="819.3" width="44" height="15.7" fill="#00d4ff"/><rect x="2102" y="804.2" width="44" height="15.7" fill="#00e5ff"/><rect x="2102" y="789.1" width="44" height="15.7" fill="#00f5ff"/><rect x="2102" y="774" width="44" height="15.7" fill="#06fff9"/><rect x="2102" y="759" width="44" height="15.7" fill="#16ffe9"/><rect x="2102" y="743.9" width="44" height="15.7" fill="#26ffd9"/><rect x="2102" y="728.8" width="44" height="15.7" fill="#37ffc8"/><rect x="2102" y="713.7" width="44" height="15.7" fill="#47ffb8"/><rect x="2102" y="698.7" width="44" height="15.7" fill="#57ffa8"/><rect x="2102" y="683.6" width="44" height="15.7" fill="#67ff98"/><rect x="2102" y="668.5" width="44" height="15.7" fill="#77ff88"/><rect x="2102" y="653.4" width="44" height="15.7" fill="#88ff77"/><rect x="2102" y="638.3" width="44" height="15.7" fill="#98ff67"/><rect x="2102" y="623.3" width="44" height="15.7" fill="#a8ff57"/><rect x="2102" y="608.2" width="44" height="15.7" fill="#b8ff47"/><rect x="2102" y="593.1" width="44" height="15.7" fill="#c8ff37"/><rect x="2102" y="578" width="44" height="15.7" fill="#d9ff26"/><rect x="2102" y="563" width="44" height="15.7" fill="#e9ff16"/><rect x="2102" y="547.9" width="44" height="15.7" fill="#f9ff06"/><rect x="2102" y="532.8" width="44" height="15.7" fill="#fff500"/><rect x="2102" y="517.7" width="44" height="15.7" fill="#ffe500"/><rect x="2102" y="502.6" width="44" height="15.7" fill="#ffd500"/><rect x="2102" y="487.6" width="44" height="15.7" fill="#ffc400"/><rect x="2102" y="472.5" width="44" height="15.7" fill="#ffb400"/><rect x="2102" y="457.4" width="44" height="15.7" fill="#ffa400"/><rect x="2102" y="442.3" width="44" height="15.7" fill="#ff9400"/><rect x="2102" y="427.2" width="44" height="15.7" fill="#ff8400"/><rect x="2102" y="412.2" width="44" height="15.7" fill="#ff7300"/><rect x="2102" y="397.1" width="44" height="15.7" fill="#ff6300"/><rect x="2102" y="382" width="44" height="15.7" fill="#ff5300"/><rect x="2102" y="366.9" width="44" height="15.7" fill="#ff4300"/><rect x="2102" y="351.9" width="44" height="15.7" fill="#ff3300"/><rect x="2102" y="336.8" width="44" height="15.7" fill="#ff2200"/><rect x="2102" y="321.7" width="44" height="15.7" fill="#ff1200"/><rect x="2102" y="306.6" width="44" height="15.7" fill="#ff0200"/><rect x="2102" y="291.5" width="44" height="15.7" fill="#f10000"/><rect x="2102" y="276.5" width="44" height="15.7" fill="#e10000"/><rect x="2102" y="261.4" width="44" height="15.7" fill="#d00000"/><rect x="2102" y="246.3" width="44" height="15.7" fill="#c00000"/><rect x="2102" y="231.2" width="44" height="15.7" fill="#b00000"/><rect x="2102" y="216.2" width="44" height="15.7" fill="#a00000"/><rect x="2102" y="201.1" width="44" height="15.7" fill="#900000"/><rect x="2102" y="186" width="44" height="15.7" fill="#800000"/><rect x="2102.5" y="186.5" width="43" height="964" fill="none" stroke="#262626" stroke-width="1.2"/><path d="M2102 1088.9L2112 1088.9M2102 1005.8L2112 1005.8M2102 922.8L2112 922.8M2102 839.7L2112 839.7M2102 756.6L2112 756.6M2102 673.6L2112 673.6M2102 590.5L2112 590.5M2102 507.4L2112 507.4M2102 424.3L2112 424.3M2102 341.3L2112 341.3M2102 258.2L2112 258.2" stroke="#262626" stroke-width="1.3"/><g font-family="Liberation Sans, sans-serif" font-size="24" fill="#262626"><text x="2090" y="1099.4" text-anchor="end">346</text><text x="2090" y="1016.3" text-anchor="end">348</text><text x="2090" y="933.3" text-anchor="end">350</text><text x="2090" y="850.2" text-anchor="end">352</text><text x="2090" y="767.1" text-anchor="end">354</text><text x="2090" y="684.1" text-anchor="end">356</text><text x="2090" y="601" text-anchor="end">358</text><text x="2090" y="517.9" text-anchor="end">360</text><text x="2090" y="434.8" text-anchor="end">362</text><text x="2090" y="351.8" text-anchor="end">364</text><text x="2090" y="268.7" text-anchor="end">366</text><text x="2090" y="197.5" text-anchor="end">367.7384</text><text x="2090" y="1161.5" text-anchor="end">344.5050</text></g><g stroke-width="2.6" fill="none"><path d="M259 1078L312 1059" stroke="#ff0000"/><path d="M303 1058L315 1058L306 1064Z" fill="#ff0000" stroke="#ff0000" stroke-width="1"/><path d="M259 1078L220 1055" stroke="#00ff00"/><path d="M216 1052L226 1054L220 1059Z" fill="#00ff00" stroke="#00ff00" stroke-width="1"/><path d="M259 1078L259 1030" stroke="#0000ff"/><path d="M259 1024L254.5 1033L263.5 1033Z" fill="#0000ff" stroke="#0000ff" stroke-width="1"/><circle cx="259" cy="1078.5" r="2.6" fill="#707070" stroke="none"/></g></svg>
<!-- splitter -->
<div class="a" style="left:164px;top:1179px;width:2004px;height:1px;background:#bdbdbd;"></div>
<div class="a" style="left:165px;top:1181px;width:2002px;height:13px;background:#cdcdcd;"></div>
<div class="a" style="left:1115px;top:1181px;width:99px;height:13px;background:#969696;border-top:2px solid #fff;border-left:2px solid #fff;border-right:1px solid #6d6d6d;box-sizing:border-box;"></div>
<div class="a" style="left:164px;top:1201px;width:2004px;height:2px;background:#c3c3c3;"></div>
<!-- command log -->
<div class="a" style="left:165px;top:1203px;width:2003px;height:314px;background:#e6e6e6;"></div>
<div class="a hdr" style="left:166px;top:1204px;width:1911px;height:42px;"></div>
<div class="a" style="left:166px;top:1245px;width:1911px;height:3px;background:#8b95a3;"></div>
<div class="a" style="left:165px;top:1204px;width:2px;height:313px;background:#9aa0a8;"></div>
<div class="a" style="left:2076px;top:1204px;width:3px;height:313px;background:#8b929b;"></div>
<div class="a" style="left:2165px;top:1204px;width:3px;height:313px;background:#8b929b;"></div>
<div class="a mono log" style="left:183px;top:1210px;font-weight:bold;color:#000;">Command Log</div>
<div class="a" style="left:167px;top:1248px;width:1874px;height:269px;overflow:hidden;">
<div class="a mono log" style="left:16px;top:-8px;">t-asm_f : 1.5e-01 \   0%</div>
<div class="a mono log" style="left:16px;top:27px;">t-bdr   : 2.4e+00 \   0%</div>
<div class="a mono log" style="left:16px;top:61px;">t-lc_mv : 1.9e+00 \   0%</div>
<div class="a mono log" style="left:16px;top:96px;">t-sol   : 2.4e+02 \  96%</div>
<div class="a mono log" style="left:16px;top:130px;">t-tot   : 2.5e+02 \ 100%</div>
<div class="a mono log" style="left:1px;top:166px;">--------------------------------------------------</div>
<div class="a" style="left:0;top:229px;width:1874px;height:35px;background:#0078d7;border:1px dotted #e8903a;box-sizing:border-box;"></div>
<div class="a mono log" style="left:0px;top:235.5px;color:#fff;">Evaluation result of "Temperature, T" at (0.1425,0.075,0.05): 366.683</div>
</div>
<div class="a" style="left:2041px;top:1248px;width:35px;height:269px;background:#f0f0f0;"></div>
<div class="a" style="left:2043px;top:1463px;width:31px;height:15px;background:#cdcdcd;"></div>
<svg class="a" style="left:2041px;top:1250px" width="35" height="267"><path d="M10 23L17.5 15.5L25 23" stroke="#606060" stroke-width="3" fill="none"/><path d="M10 239L17.5 246.5L25 239" stroke="#606060" stroke-width="3" fill="none"/></svg>
<!-- right tip panel -->
<div class="a" style="left:2079px;top:1248px;width:86px;height:269px;background:#f0f0f0;"></div>
<div class="a" style="left:2079px;top:1248px;width:52px;height:98px;background:#e6e6e6;"></div>
<div class="a" style="left:2079px;top:1248px;width:52px;height:229px;background:#e6e6e6;"></div>
<div class="a mono" style="left:2096px;top:1289px;font-style:italic;font-size:26.4px;color:#777;line-height:30px;width:35px;overflow:hidden;white-space:nowrap;">Tip</div>
<div class="a mono" style="left:2096px;top:1324px;font-size:26.4px;color:#777;line-height:30px;width:35px;overflow:hidden;white-space:nowrap;">with</div>
<svg class="a" style="left:2131px;top:1250px" width="34" height="267"><path d="M10 23L17 16L24 23" stroke="#c6c6c6" stroke-width="3" fill="none"/><path d="M10 203L17 210L24 203" stroke="#c6c6c6" stroke-width="3" fill="none"/></svg>
<svg class="a" style="left:2079px;top:1480px" width="86" height="37"><path d="M-2 0" /><path d="M14 8L9 14L14 20" stroke="#c6c6c6" stroke-width="2" fill="none"/><path d="M36 8L41 14L36 20" stroke="#c6c6c6" stroke-width="2" fill="none"/></svg>
<div class="a" style="left:2079px;top:1204px;width:86px;height:43px;background:#cce0f6;border:2px solid #1565a8;box-sizing:border-box;"></div>
<div class="a" style="left:2077px;top:1206px;width:86px;height:38px;font-size:29px;line-height:38px;text-align:center;color:#000;">&lt;&lt;</div>
<div class="a" style="left:162px;top:1513px;width:2006px;height:3px;background:#dcdcdc;"></div>
<div class="a" style="left:0;top:1516px;width:2172px;height:1px;background:#5f6a78;"></div>
</body></html>
